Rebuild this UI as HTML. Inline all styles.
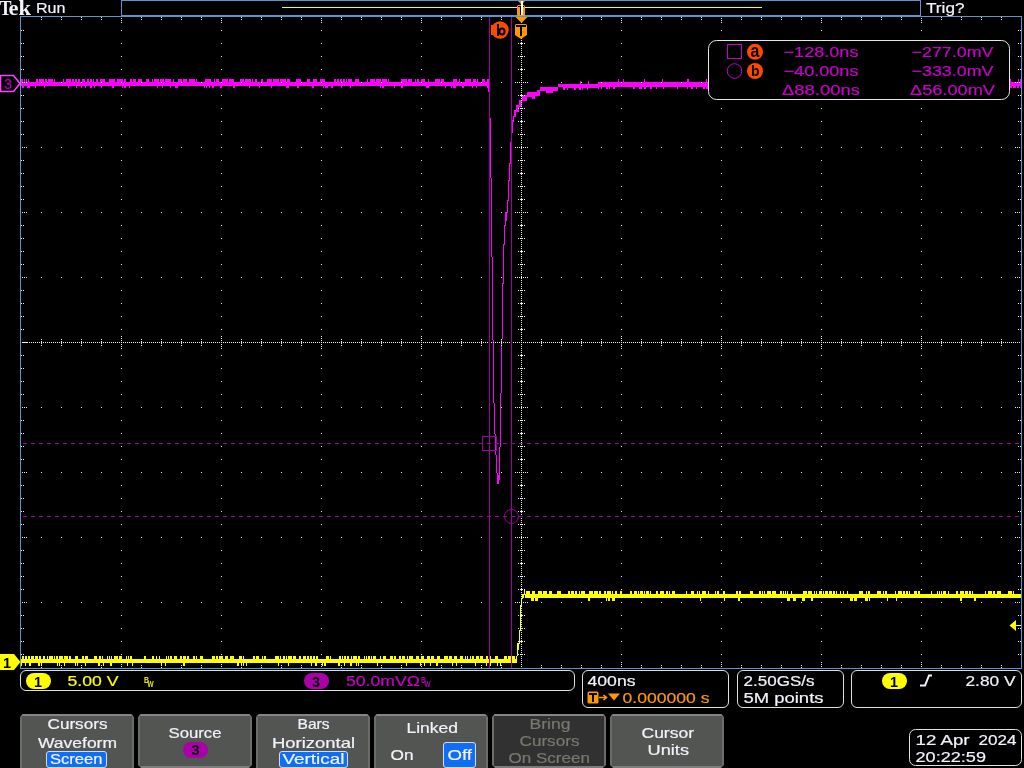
<!DOCTYPE html>
<html><head><meta charset="utf-8"><style>
html,body{margin:0;padding:0;background:#000;width:1024px;height:768px;overflow:hidden}
svg{display:block;will-change:transform}
text{white-space:pre}
</style></head><body>
<svg width="1024" height="768" viewBox="0 0 1024 768">
<rect width="1024" height="768" fill="#000"/>
<g shape-rendering="crispEdges"><rect x="121" y="0" width="800" height="1" fill="#5896d2"/><rect x="121" y="0" width="1" height="16" fill="#5896d2"/><rect x="920" y="0" width="1" height="16" fill="#5896d2"/><rect x="121" y="15" width="800" height="1" fill="#5896d2"/><rect x="282" y="7" width="480" height="1" fill="#ffff00"/><rect x="20" y="16" width="1002" height="1" fill="#5896d2"/><rect x="20" y="668" width="1002" height="1" fill="#5896d2"/><rect x="20" y="16" width="1" height="653" fill="#5896d2"/><rect x="1021" y="16" width="1" height="653" fill="#5896d2"/></g><g fill="#ff00ff" shape-rendering="crispEdges"><rect x="21" y="79" width="1" height="7"/><rect x="22" y="79" width="1" height="9"/><rect x="23" y="82" width="1" height="6"/><rect x="24" y="79" width="1" height="7"/><rect x="25" y="82" width="1" height="4"/><rect x="26" y="79" width="1" height="7"/><rect x="27" y="82" width="1" height="6"/><rect x="28" y="79" width="1" height="9"/><rect x="29" y="82" width="1" height="6"/><rect x="30" y="82" width="1" height="4"/><rect x="31" y="82" width="1" height="4"/><rect x="32" y="82" width="1" height="4"/><rect x="33" y="82" width="1" height="4"/><rect x="34" y="82" width="1" height="4"/><rect x="35" y="82" width="1" height="6"/><rect x="36" y="79" width="1" height="7"/><rect x="37" y="79" width="1" height="7"/><rect x="38" y="82" width="1" height="4"/><rect x="39" y="79" width="1" height="7"/><rect x="40" y="79" width="1" height="7"/><rect x="41" y="79" width="1" height="7"/><rect x="42" y="79" width="1" height="7"/><rect x="43" y="79" width="1" height="7"/><rect x="44" y="82" width="1" height="6"/><rect x="45" y="79" width="1" height="7"/><rect x="46" y="79" width="1" height="7"/><rect x="47" y="82" width="1" height="4"/><rect x="48" y="79" width="1" height="7"/><rect x="49" y="79" width="1" height="7"/><rect x="50" y="79" width="1" height="7"/><rect x="51" y="79" width="1" height="7"/><rect x="52" y="79" width="1" height="7"/><rect x="53" y="82" width="1" height="4"/><rect x="54" y="79" width="1" height="7"/><rect x="55" y="82" width="1" height="4"/><rect x="56" y="82" width="1" height="4"/><rect x="57" y="82" width="1" height="4"/><rect x="58" y="82" width="1" height="4"/><rect x="59" y="82" width="1" height="4"/><rect x="60" y="82" width="1" height="4"/><rect x="61" y="82" width="1" height="4"/><rect x="62" y="82" width="1" height="4"/><rect x="63" y="79" width="1" height="7"/><rect x="64" y="82" width="1" height="4"/><rect x="65" y="82" width="1" height="4"/><rect x="66" y="79" width="1" height="7"/><rect x="67" y="79" width="1" height="7"/><rect x="68" y="79" width="1" height="9"/><rect x="69" y="79" width="1" height="7"/><rect x="70" y="79" width="1" height="7"/><rect x="71" y="82" width="1" height="4"/><rect x="72" y="79" width="1" height="7"/><rect x="73" y="79" width="1" height="7"/><rect x="74" y="82" width="1" height="4"/><rect x="75" y="79" width="1" height="7"/><rect x="76" y="79" width="1" height="9"/><rect x="77" y="82" width="1" height="4"/><rect x="78" y="79" width="1" height="7"/><rect x="79" y="79" width="1" height="7"/><rect x="80" y="82" width="1" height="4"/><rect x="81" y="82" width="1" height="6"/><rect x="82" y="79" width="1" height="7"/><rect x="83" y="79" width="1" height="7"/><rect x="84" y="79" width="1" height="7"/><rect x="85" y="82" width="1" height="6"/><rect x="86" y="82" width="1" height="4"/><rect x="87" y="79" width="1" height="7"/><rect x="88" y="79" width="1" height="7"/><rect x="89" y="82" width="1" height="4"/><rect x="90" y="79" width="1" height="9"/><rect x="91" y="79" width="1" height="9"/><rect x="92" y="82" width="1" height="4"/><rect x="93" y="79" width="1" height="7"/><rect x="94" y="82" width="1" height="6"/><rect x="95" y="82" width="1" height="4"/><rect x="96" y="79" width="1" height="7"/><rect x="97" y="79" width="1" height="7"/><rect x="98" y="82" width="1" height="4"/><rect x="99" y="82" width="1" height="4"/><rect x="100" y="79" width="1" height="7"/><rect x="101" y="79" width="1" height="9"/><rect x="102" y="79" width="1" height="7"/><rect x="103" y="79" width="1" height="7"/><rect x="104" y="79" width="1" height="7"/><rect x="105" y="82" width="1" height="4"/><rect x="106" y="82" width="1" height="4"/><rect x="107" y="82" width="1" height="4"/><rect x="108" y="82" width="1" height="4"/><rect x="109" y="79" width="1" height="7"/><rect x="110" y="79" width="1" height="7"/><rect x="111" y="79" width="1" height="7"/><rect x="112" y="79" width="1" height="9"/><rect x="113" y="79" width="1" height="9"/><rect x="114" y="79" width="1" height="7"/><rect x="115" y="82" width="1" height="4"/><rect x="116" y="82" width="1" height="4"/><rect x="117" y="79" width="1" height="7"/><rect x="118" y="79" width="1" height="7"/><rect x="119" y="79" width="1" height="7"/><rect x="120" y="79" width="1" height="7"/><rect x="121" y="79" width="1" height="7"/><rect x="122" y="79" width="1" height="9"/><rect x="123" y="82" width="1" height="4"/><rect x="124" y="79" width="1" height="9"/><rect x="125" y="79" width="1" height="9"/><rect x="126" y="82" width="1" height="4"/><rect x="127" y="82" width="1" height="4"/><rect x="128" y="82" width="1" height="4"/><rect x="129" y="82" width="1" height="6"/><rect x="130" y="79" width="1" height="7"/><rect x="131" y="79" width="1" height="7"/><rect x="132" y="82" width="1" height="4"/><rect x="133" y="79" width="1" height="7"/><rect x="134" y="79" width="1" height="7"/><rect x="135" y="79" width="1" height="7"/><rect x="136" y="82" width="1" height="4"/><rect x="137" y="82" width="1" height="4"/><rect x="138" y="79" width="1" height="7"/><rect x="139" y="79" width="1" height="7"/><rect x="140" y="79" width="1" height="7"/><rect x="141" y="79" width="1" height="7"/><rect x="142" y="82" width="1" height="4"/><rect x="143" y="82" width="1" height="4"/><rect x="144" y="82" width="1" height="4"/><rect x="145" y="82" width="1" height="4"/><rect x="146" y="79" width="1" height="7"/><rect x="147" y="79" width="1" height="7"/><rect x="148" y="79" width="1" height="7"/><rect x="149" y="82" width="1" height="4"/><rect x="150" y="82" width="1" height="4"/><rect x="151" y="82" width="1" height="4"/><rect x="152" y="79" width="1" height="7"/><rect x="153" y="82" width="1" height="4"/><rect x="154" y="79" width="1" height="7"/><rect x="155" y="79" width="1" height="7"/><rect x="156" y="79" width="1" height="7"/><rect x="157" y="79" width="1" height="9"/><rect x="158" y="79" width="1" height="7"/><rect x="159" y="82" width="1" height="4"/><rect x="160" y="79" width="1" height="7"/><rect x="161" y="79" width="1" height="7"/><rect x="162" y="79" width="1" height="9"/><rect x="163" y="79" width="1" height="7"/><rect x="164" y="82" width="1" height="4"/><rect x="165" y="79" width="1" height="7"/><rect x="166" y="79" width="1" height="7"/><rect x="167" y="79" width="1" height="7"/><rect x="168" y="79" width="1" height="7"/><rect x="169" y="79" width="1" height="7"/><rect x="170" y="79" width="1" height="9"/><rect x="171" y="82" width="1" height="4"/><rect x="172" y="82" width="1" height="4"/><rect x="173" y="79" width="1" height="7"/><rect x="174" y="82" width="1" height="4"/><rect x="175" y="82" width="1" height="6"/><rect x="176" y="82" width="1" height="6"/><rect x="177" y="82" width="1" height="6"/><rect x="178" y="79" width="1" height="7"/><rect x="179" y="79" width="1" height="7"/><rect x="180" y="79" width="1" height="7"/><rect x="181" y="79" width="1" height="7"/><rect x="182" y="82" width="1" height="4"/><rect x="183" y="79" width="1" height="7"/><rect x="184" y="79" width="1" height="7"/><rect x="185" y="79" width="1" height="7"/><rect x="186" y="79" width="1" height="7"/><rect x="187" y="82" width="1" height="4"/><rect x="188" y="82" width="1" height="4"/><rect x="189" y="79" width="1" height="7"/><rect x="190" y="79" width="1" height="7"/><rect x="191" y="79" width="1" height="7"/><rect x="192" y="79" width="1" height="7"/><rect x="193" y="79" width="1" height="7"/><rect x="194" y="79" width="1" height="7"/><rect x="195" y="82" width="1" height="4"/><rect x="196" y="79" width="1" height="7"/><rect x="197" y="82" width="1" height="4"/><rect x="198" y="82" width="1" height="4"/><rect x="199" y="82" width="1" height="4"/><rect x="200" y="82" width="1" height="4"/><rect x="201" y="82" width="1" height="4"/><rect x="202" y="82" width="1" height="4"/><rect x="203" y="82" width="1" height="4"/><rect x="204" y="82" width="1" height="6"/><rect x="205" y="79" width="1" height="7"/><rect x="206" y="79" width="1" height="9"/><rect x="207" y="79" width="1" height="7"/><rect x="208" y="79" width="1" height="7"/><rect x="209" y="79" width="1" height="9"/><rect x="210" y="79" width="1" height="7"/><rect x="211" y="82" width="1" height="4"/><rect x="212" y="82" width="1" height="6"/><rect x="213" y="82" width="1" height="6"/><rect x="214" y="79" width="1" height="7"/><rect x="215" y="82" width="1" height="4"/><rect x="216" y="79" width="1" height="7"/><rect x="217" y="79" width="1" height="7"/><rect x="218" y="79" width="1" height="7"/><rect x="219" y="82" width="1" height="4"/><rect x="220" y="82" width="1" height="6"/><rect x="221" y="82" width="1" height="6"/><rect x="222" y="79" width="1" height="7"/><rect x="223" y="79" width="1" height="7"/><rect x="224" y="79" width="1" height="7"/><rect x="225" y="79" width="1" height="7"/><rect x="226" y="79" width="1" height="7"/><rect x="227" y="79" width="1" height="7"/><rect x="228" y="82" width="1" height="4"/><rect x="229" y="79" width="1" height="7"/><rect x="230" y="79" width="1" height="7"/><rect x="231" y="79" width="1" height="7"/><rect x="232" y="79" width="1" height="7"/><rect x="233" y="79" width="1" height="9"/><rect x="234" y="82" width="1" height="6"/><rect x="235" y="82" width="1" height="4"/><rect x="236" y="82" width="1" height="4"/><rect x="237" y="82" width="1" height="4"/><rect x="238" y="82" width="1" height="4"/><rect x="239" y="82" width="1" height="4"/><rect x="240" y="79" width="1" height="7"/><rect x="241" y="79" width="1" height="7"/><rect x="242" y="79" width="1" height="7"/><rect x="243" y="79" width="1" height="7"/><rect x="244" y="82" width="1" height="4"/><rect x="245" y="79" width="1" height="7"/><rect x="246" y="79" width="1" height="7"/><rect x="247" y="79" width="1" height="7"/><rect x="248" y="79" width="1" height="7"/><rect x="249" y="79" width="1" height="9"/><rect x="250" y="79" width="1" height="7"/><rect x="251" y="82" width="1" height="4"/><rect x="252" y="79" width="1" height="7"/><rect x="253" y="82" width="1" height="4"/><rect x="254" y="82" width="1" height="4"/><rect x="255" y="79" width="1" height="7"/><rect x="256" y="79" width="1" height="7"/><rect x="257" y="82" width="1" height="4"/><rect x="258" y="82" width="1" height="4"/><rect x="259" y="82" width="1" height="6"/><rect x="260" y="82" width="1" height="4"/><rect x="261" y="79" width="1" height="7"/><rect x="262" y="79" width="1" height="7"/><rect x="263" y="82" width="1" height="4"/><rect x="264" y="82" width="1" height="4"/><rect x="265" y="82" width="1" height="4"/><rect x="266" y="82" width="1" height="4"/><rect x="267" y="79" width="1" height="7"/><rect x="268" y="79" width="1" height="7"/><rect x="269" y="79" width="1" height="7"/><rect x="270" y="79" width="1" height="7"/><rect x="271" y="79" width="1" height="9"/><rect x="272" y="82" width="1" height="4"/><rect x="273" y="79" width="1" height="7"/><rect x="274" y="79" width="1" height="7"/><rect x="275" y="79" width="1" height="7"/><rect x="276" y="79" width="1" height="7"/><rect x="277" y="79" width="1" height="7"/><rect x="278" y="79" width="1" height="7"/><rect x="279" y="82" width="1" height="4"/><rect x="280" y="79" width="1" height="7"/><rect x="281" y="79" width="1" height="7"/><rect x="282" y="79" width="1" height="7"/><rect x="283" y="79" width="1" height="7"/><rect x="284" y="79" width="1" height="7"/><rect x="285" y="79" width="1" height="7"/><rect x="286" y="82" width="1" height="6"/><rect x="287" y="79" width="1" height="9"/><rect x="288" y="79" width="1" height="9"/><rect x="289" y="79" width="1" height="7"/><rect x="290" y="82" width="1" height="4"/><rect x="291" y="82" width="1" height="4"/><rect x="292" y="82" width="1" height="4"/><rect x="293" y="82" width="1" height="4"/><rect x="294" y="82" width="1" height="4"/><rect x="295" y="82" width="1" height="4"/><rect x="296" y="79" width="1" height="7"/><rect x="297" y="79" width="1" height="9"/><rect x="298" y="79" width="1" height="9"/><rect x="299" y="79" width="1" height="7"/><rect x="300" y="79" width="1" height="7"/><rect x="301" y="82" width="1" height="4"/><rect x="302" y="82" width="1" height="4"/><rect x="303" y="82" width="1" height="4"/><rect x="304" y="82" width="1" height="4"/><rect x="305" y="82" width="1" height="4"/><rect x="306" y="82" width="1" height="4"/><rect x="307" y="79" width="1" height="7"/><rect x="308" y="79" width="1" height="7"/><rect x="309" y="79" width="1" height="7"/><rect x="310" y="82" width="1" height="4"/><rect x="311" y="82" width="1" height="4"/><rect x="312" y="82" width="1" height="6"/><rect x="313" y="79" width="1" height="9"/><rect x="314" y="79" width="1" height="7"/><rect x="315" y="79" width="1" height="7"/><rect x="316" y="79" width="1" height="7"/><rect x="317" y="82" width="1" height="4"/><rect x="318" y="82" width="1" height="4"/><rect x="319" y="82" width="1" height="4"/><rect x="320" y="79" width="1" height="7"/><rect x="321" y="79" width="1" height="7"/><rect x="322" y="79" width="1" height="7"/><rect x="323" y="79" width="1" height="9"/><rect x="324" y="79" width="1" height="7"/><rect x="325" y="82" width="1" height="6"/><rect x="326" y="82" width="1" height="6"/><rect x="327" y="82" width="1" height="6"/><rect x="328" y="82" width="1" height="4"/><rect x="329" y="82" width="1" height="4"/><rect x="330" y="82" width="1" height="4"/><rect x="331" y="82" width="1" height="6"/><rect x="332" y="82" width="1" height="6"/><rect x="333" y="82" width="1" height="4"/><rect x="334" y="79" width="1" height="7"/><rect x="335" y="79" width="1" height="7"/><rect x="336" y="82" width="1" height="4"/><rect x="337" y="79" width="1" height="7"/><rect x="338" y="79" width="1" height="7"/><rect x="339" y="82" width="1" height="4"/><rect x="340" y="79" width="1" height="7"/><rect x="341" y="79" width="1" height="9"/><rect x="342" y="82" width="1" height="4"/><rect x="343" y="79" width="1" height="7"/><rect x="344" y="79" width="1" height="7"/><rect x="345" y="82" width="1" height="4"/><rect x="346" y="79" width="1" height="7"/><rect x="347" y="82" width="1" height="4"/><rect x="348" y="79" width="1" height="7"/><rect x="349" y="79" width="1" height="7"/><rect x="350" y="79" width="1" height="9"/><rect x="351" y="79" width="1" height="7"/><rect x="352" y="82" width="1" height="4"/><rect x="353" y="82" width="1" height="4"/><rect x="354" y="82" width="1" height="4"/><rect x="355" y="79" width="1" height="7"/><rect x="356" y="79" width="1" height="7"/><rect x="357" y="79" width="1" height="7"/><rect x="358" y="79" width="1" height="7"/><rect x="359" y="82" width="1" height="4"/><rect x="360" y="82" width="1" height="4"/><rect x="361" y="82" width="1" height="4"/><rect x="362" y="82" width="1" height="4"/><rect x="363" y="82" width="1" height="4"/><rect x="364" y="82" width="1" height="4"/><rect x="365" y="82" width="1" height="4"/><rect x="366" y="82" width="1" height="4"/><rect x="367" y="79" width="1" height="7"/><rect x="368" y="82" width="1" height="4"/><rect x="369" y="82" width="1" height="4"/><rect x="370" y="79" width="1" height="7"/><rect x="371" y="79" width="1" height="7"/><rect x="372" y="79" width="1" height="7"/><rect x="373" y="79" width="1" height="7"/><rect x="374" y="79" width="1" height="7"/><rect x="375" y="82" width="1" height="4"/><rect x="376" y="79" width="1" height="7"/><rect x="377" y="79" width="1" height="7"/><rect x="378" y="79" width="1" height="7"/><rect x="379" y="79" width="1" height="7"/><rect x="380" y="79" width="1" height="9"/><rect x="381" y="82" width="1" height="4"/><rect x="382" y="79" width="1" height="9"/><rect x="383" y="79" width="1" height="9"/><rect x="384" y="79" width="1" height="7"/><rect x="385" y="79" width="1" height="7"/><rect x="386" y="79" width="1" height="7"/><rect x="387" y="82" width="1" height="4"/><rect x="388" y="79" width="1" height="7"/><rect x="389" y="82" width="1" height="4"/><rect x="390" y="82" width="1" height="4"/><rect x="391" y="82" width="1" height="4"/><rect x="392" y="82" width="1" height="4"/><rect x="393" y="82" width="1" height="4"/><rect x="394" y="82" width="1" height="6"/><rect x="395" y="82" width="1" height="4"/><rect x="396" y="82" width="1" height="4"/><rect x="397" y="82" width="1" height="4"/><rect x="398" y="82" width="1" height="4"/><rect x="399" y="82" width="1" height="4"/><rect x="400" y="82" width="1" height="4"/><rect x="401" y="79" width="1" height="9"/><rect x="402" y="79" width="1" height="9"/><rect x="403" y="79" width="1" height="7"/><rect x="404" y="79" width="1" height="7"/><rect x="405" y="79" width="1" height="7"/><rect x="406" y="79" width="1" height="7"/><rect x="407" y="82" width="1" height="4"/><rect x="408" y="79" width="1" height="7"/><rect x="409" y="79" width="1" height="7"/><rect x="410" y="79" width="1" height="7"/><rect x="411" y="79" width="1" height="7"/><rect x="412" y="82" width="1" height="4"/><rect x="413" y="82" width="1" height="4"/><rect x="414" y="82" width="1" height="4"/><rect x="415" y="79" width="1" height="7"/><rect x="416" y="82" width="1" height="4"/><rect x="417" y="79" width="1" height="7"/><rect x="418" y="79" width="1" height="7"/><rect x="419" y="82" width="1" height="4"/><rect x="420" y="82" width="1" height="4"/><rect x="421" y="79" width="1" height="7"/><rect x="422" y="79" width="1" height="7"/><rect x="423" y="79" width="1" height="7"/><rect x="424" y="79" width="1" height="7"/><rect x="425" y="82" width="1" height="4"/><rect x="426" y="82" width="1" height="6"/><rect x="427" y="82" width="1" height="6"/><rect x="428" y="79" width="1" height="9"/><rect x="429" y="82" width="1" height="4"/><rect x="430" y="82" width="1" height="4"/><rect x="431" y="82" width="1" height="4"/><rect x="432" y="82" width="1" height="4"/><rect x="433" y="82" width="1" height="4"/><rect x="434" y="82" width="1" height="4"/><rect x="435" y="79" width="1" height="7"/><rect x="436" y="79" width="1" height="7"/><rect x="437" y="79" width="1" height="7"/><rect x="438" y="79" width="1" height="7"/><rect x="439" y="79" width="1" height="7"/><rect x="440" y="82" width="1" height="4"/><rect x="441" y="79" width="1" height="7"/><rect x="442" y="79" width="1" height="7"/><rect x="443" y="79" width="1" height="7"/><rect x="444" y="82" width="1" height="4"/><rect x="445" y="82" width="1" height="6"/><rect x="446" y="82" width="1" height="4"/><rect x="447" y="82" width="1" height="4"/><rect x="448" y="82" width="1" height="4"/><rect x="449" y="82" width="1" height="4"/><rect x="450" y="82" width="1" height="4"/><rect x="451" y="82" width="1" height="6"/><rect x="452" y="82" width="1" height="4"/><rect x="453" y="79" width="1" height="9"/><rect x="454" y="79" width="1" height="9"/><rect x="455" y="79" width="1" height="9"/><rect x="456" y="79" width="1" height="7"/><rect x="457" y="82" width="1" height="4"/><rect x="458" y="82" width="1" height="4"/><rect x="459" y="79" width="1" height="7"/><rect x="460" y="82" width="1" height="4"/><rect x="461" y="82" width="1" height="4"/><rect x="462" y="82" width="1" height="6"/><rect x="463" y="82" width="1" height="6"/><rect x="464" y="82" width="1" height="4"/><rect x="465" y="79" width="1" height="7"/><rect x="466" y="79" width="1" height="7"/><rect x="467" y="79" width="1" height="7"/><rect x="468" y="79" width="1" height="7"/><rect x="469" y="79" width="1" height="7"/><rect x="470" y="79" width="1" height="7"/><rect x="471" y="82" width="1" height="4"/><rect x="472" y="82" width="1" height="6"/><rect x="473" y="79" width="1" height="7"/><rect x="474" y="79" width="1" height="7"/><rect x="475" y="79" width="1" height="7"/><rect x="476" y="82" width="1" height="6"/><rect x="477" y="79" width="1" height="7"/><rect x="478" y="82" width="1" height="4"/><rect x="479" y="82" width="1" height="4"/><rect x="480" y="82" width="1" height="4"/><rect x="481" y="82" width="1" height="4"/><rect x="482" y="79" width="1" height="7"/><rect x="483" y="79" width="1" height="7"/><rect x="484" y="79" width="1" height="7"/><rect x="485" y="82" width="1" height="4"/><rect x="486" y="82" width="1" height="4"/><rect x="487" y="79" width="1" height="9"/><rect x="488" y="79" width="1" height="7"/><rect x="488" y="82" width="1" height="10"/><rect x="489" y="82" width="1" height="36"/><rect x="490" y="118" width="1" height="60"/><rect x="491" y="178" width="1" height="79"/><rect x="492" y="257" width="1" height="83"/><rect x="493" y="340" width="1" height="63"/><rect x="494" y="403" width="1" height="31"/><rect x="495" y="434" width="1" height="21"/><rect x="496" y="455" width="1" height="18"/><rect x="497" y="473" width="1" height="11"/><rect x="498" y="475" width="1" height="9"/><rect x="499" y="447" width="1" height="33"/><rect x="500" y="393" width="1" height="54"/><rect x="501" y="340" width="1" height="53"/><rect x="502" y="283" width="1" height="56"/><rect x="503" y="244" width="1" height="40"/><rect x="504" y="225" width="1" height="20"/><rect x="505" y="212" width="1" height="14"/><rect x="506" y="212" width="1" height="9"/><rect x="507" y="200" width="1" height="13"/><rect x="508" y="180" width="1" height="21"/><rect x="509" y="163" width="1" height="18"/><rect x="510" y="142" width="1" height="22"/><rect x="511" y="118" width="1" height="25"/><rect x="512" y="120" width="1" height="13"/><rect x="513" y="116" width="1" height="6"/><rect x="514" y="110" width="1" height="7"/><rect x="515" y="110" width="1" height="7"/><rect x="516" y="105" width="1" height="7"/><rect x="517" y="105" width="1" height="7"/><rect x="518" y="105" width="1" height="7"/><rect x="519" y="100" width="1" height="7"/><rect x="520" y="100" width="1" height="7"/><rect x="521" y="100" width="1" height="7"/><rect x="522" y="95" width="1" height="6"/><rect x="523" y="95" width="1" height="6"/><rect x="524" y="95" width="1" height="6"/><rect x="525" y="95" width="1" height="6"/><rect x="526" y="95" width="1" height="6"/><rect x="527" y="92" width="1" height="5"/><rect x="528" y="92" width="1" height="5"/><rect x="529" y="92" width="1" height="5"/><rect x="530" y="92" width="1" height="5"/><rect x="531" y="92" width="1" height="5"/><rect x="532" y="92" width="1" height="7"/><rect x="533" y="92" width="1" height="7"/><rect x="534" y="92" width="1" height="7"/><rect x="535" y="92" width="1" height="4"/><rect x="536" y="92" width="1" height="4"/><rect x="537" y="90" width="1" height="6"/><rect x="538" y="90" width="1" height="6"/><rect x="539" y="90" width="1" height="6"/><rect x="540" y="87" width="1" height="4"/><rect x="541" y="87" width="1" height="4"/><rect x="542" y="87" width="1" height="4"/><rect x="543" y="87" width="1" height="4"/><rect x="544" y="87" width="1" height="4"/><rect x="545" y="87" width="1" height="4"/><rect x="546" y="87" width="1" height="6"/><rect x="547" y="87" width="1" height="6"/><rect x="548" y="87" width="1" height="6"/><rect x="549" y="87" width="1" height="6"/><rect x="550" y="87" width="1" height="6"/><rect x="551" y="87" width="1" height="6"/><rect x="552" y="87" width="1" height="6"/><rect x="553" y="87" width="1" height="4"/><rect x="554" y="87" width="1" height="4"/><rect x="555" y="87" width="1" height="4"/><rect x="556" y="87" width="1" height="4"/><rect x="557" y="87" width="1" height="4"/><rect x="558" y="84" width="1" height="3"/><rect x="559" y="84" width="1" height="3"/><rect x="560" y="84" width="1" height="3"/><rect x="561" y="84" width="1" height="3"/><rect x="562" y="84" width="1" height="3"/><rect x="563" y="84" width="1" height="6"/><rect x="564" y="84" width="1" height="6"/><rect x="565" y="84" width="1" height="4"/><rect x="566" y="84" width="1" height="4"/><rect x="567" y="84" width="1" height="6"/><rect x="568" y="84" width="1" height="4"/><rect x="569" y="84" width="1" height="4"/><rect x="570" y="84" width="1" height="4"/><rect x="571" y="84" width="1" height="4"/><rect x="572" y="84" width="1" height="4"/><rect x="573" y="84" width="1" height="4"/><rect x="574" y="84" width="1" height="6"/><rect x="575" y="84" width="1" height="6"/><rect x="576" y="84" width="1" height="4"/><rect x="577" y="84" width="1" height="4"/><rect x="578" y="84" width="1" height="4"/><rect x="579" y="84" width="1" height="6"/><rect x="580" y="81" width="1" height="9"/><rect x="581" y="84" width="1" height="4"/><rect x="582" y="84" width="1" height="6"/><rect x="583" y="84" width="1" height="4"/><rect x="584" y="84" width="1" height="4"/><rect x="585" y="84" width="1" height="4"/><rect x="586" y="84" width="1" height="4"/><rect x="587" y="84" width="1" height="6"/><rect x="588" y="81" width="1" height="7"/><rect x="589" y="84" width="1" height="4"/><rect x="590" y="84" width="1" height="4"/><rect x="591" y="84" width="1" height="4"/><rect x="592" y="84" width="1" height="4"/><rect x="593" y="84" width="1" height="4"/><rect x="594" y="84" width="1" height="4"/><rect x="595" y="84" width="1" height="4"/><rect x="596" y="84" width="1" height="4"/><rect x="597" y="84" width="1" height="4"/><rect x="598" y="82" width="1" height="7"/><rect x="599" y="82" width="1" height="5"/><rect x="600" y="82" width="1" height="5"/><rect x="601" y="82" width="1" height="7"/><rect x="602" y="82" width="1" height="5"/><rect x="603" y="82" width="1" height="5"/><rect x="604" y="82" width="1" height="5"/><rect x="605" y="82" width="1" height="5"/><rect x="606" y="82" width="1" height="7"/><rect x="607" y="82" width="1" height="7"/><rect x="608" y="82" width="1" height="5"/><rect x="609" y="82" width="1" height="7"/><rect x="610" y="82" width="1" height="5"/><rect x="611" y="82" width="1" height="5"/><rect x="612" y="82" width="1" height="5"/><rect x="613" y="82" width="1" height="7"/><rect x="614" y="82" width="1" height="7"/><rect x="615" y="82" width="1" height="5"/><rect x="616" y="82" width="1" height="5"/><rect x="617" y="82" width="1" height="5"/><rect x="618" y="79" width="1" height="8"/><rect x="619" y="82" width="1" height="5"/><rect x="620" y="82" width="1" height="5"/><rect x="621" y="82" width="1" height="5"/><rect x="622" y="82" width="1" height="5"/><rect x="623" y="79" width="1" height="8"/><rect x="624" y="82" width="1" height="5"/><rect x="625" y="82" width="1" height="5"/><rect x="626" y="82" width="1" height="5"/><rect x="627" y="82" width="1" height="5"/><rect x="628" y="82" width="1" height="5"/><rect x="629" y="82" width="1" height="5"/><rect x="630" y="82" width="1" height="5"/><rect x="631" y="82" width="1" height="5"/><rect x="632" y="82" width="1" height="5"/><rect x="633" y="82" width="1" height="7"/><rect x="634" y="82" width="1" height="7"/><rect x="635" y="82" width="1" height="5"/><rect x="636" y="82" width="1" height="5"/><rect x="637" y="82" width="1" height="5"/><rect x="638" y="82" width="1" height="5"/><rect x="639" y="82" width="1" height="7"/><rect x="640" y="82" width="1" height="7"/><rect x="641" y="82" width="1" height="7"/><rect x="642" y="82" width="1" height="5"/><rect x="643" y="82" width="1" height="5"/><rect x="644" y="79" width="1" height="10"/><rect x="645" y="82" width="1" height="7"/><rect x="646" y="82" width="1" height="5"/><rect x="647" y="82" width="1" height="5"/><rect x="648" y="82" width="1" height="5"/><rect x="649" y="82" width="1" height="5"/><rect x="650" y="82" width="1" height="7"/><rect x="651" y="82" width="1" height="7"/><rect x="652" y="82" width="1" height="5"/><rect x="653" y="82" width="1" height="5"/><rect x="654" y="82" width="1" height="5"/><rect x="655" y="82" width="1" height="5"/><rect x="656" y="82" width="1" height="7"/><rect x="657" y="82" width="1" height="5"/><rect x="658" y="82" width="1" height="5"/><rect x="659" y="82" width="1" height="5"/><rect x="660" y="82" width="1" height="5"/><rect x="661" y="82" width="1" height="5"/><rect x="662" y="79" width="1" height="8"/><rect x="663" y="82" width="1" height="7"/><rect x="664" y="82" width="1" height="5"/><rect x="665" y="82" width="1" height="5"/><rect x="666" y="82" width="1" height="5"/><rect x="667" y="82" width="1" height="5"/><rect x="668" y="82" width="1" height="5"/><rect x="669" y="82" width="1" height="5"/><rect x="670" y="82" width="1" height="5"/><rect x="671" y="82" width="1" height="5"/><rect x="672" y="82" width="1" height="5"/><rect x="673" y="82" width="1" height="5"/><rect x="674" y="82" width="1" height="5"/><rect x="675" y="82" width="1" height="5"/><rect x="676" y="82" width="1" height="5"/><rect x="677" y="82" width="1" height="7"/><rect x="678" y="82" width="1" height="5"/><rect x="679" y="82" width="1" height="5"/><rect x="680" y="82" width="1" height="5"/><rect x="681" y="82" width="1" height="5"/><rect x="682" y="82" width="1" height="5"/><rect x="683" y="82" width="1" height="5"/><rect x="684" y="82" width="1" height="5"/><rect x="685" y="82" width="1" height="5"/><rect x="686" y="82" width="1" height="5"/><rect x="687" y="79" width="1" height="10"/><rect x="688" y="79" width="1" height="8"/><rect x="689" y="82" width="1" height="5"/><rect x="690" y="82" width="1" height="5"/><rect x="691" y="82" width="1" height="7"/><rect x="692" y="82" width="1" height="7"/><rect x="693" y="82" width="1" height="5"/><rect x="694" y="82" width="1" height="5"/><rect x="695" y="82" width="1" height="5"/><rect x="696" y="82" width="1" height="7"/><rect x="697" y="82" width="1" height="5"/><rect x="698" y="82" width="1" height="5"/><rect x="699" y="82" width="1" height="5"/><rect x="700" y="82" width="1" height="5"/><rect x="701" y="82" width="1" height="5"/><rect x="702" y="82" width="1" height="5"/><rect x="703" y="82" width="1" height="7"/><rect x="704" y="82" width="1" height="7"/><rect x="705" y="82" width="1" height="5"/><rect x="706" y="79" width="1" height="10"/><rect x="707" y="82" width="1" height="7"/><rect x="1009" y="82" width="1" height="4"/><rect x="1010" y="79" width="1" height="9"/><rect x="1011" y="82" width="1" height="6"/><rect x="1012" y="82" width="1" height="4"/><rect x="1013" y="82" width="1" height="6"/><rect x="1014" y="82" width="1" height="6"/><rect x="1015" y="82" width="1" height="6"/><rect x="1016" y="82" width="1" height="4"/><rect x="1017" y="82" width="1" height="6"/><rect x="1018" y="79" width="1" height="9"/><rect x="1019" y="82" width="1" height="4"/><rect x="1020" y="79" width="1" height="9"/></g><g fill="#ffff00" shape-rendering="crispEdges"><rect x="21" y="659" width="1" height="7"/><rect x="22" y="656" width="1" height="7"/><rect x="23" y="656" width="1" height="7"/><rect x="24" y="659" width="1" height="4"/><rect x="25" y="656" width="1" height="10"/><rect x="26" y="656" width="1" height="7"/><rect x="27" y="659" width="1" height="4"/><rect x="28" y="656" width="1" height="7"/><rect x="29" y="656" width="1" height="10"/><rect x="30" y="659" width="1" height="7"/><rect x="31" y="656" width="1" height="7"/><rect x="32" y="656" width="1" height="7"/><rect x="33" y="656" width="1" height="7"/><rect x="34" y="659" width="1" height="4"/><rect x="35" y="656" width="1" height="7"/><rect x="36" y="656" width="1" height="7"/><rect x="37" y="656" width="1" height="7"/><rect x="38" y="659" width="1" height="7"/><rect x="39" y="656" width="1" height="10"/><rect x="40" y="656" width="1" height="7"/><rect x="41" y="659" width="1" height="7"/><rect x="42" y="659" width="1" height="4"/><rect x="43" y="656" width="1" height="7"/><rect x="44" y="656" width="1" height="7"/><rect x="45" y="659" width="1" height="4"/><rect x="46" y="659" width="1" height="4"/><rect x="47" y="656" width="1" height="7"/><rect x="48" y="659" width="1" height="4"/><rect x="49" y="656" width="1" height="7"/><rect x="50" y="656" width="1" height="7"/><rect x="51" y="656" width="1" height="7"/><rect x="52" y="656" width="1" height="7"/><rect x="53" y="659" width="1" height="4"/><rect x="54" y="656" width="1" height="7"/><rect x="55" y="659" width="1" height="4"/><rect x="56" y="656" width="1" height="7"/><rect x="57" y="656" width="1" height="10"/><rect x="58" y="659" width="1" height="4"/><rect x="59" y="656" width="1" height="10"/><rect x="60" y="656" width="1" height="7"/><rect x="61" y="656" width="1" height="7"/><rect x="62" y="656" width="1" height="7"/><rect x="63" y="659" width="1" height="4"/><rect x="64" y="656" width="1" height="10"/><rect x="65" y="656" width="1" height="7"/><rect x="66" y="656" width="1" height="7"/><rect x="67" y="656" width="1" height="7"/><rect x="68" y="659" width="1" height="4"/><rect x="69" y="656" width="1" height="7"/><rect x="70" y="656" width="1" height="7"/><rect x="71" y="659" width="1" height="4"/><rect x="72" y="659" width="1" height="4"/><rect x="73" y="659" width="1" height="4"/><rect x="74" y="659" width="1" height="4"/><rect x="75" y="656" width="1" height="10"/><rect x="76" y="656" width="1" height="7"/><rect x="77" y="656" width="1" height="10"/><rect x="78" y="659" width="1" height="4"/><rect x="79" y="659" width="1" height="4"/><rect x="80" y="659" width="1" height="4"/><rect x="81" y="659" width="1" height="4"/><rect x="82" y="656" width="1" height="7"/><rect x="83" y="656" width="1" height="7"/><rect x="84" y="659" width="1" height="4"/><rect x="85" y="656" width="1" height="10"/><rect x="86" y="656" width="1" height="7"/><rect x="87" y="656" width="1" height="7"/><rect x="88" y="659" width="1" height="4"/><rect x="89" y="659" width="1" height="4"/><rect x="90" y="659" width="1" height="4"/><rect x="91" y="659" width="1" height="4"/><rect x="92" y="659" width="1" height="4"/><rect x="93" y="659" width="1" height="4"/><rect x="94" y="656" width="1" height="7"/><rect x="95" y="656" width="1" height="7"/><rect x="96" y="656" width="1" height="7"/><rect x="97" y="659" width="1" height="4"/><rect x="98" y="659" width="1" height="7"/><rect x="99" y="656" width="1" height="10"/><rect x="100" y="656" width="1" height="7"/><rect x="101" y="659" width="1" height="4"/><rect x="102" y="656" width="1" height="7"/><rect x="103" y="659" width="1" height="7"/><rect x="104" y="659" width="1" height="4"/><rect x="105" y="659" width="1" height="4"/><rect x="106" y="659" width="1" height="4"/><rect x="107" y="656" width="1" height="7"/><rect x="108" y="659" width="1" height="4"/><rect x="109" y="656" width="1" height="7"/><rect x="110" y="659" width="1" height="7"/><rect x="111" y="656" width="1" height="10"/><rect x="112" y="659" width="1" height="4"/><rect x="113" y="659" width="1" height="4"/><rect x="114" y="656" width="1" height="7"/><rect x="115" y="656" width="1" height="7"/><rect x="116" y="656" width="1" height="7"/><rect x="117" y="656" width="1" height="7"/><rect x="118" y="659" width="1" height="4"/><rect x="119" y="656" width="1" height="7"/><rect x="120" y="656" width="1" height="7"/><rect x="121" y="656" width="1" height="7"/><rect x="122" y="659" width="1" height="4"/><rect x="123" y="659" width="1" height="4"/><rect x="124" y="659" width="1" height="4"/><rect x="125" y="659" width="1" height="4"/><rect x="126" y="656" width="1" height="7"/><rect x="127" y="659" width="1" height="7"/><rect x="128" y="656" width="1" height="7"/><rect x="129" y="659" width="1" height="4"/><rect x="130" y="656" width="1" height="7"/><rect x="131" y="656" width="1" height="7"/><rect x="132" y="659" width="1" height="7"/><rect x="133" y="659" width="1" height="4"/><rect x="134" y="659" width="1" height="4"/><rect x="135" y="659" width="1" height="4"/><rect x="136" y="659" width="1" height="4"/><rect x="137" y="659" width="1" height="4"/><rect x="138" y="659" width="1" height="4"/><rect x="139" y="659" width="1" height="4"/><rect x="140" y="659" width="1" height="4"/><rect x="141" y="659" width="1" height="4"/><rect x="142" y="659" width="1" height="4"/><rect x="143" y="659" width="1" height="4"/><rect x="144" y="656" width="1" height="7"/><rect x="145" y="656" width="1" height="7"/><rect x="146" y="659" width="1" height="4"/><rect x="147" y="659" width="1" height="4"/><rect x="148" y="659" width="1" height="4"/><rect x="149" y="659" width="1" height="4"/><rect x="150" y="659" width="1" height="4"/><rect x="151" y="659" width="1" height="4"/><rect x="152" y="656" width="1" height="7"/><rect x="153" y="656" width="1" height="7"/><rect x="154" y="659" width="1" height="4"/><rect x="155" y="659" width="1" height="4"/><rect x="156" y="656" width="1" height="7"/><rect x="157" y="659" width="1" height="4"/><rect x="158" y="659" width="1" height="4"/><rect x="159" y="656" width="1" height="7"/><rect x="160" y="659" width="1" height="4"/><rect x="161" y="659" width="1" height="7"/><rect x="162" y="659" width="1" height="4"/><rect x="163" y="659" width="1" height="4"/><rect x="164" y="659" width="1" height="4"/><rect x="165" y="659" width="1" height="7"/><rect x="166" y="656" width="1" height="7"/><rect x="167" y="659" width="1" height="4"/><rect x="168" y="656" width="1" height="7"/><rect x="169" y="659" width="1" height="4"/><rect x="170" y="656" width="1" height="7"/><rect x="171" y="656" width="1" height="7"/><rect x="172" y="659" width="1" height="4"/><rect x="173" y="659" width="1" height="4"/><rect x="174" y="656" width="1" height="7"/><rect x="175" y="656" width="1" height="7"/><rect x="176" y="656" width="1" height="7"/><rect x="177" y="659" width="1" height="4"/><rect x="178" y="659" width="1" height="4"/><rect x="179" y="659" width="1" height="4"/><rect x="180" y="656" width="1" height="7"/><rect x="181" y="656" width="1" height="7"/><rect x="182" y="659" width="1" height="4"/><rect x="183" y="656" width="1" height="10"/><rect x="184" y="656" width="1" height="10"/><rect x="185" y="656" width="1" height="7"/><rect x="186" y="659" width="1" height="4"/><rect x="187" y="656" width="1" height="7"/><rect x="188" y="656" width="1" height="7"/><rect x="189" y="659" width="1" height="4"/><rect x="190" y="659" width="1" height="4"/><rect x="191" y="659" width="1" height="4"/><rect x="192" y="659" width="1" height="4"/><rect x="193" y="656" width="1" height="7"/><rect x="194" y="656" width="1" height="7"/><rect x="195" y="659" width="1" height="4"/><rect x="196" y="656" width="1" height="7"/><rect x="197" y="659" width="1" height="4"/><rect x="198" y="659" width="1" height="4"/><rect x="199" y="659" width="1" height="4"/><rect x="200" y="656" width="1" height="7"/><rect x="201" y="656" width="1" height="7"/><rect x="202" y="656" width="1" height="7"/><rect x="203" y="659" width="1" height="4"/><rect x="204" y="659" width="1" height="4"/><rect x="205" y="659" width="1" height="4"/><rect x="206" y="659" width="1" height="4"/><rect x="207" y="659" width="1" height="4"/><rect x="208" y="659" width="1" height="4"/><rect x="209" y="659" width="1" height="4"/><rect x="210" y="659" width="1" height="4"/><rect x="211" y="659" width="1" height="4"/><rect x="212" y="656" width="1" height="7"/><rect x="213" y="656" width="1" height="7"/><rect x="214" y="656" width="1" height="7"/><rect x="215" y="659" width="1" height="4"/><rect x="216" y="656" width="1" height="7"/><rect x="217" y="656" width="1" height="7"/><rect x="218" y="659" width="1" height="4"/><rect x="219" y="656" width="1" height="7"/><rect x="220" y="656" width="1" height="7"/><rect x="221" y="656" width="1" height="7"/><rect x="222" y="656" width="1" height="7"/><rect x="223" y="659" width="1" height="4"/><rect x="224" y="659" width="1" height="4"/><rect x="225" y="656" width="1" height="7"/><rect x="226" y="656" width="1" height="7"/><rect x="227" y="656" width="1" height="7"/><rect x="228" y="659" width="1" height="4"/><rect x="229" y="659" width="1" height="4"/><rect x="230" y="656" width="1" height="7"/><rect x="231" y="656" width="1" height="7"/><rect x="232" y="656" width="1" height="7"/><rect x="233" y="656" width="1" height="7"/><rect x="234" y="659" width="1" height="4"/><rect x="235" y="659" width="1" height="4"/><rect x="236" y="659" width="1" height="4"/><rect x="237" y="659" width="1" height="7"/><rect x="238" y="659" width="1" height="7"/><rect x="239" y="656" width="1" height="7"/><rect x="240" y="656" width="1" height="7"/><rect x="241" y="656" width="1" height="10"/><rect x="242" y="659" width="1" height="4"/><rect x="243" y="656" width="1" height="10"/><rect x="244" y="659" width="1" height="4"/><rect x="245" y="659" width="1" height="4"/><rect x="246" y="659" width="1" height="7"/><rect x="247" y="659" width="1" height="4"/><rect x="248" y="659" width="1" height="4"/><rect x="249" y="659" width="1" height="4"/><rect x="250" y="659" width="1" height="4"/><rect x="251" y="659" width="1" height="4"/><rect x="252" y="659" width="1" height="4"/><rect x="253" y="656" width="1" height="7"/><rect x="254" y="656" width="1" height="7"/><rect x="255" y="659" width="1" height="4"/><rect x="256" y="656" width="1" height="7"/><rect x="257" y="656" width="1" height="7"/><rect x="258" y="656" width="1" height="7"/><rect x="259" y="659" width="1" height="4"/><rect x="260" y="659" width="1" height="4"/><rect x="261" y="659" width="1" height="4"/><rect x="262" y="656" width="1" height="7"/><rect x="263" y="659" width="1" height="4"/><rect x="264" y="656" width="1" height="7"/><rect x="265" y="656" width="1" height="7"/><rect x="266" y="659" width="1" height="4"/><rect x="267" y="659" width="1" height="4"/><rect x="268" y="659" width="1" height="4"/><rect x="269" y="659" width="1" height="4"/><rect x="270" y="659" width="1" height="4"/><rect x="271" y="659" width="1" height="4"/><rect x="272" y="659" width="1" height="4"/><rect x="273" y="659" width="1" height="4"/><rect x="274" y="659" width="1" height="4"/><rect x="275" y="656" width="1" height="7"/><rect x="276" y="656" width="1" height="7"/><rect x="277" y="656" width="1" height="7"/><rect x="278" y="656" width="1" height="10"/><rect x="279" y="659" width="1" height="4"/><rect x="280" y="656" width="1" height="7"/><rect x="281" y="659" width="1" height="4"/><rect x="282" y="659" width="1" height="4"/><rect x="283" y="656" width="1" height="7"/><rect x="284" y="656" width="1" height="7"/><rect x="285" y="659" width="1" height="4"/><rect x="286" y="656" width="1" height="7"/><rect x="287" y="659" width="1" height="4"/><rect x="288" y="656" width="1" height="10"/><rect x="289" y="656" width="1" height="7"/><rect x="290" y="656" width="1" height="7"/><rect x="291" y="656" width="1" height="7"/><rect x="292" y="659" width="1" height="4"/><rect x="293" y="656" width="1" height="7"/><rect x="294" y="656" width="1" height="7"/><rect x="295" y="656" width="1" height="7"/><rect x="296" y="659" width="1" height="4"/><rect x="297" y="659" width="1" height="4"/><rect x="298" y="659" width="1" height="4"/><rect x="299" y="656" width="1" height="7"/><rect x="300" y="656" width="1" height="7"/><rect x="301" y="659" width="1" height="4"/><rect x="302" y="659" width="1" height="4"/><rect x="303" y="656" width="1" height="7"/><rect x="304" y="656" width="1" height="7"/><rect x="305" y="656" width="1" height="7"/><rect x="306" y="659" width="1" height="4"/><rect x="307" y="656" width="1" height="7"/><rect x="308" y="656" width="1" height="7"/><rect x="309" y="659" width="1" height="4"/><rect x="310" y="656" width="1" height="7"/><rect x="311" y="656" width="1" height="10"/><rect x="312" y="659" width="1" height="4"/><rect x="313" y="656" width="1" height="7"/><rect x="314" y="656" width="1" height="7"/><rect x="315" y="659" width="1" height="7"/><rect x="316" y="656" width="1" height="10"/><rect x="317" y="656" width="1" height="7"/><rect x="318" y="659" width="1" height="4"/><rect x="319" y="659" width="1" height="4"/><rect x="320" y="659" width="1" height="4"/><rect x="321" y="659" width="1" height="4"/><rect x="322" y="659" width="1" height="7"/><rect x="323" y="659" width="1" height="4"/><rect x="324" y="659" width="1" height="7"/><rect x="325" y="659" width="1" height="7"/><rect x="326" y="656" width="1" height="7"/><rect x="327" y="656" width="1" height="7"/><rect x="328" y="656" width="1" height="7"/><rect x="329" y="659" width="1" height="4"/><rect x="330" y="656" width="1" height="7"/><rect x="331" y="659" width="1" height="4"/><rect x="332" y="659" width="1" height="4"/><rect x="333" y="659" width="1" height="4"/><rect x="334" y="659" width="1" height="4"/><rect x="335" y="659" width="1" height="4"/><rect x="336" y="659" width="1" height="4"/><rect x="337" y="659" width="1" height="4"/><rect x="338" y="659" width="1" height="7"/><rect x="339" y="656" width="1" height="10"/><rect x="340" y="656" width="1" height="7"/><rect x="341" y="659" width="1" height="4"/><rect x="342" y="656" width="1" height="7"/><rect x="343" y="659" width="1" height="4"/><rect x="344" y="656" width="1" height="10"/><rect x="345" y="656" width="1" height="7"/><rect x="346" y="659" width="1" height="4"/><rect x="347" y="656" width="1" height="7"/><rect x="348" y="656" width="1" height="7"/><rect x="349" y="659" width="1" height="4"/><rect x="350" y="659" width="1" height="7"/><rect x="351" y="656" width="1" height="10"/><rect x="352" y="659" width="1" height="4"/><rect x="353" y="656" width="1" height="7"/><rect x="354" y="656" width="1" height="7"/><rect x="355" y="656" width="1" height="7"/><rect x="356" y="656" width="1" height="10"/><rect x="357" y="659" width="1" height="4"/><rect x="358" y="656" width="1" height="10"/><rect x="359" y="656" width="1" height="7"/><rect x="360" y="659" width="1" height="4"/><rect x="361" y="659" width="1" height="4"/><rect x="362" y="659" width="1" height="4"/><rect x="363" y="659" width="1" height="4"/><rect x="364" y="656" width="1" height="7"/><rect x="365" y="659" width="1" height="4"/><rect x="366" y="656" width="1" height="7"/><rect x="367" y="659" width="1" height="4"/><rect x="368" y="656" width="1" height="7"/><rect x="369" y="656" width="1" height="7"/><rect x="370" y="659" width="1" height="4"/><rect x="371" y="656" width="1" height="7"/><rect x="372" y="659" width="1" height="4"/><rect x="373" y="656" width="1" height="7"/><rect x="374" y="656" width="1" height="7"/><rect x="375" y="656" width="1" height="7"/><rect x="376" y="659" width="1" height="4"/><rect x="377" y="659" width="1" height="7"/><rect x="378" y="659" width="1" height="4"/><rect x="379" y="659" width="1" height="4"/><rect x="380" y="656" width="1" height="7"/><rect x="381" y="659" width="1" height="4"/><rect x="382" y="659" width="1" height="4"/><rect x="383" y="656" width="1" height="7"/><rect x="384" y="656" width="1" height="7"/><rect x="385" y="656" width="1" height="7"/><rect x="386" y="659" width="1" height="4"/><rect x="387" y="659" width="1" height="4"/><rect x="388" y="659" width="1" height="4"/><rect x="389" y="659" width="1" height="4"/><rect x="390" y="656" width="1" height="7"/><rect x="391" y="656" width="1" height="7"/><rect x="392" y="656" width="1" height="7"/><rect x="393" y="659" width="1" height="4"/><rect x="394" y="656" width="1" height="7"/><rect x="395" y="656" width="1" height="7"/><rect x="396" y="659" width="1" height="4"/><rect x="397" y="659" width="1" height="4"/><rect x="398" y="659" width="1" height="4"/><rect x="399" y="656" width="1" height="7"/><rect x="400" y="656" width="1" height="7"/><rect x="401" y="659" width="1" height="4"/><rect x="402" y="656" width="1" height="7"/><rect x="403" y="656" width="1" height="7"/><rect x="404" y="656" width="1" height="7"/><rect x="405" y="659" width="1" height="4"/><rect x="406" y="659" width="1" height="7"/><rect x="407" y="656" width="1" height="7"/><rect x="408" y="659" width="1" height="4"/><rect x="409" y="656" width="1" height="7"/><rect x="410" y="656" width="1" height="7"/><rect x="411" y="656" width="1" height="7"/><rect x="412" y="656" width="1" height="7"/><rect x="413" y="659" width="1" height="4"/><rect x="414" y="659" width="1" height="4"/><rect x="415" y="659" width="1" height="4"/><rect x="416" y="656" width="1" height="7"/><rect x="417" y="656" width="1" height="7"/><rect x="418" y="656" width="1" height="7"/><rect x="419" y="659" width="1" height="4"/><rect x="420" y="659" width="1" height="7"/><rect x="421" y="656" width="1" height="7"/><rect x="422" y="656" width="1" height="7"/><rect x="423" y="656" width="1" height="7"/><rect x="424" y="659" width="1" height="7"/><rect x="425" y="659" width="1" height="4"/><rect x="426" y="659" width="1" height="4"/><rect x="427" y="656" width="1" height="7"/><rect x="428" y="656" width="1" height="7"/><rect x="429" y="656" width="1" height="7"/><rect x="430" y="659" width="1" height="7"/><rect x="431" y="656" width="1" height="7"/><rect x="432" y="656" width="1" height="7"/><rect x="433" y="656" width="1" height="7"/><rect x="434" y="659" width="1" height="4"/><rect x="435" y="659" width="1" height="4"/><rect x="436" y="659" width="1" height="7"/><rect x="437" y="656" width="1" height="10"/><rect x="438" y="656" width="1" height="7"/><rect x="439" y="656" width="1" height="7"/><rect x="440" y="659" width="1" height="4"/><rect x="441" y="659" width="1" height="4"/><rect x="442" y="659" width="1" height="4"/><rect x="443" y="659" width="1" height="4"/><rect x="444" y="656" width="1" height="7"/><rect x="445" y="656" width="1" height="7"/><rect x="446" y="656" width="1" height="7"/><rect x="447" y="656" width="1" height="7"/><rect x="448" y="659" width="1" height="4"/><rect x="449" y="656" width="1" height="7"/><rect x="450" y="656" width="1" height="7"/><rect x="451" y="656" width="1" height="7"/><rect x="452" y="659" width="1" height="7"/><rect x="453" y="659" width="1" height="4"/><rect x="454" y="656" width="1" height="7"/><rect x="455" y="656" width="1" height="7"/><rect x="456" y="656" width="1" height="10"/><rect x="457" y="659" width="1" height="4"/><rect x="458" y="659" width="1" height="4"/><rect x="459" y="659" width="1" height="4"/><rect x="460" y="656" width="1" height="7"/><rect x="461" y="656" width="1" height="7"/><rect x="462" y="656" width="1" height="7"/><rect x="463" y="659" width="1" height="4"/><rect x="464" y="659" width="1" height="4"/><rect x="465" y="656" width="1" height="7"/><rect x="466" y="659" width="1" height="4"/><rect x="467" y="656" width="1" height="7"/><rect x="468" y="659" width="1" height="4"/><rect x="469" y="659" width="1" height="4"/><rect x="470" y="656" width="1" height="7"/><rect x="471" y="659" width="1" height="4"/><rect x="472" y="656" width="1" height="7"/><rect x="473" y="656" width="1" height="7"/><rect x="474" y="659" width="1" height="4"/><rect x="475" y="659" width="1" height="7"/><rect x="476" y="656" width="1" height="7"/><rect x="477" y="656" width="1" height="7"/><rect x="478" y="656" width="1" height="7"/><rect x="479" y="659" width="1" height="4"/><rect x="480" y="656" width="1" height="7"/><rect x="481" y="656" width="1" height="7"/><rect x="482" y="656" width="1" height="7"/><rect x="483" y="659" width="1" height="4"/><rect x="484" y="659" width="1" height="4"/><rect x="485" y="659" width="1" height="4"/><rect x="486" y="656" width="1" height="10"/><rect x="487" y="656" width="1" height="7"/><rect x="488" y="659" width="1" height="4"/><rect x="489" y="656" width="1" height="7"/><rect x="490" y="656" width="1" height="10"/><rect x="491" y="659" width="1" height="4"/><rect x="492" y="659" width="1" height="4"/><rect x="493" y="659" width="1" height="4"/><rect x="494" y="659" width="1" height="4"/><rect x="495" y="656" width="1" height="7"/><rect x="496" y="656" width="1" height="7"/><rect x="497" y="656" width="1" height="10"/><rect x="498" y="659" width="1" height="4"/><rect x="499" y="659" width="1" height="4"/><rect x="500" y="659" width="1" height="7"/><rect x="501" y="659" width="1" height="4"/><rect x="502" y="659" width="1" height="4"/><rect x="503" y="659" width="1" height="4"/><rect x="504" y="656" width="1" height="7"/><rect x="505" y="656" width="1" height="7"/><rect x="506" y="656" width="1" height="7"/><rect x="507" y="659" width="1" height="4"/><rect x="508" y="656" width="1" height="7"/><rect x="509" y="656" width="1" height="7"/><rect x="510" y="656" width="1" height="7"/><rect x="511" y="659" width="1" height="4"/><rect x="512" y="656" width="1" height="7"/><rect x="513" y="656" width="1" height="7"/><rect x="514" y="656" width="1" height="7"/><rect x="515" y="659" width="1" height="4"/><rect x="516" y="656" width="1" height="7"/><rect x="517" y="643" width="1" height="13"/><rect x="518" y="643" width="1" height="7"/><rect x="519" y="630" width="1" height="14"/><rect x="520" y="605" width="1" height="26"/><rect x="521" y="598" width="1" height="8"/><rect x="522" y="594" width="1" height="5"/><rect x="523" y="594" width="1" height="4"/><rect x="524" y="590" width="1" height="5"/><rect x="525" y="594" width="1" height="4"/><rect x="526" y="591" width="1" height="7"/><rect x="527" y="591" width="1" height="7"/><rect x="528" y="591" width="1" height="7"/><rect x="529" y="591" width="1" height="7"/><rect x="530" y="594" width="1" height="4"/><rect x="531" y="594" width="1" height="7"/><rect x="532" y="591" width="1" height="10"/><rect x="533" y="591" width="1" height="10"/><rect x="534" y="591" width="1" height="7"/><rect x="535" y="594" width="1" height="7"/><rect x="536" y="594" width="1" height="7"/><rect x="537" y="594" width="1" height="7"/><rect x="538" y="591" width="1" height="7"/><rect x="539" y="591" width="1" height="7"/><rect x="540" y="591" width="1" height="7"/><rect x="541" y="591" width="1" height="7"/><rect x="542" y="594" width="1" height="4"/><rect x="543" y="591" width="1" height="7"/><rect x="544" y="591" width="1" height="7"/><rect x="545" y="591" width="1" height="7"/><rect x="546" y="591" width="1" height="7"/><rect x="547" y="594" width="1" height="4"/><rect x="548" y="594" width="1" height="4"/><rect x="549" y="591" width="1" height="7"/><rect x="550" y="591" width="1" height="7"/><rect x="551" y="591" width="1" height="7"/><rect x="552" y="594" width="1" height="4"/><rect x="553" y="594" width="1" height="4"/><rect x="554" y="594" width="1" height="4"/><rect x="555" y="594" width="1" height="4"/><rect x="556" y="594" width="1" height="4"/><rect x="557" y="591" width="1" height="7"/><rect x="558" y="591" width="1" height="7"/><rect x="559" y="591" width="1" height="7"/><rect x="560" y="591" width="1" height="7"/><rect x="561" y="594" width="1" height="4"/><rect x="562" y="594" width="1" height="4"/><rect x="563" y="594" width="1" height="4"/><rect x="564" y="594" width="1" height="4"/><rect x="565" y="594" width="1" height="4"/><rect x="566" y="594" width="1" height="4"/><rect x="567" y="594" width="1" height="4"/><rect x="568" y="591" width="1" height="7"/><rect x="569" y="591" width="1" height="7"/><rect x="570" y="594" width="1" height="4"/><rect x="571" y="591" width="1" height="7"/><rect x="572" y="591" width="1" height="7"/><rect x="573" y="591" width="1" height="7"/><rect x="574" y="594" width="1" height="4"/><rect x="575" y="591" width="1" height="7"/><rect x="576" y="591" width="1" height="7"/><rect x="577" y="594" width="1" height="4"/><rect x="578" y="594" width="1" height="4"/><rect x="579" y="591" width="1" height="7"/><rect x="580" y="594" width="1" height="4"/><rect x="581" y="591" width="1" height="7"/><rect x="582" y="591" width="1" height="7"/><rect x="583" y="591" width="1" height="7"/><rect x="584" y="591" width="1" height="7"/><rect x="585" y="594" width="1" height="4"/><rect x="586" y="594" width="1" height="4"/><rect x="587" y="594" width="1" height="4"/><rect x="588" y="594" width="1" height="7"/><rect x="589" y="591" width="1" height="10"/><rect x="590" y="591" width="1" height="7"/><rect x="591" y="591" width="1" height="7"/><rect x="592" y="591" width="1" height="7"/><rect x="593" y="594" width="1" height="4"/><rect x="594" y="591" width="1" height="7"/><rect x="595" y="591" width="1" height="7"/><rect x="596" y="591" width="1" height="7"/><rect x="597" y="591" width="1" height="7"/><rect x="598" y="594" width="1" height="4"/><rect x="599" y="591" width="1" height="7"/><rect x="600" y="591" width="1" height="7"/><rect x="601" y="594" width="1" height="4"/><rect x="602" y="594" width="1" height="4"/><rect x="603" y="594" width="1" height="4"/><rect x="604" y="591" width="1" height="7"/><rect x="605" y="591" width="1" height="7"/><rect x="606" y="594" width="1" height="7"/><rect x="607" y="591" width="1" height="7"/><rect x="608" y="591" width="1" height="10"/><rect x="609" y="591" width="1" height="10"/><rect x="610" y="591" width="1" height="7"/><rect x="611" y="594" width="1" height="4"/><rect x="612" y="591" width="1" height="10"/><rect x="613" y="594" width="1" height="7"/><rect x="614" y="594" width="1" height="7"/><rect x="615" y="591" width="1" height="7"/><rect x="616" y="591" width="1" height="7"/><rect x="617" y="594" width="1" height="4"/><rect x="618" y="594" width="1" height="4"/><rect x="619" y="594" width="1" height="4"/><rect x="620" y="591" width="1" height="7"/><rect x="621" y="591" width="1" height="7"/><rect x="622" y="594" width="1" height="4"/><rect x="623" y="594" width="1" height="4"/><rect x="624" y="594" width="1" height="4"/><rect x="625" y="594" width="1" height="4"/><rect x="626" y="594" width="1" height="4"/><rect x="627" y="594" width="1" height="4"/><rect x="628" y="594" width="1" height="4"/><rect x="629" y="594" width="1" height="4"/><rect x="630" y="591" width="1" height="7"/><rect x="631" y="591" width="1" height="7"/><rect x="632" y="594" width="1" height="4"/><rect x="633" y="594" width="1" height="4"/><rect x="634" y="591" width="1" height="7"/><rect x="635" y="591" width="1" height="7"/><rect x="636" y="591" width="1" height="7"/><rect x="637" y="594" width="1" height="4"/><rect x="638" y="591" width="1" height="7"/><rect x="639" y="594" width="1" height="4"/><rect x="640" y="591" width="1" height="7"/><rect x="641" y="591" width="1" height="7"/><rect x="642" y="591" width="1" height="7"/><rect x="643" y="594" width="1" height="4"/><rect x="644" y="591" width="1" height="7"/><rect x="645" y="594" width="1" height="4"/><rect x="646" y="591" width="1" height="7"/><rect x="647" y="591" width="1" height="7"/><rect x="648" y="591" width="1" height="7"/><rect x="649" y="594" width="1" height="4"/><rect x="650" y="591" width="1" height="7"/><rect x="651" y="594" width="1" height="4"/><rect x="652" y="594" width="1" height="4"/><rect x="653" y="594" width="1" height="4"/><rect x="654" y="594" width="1" height="4"/><rect x="655" y="594" width="1" height="4"/><rect x="656" y="591" width="1" height="7"/><rect x="657" y="591" width="1" height="7"/><rect x="658" y="594" width="1" height="4"/><rect x="659" y="594" width="1" height="4"/><rect x="660" y="591" width="1" height="7"/><rect x="661" y="591" width="1" height="7"/><rect x="662" y="591" width="1" height="7"/><rect x="663" y="591" width="1" height="7"/><rect x="664" y="594" width="1" height="4"/><rect x="665" y="594" width="1" height="4"/><rect x="666" y="591" width="1" height="7"/><rect x="667" y="591" width="1" height="7"/><rect x="668" y="594" width="1" height="4"/><rect x="669" y="591" width="1" height="7"/><rect x="670" y="594" width="1" height="4"/><rect x="671" y="594" width="1" height="4"/><rect x="672" y="591" width="1" height="7"/><rect x="673" y="591" width="1" height="7"/><rect x="674" y="591" width="1" height="7"/><rect x="675" y="594" width="1" height="4"/><rect x="676" y="594" width="1" height="4"/><rect x="677" y="594" width="1" height="4"/><rect x="678" y="594" width="1" height="4"/><rect x="679" y="594" width="1" height="4"/><rect x="680" y="594" width="1" height="4"/><rect x="681" y="594" width="1" height="4"/><rect x="682" y="594" width="1" height="4"/><rect x="683" y="594" width="1" height="4"/><rect x="684" y="594" width="1" height="4"/><rect x="685" y="594" width="1" height="4"/><rect x="686" y="591" width="1" height="7"/><rect x="687" y="594" width="1" height="4"/><rect x="688" y="594" width="1" height="4"/><rect x="689" y="594" width="1" height="4"/><rect x="690" y="594" width="1" height="4"/><rect x="691" y="591" width="1" height="7"/><rect x="692" y="591" width="1" height="7"/><rect x="693" y="591" width="1" height="7"/><rect x="694" y="594" width="1" height="4"/><rect x="695" y="594" width="1" height="4"/><rect x="696" y="594" width="1" height="4"/><rect x="697" y="591" width="1" height="7"/><rect x="698" y="594" width="1" height="4"/><rect x="699" y="591" width="1" height="7"/><rect x="700" y="594" width="1" height="7"/><rect x="701" y="594" width="1" height="4"/><rect x="702" y="591" width="1" height="7"/><rect x="703" y="591" width="1" height="7"/><rect x="704" y="591" width="1" height="7"/><rect x="705" y="591" width="1" height="7"/><rect x="706" y="594" width="1" height="4"/><rect x="707" y="594" width="1" height="4"/><rect x="708" y="591" width="1" height="7"/><rect x="709" y="594" width="1" height="4"/><rect x="710" y="594" width="1" height="4"/><rect x="711" y="594" width="1" height="4"/><rect x="712" y="594" width="1" height="4"/><rect x="713" y="594" width="1" height="4"/><rect x="714" y="594" width="1" height="4"/><rect x="715" y="591" width="1" height="7"/><rect x="716" y="594" width="1" height="4"/><rect x="717" y="591" width="1" height="7"/><rect x="718" y="591" width="1" height="7"/><rect x="719" y="594" width="1" height="4"/><rect x="720" y="594" width="1" height="4"/><rect x="721" y="594" width="1" height="4"/><rect x="722" y="594" width="1" height="4"/><rect x="723" y="591" width="1" height="7"/><rect x="724" y="591" width="1" height="10"/><rect x="725" y="594" width="1" height="4"/><rect x="726" y="594" width="1" height="4"/><rect x="727" y="594" width="1" height="4"/><rect x="728" y="594" width="1" height="4"/><rect x="729" y="594" width="1" height="4"/><rect x="730" y="594" width="1" height="4"/><rect x="731" y="594" width="1" height="4"/><rect x="732" y="594" width="1" height="4"/><rect x="733" y="594" width="1" height="4"/><rect x="734" y="594" width="1" height="4"/><rect x="735" y="594" width="1" height="4"/><rect x="736" y="591" width="1" height="7"/><rect x="737" y="591" width="1" height="7"/><rect x="738" y="594" width="1" height="7"/><rect x="739" y="591" width="1" height="10"/><rect x="740" y="591" width="1" height="7"/><rect x="741" y="594" width="1" height="4"/><rect x="742" y="594" width="1" height="4"/><rect x="743" y="594" width="1" height="4"/><rect x="744" y="594" width="1" height="4"/><rect x="745" y="594" width="1" height="4"/><rect x="746" y="594" width="1" height="4"/><rect x="747" y="594" width="1" height="4"/><rect x="748" y="594" width="1" height="4"/><rect x="749" y="594" width="1" height="4"/><rect x="750" y="591" width="1" height="7"/><rect x="751" y="591" width="1" height="7"/><rect x="752" y="591" width="1" height="7"/><rect x="753" y="594" width="1" height="4"/><rect x="754" y="594" width="1" height="4"/><rect x="755" y="594" width="1" height="4"/><rect x="756" y="594" width="1" height="4"/><rect x="757" y="594" width="1" height="4"/><rect x="758" y="594" width="1" height="4"/><rect x="759" y="591" width="1" height="7"/><rect x="760" y="591" width="1" height="7"/><rect x="761" y="594" width="1" height="4"/><rect x="762" y="591" width="1" height="7"/><rect x="763" y="594" width="1" height="4"/><rect x="764" y="591" width="1" height="7"/><rect x="765" y="594" width="1" height="4"/><rect x="766" y="594" width="1" height="4"/><rect x="767" y="591" width="1" height="7"/><rect x="768" y="591" width="1" height="7"/><rect x="769" y="591" width="1" height="7"/><rect x="770" y="591" width="1" height="7"/><rect x="771" y="594" width="1" height="4"/><rect x="772" y="591" width="1" height="7"/><rect x="773" y="591" width="1" height="7"/><rect x="774" y="591" width="1" height="7"/><rect x="775" y="591" width="1" height="7"/><rect x="776" y="594" width="1" height="4"/><rect x="777" y="594" width="1" height="4"/><rect x="778" y="594" width="1" height="4"/><rect x="779" y="594" width="1" height="4"/><rect x="780" y="591" width="1" height="7"/><rect x="781" y="591" width="1" height="7"/><rect x="782" y="594" width="1" height="4"/><rect x="783" y="591" width="1" height="7"/><rect x="784" y="594" width="1" height="4"/><rect x="785" y="591" width="1" height="7"/><rect x="786" y="594" width="1" height="4"/><rect x="787" y="591" width="1" height="10"/><rect x="788" y="594" width="1" height="7"/><rect x="789" y="594" width="1" height="7"/><rect x="790" y="594" width="1" height="4"/><rect x="791" y="591" width="1" height="7"/><rect x="792" y="594" width="1" height="4"/><rect x="793" y="594" width="1" height="7"/><rect x="794" y="594" width="1" height="7"/><rect x="795" y="594" width="1" height="7"/><rect x="796" y="594" width="1" height="4"/><rect x="797" y="594" width="1" height="4"/><rect x="798" y="594" width="1" height="4"/><rect x="799" y="594" width="1" height="4"/><rect x="800" y="594" width="1" height="4"/><rect x="801" y="594" width="1" height="4"/><rect x="802" y="594" width="1" height="7"/><rect x="803" y="591" width="1" height="10"/><rect x="804" y="591" width="1" height="10"/><rect x="805" y="591" width="1" height="7"/><rect x="806" y="591" width="1" height="7"/><rect x="807" y="594" width="1" height="4"/><rect x="808" y="591" width="1" height="7"/><rect x="809" y="591" width="1" height="7"/><rect x="810" y="591" width="1" height="7"/><rect x="811" y="591" width="1" height="10"/><rect x="812" y="594" width="1" height="7"/><rect x="813" y="594" width="1" height="4"/><rect x="814" y="591" width="1" height="7"/><rect x="815" y="594" width="1" height="4"/><rect x="816" y="591" width="1" height="7"/><rect x="817" y="594" width="1" height="4"/><rect x="818" y="594" width="1" height="4"/><rect x="819" y="591" width="1" height="7"/><rect x="820" y="591" width="1" height="7"/><rect x="821" y="591" width="1" height="7"/><rect x="822" y="594" width="1" height="4"/><rect x="823" y="591" width="1" height="7"/><rect x="824" y="594" width="1" height="4"/><rect x="825" y="591" width="1" height="7"/><rect x="826" y="591" width="1" height="7"/><rect x="827" y="591" width="1" height="7"/><rect x="828" y="594" width="1" height="4"/><rect x="829" y="591" width="1" height="7"/><rect x="830" y="591" width="1" height="7"/><rect x="831" y="591" width="1" height="7"/><rect x="832" y="594" width="1" height="4"/><rect x="833" y="591" width="1" height="7"/><rect x="834" y="591" width="1" height="7"/><rect x="835" y="594" width="1" height="4"/><rect x="836" y="591" width="1" height="7"/><rect x="837" y="594" width="1" height="4"/><rect x="838" y="594" width="1" height="4"/><rect x="839" y="594" width="1" height="4"/><rect x="840" y="591" width="1" height="7"/><rect x="841" y="594" width="1" height="4"/><rect x="842" y="594" width="1" height="4"/><rect x="843" y="591" width="1" height="7"/><rect x="844" y="594" width="1" height="4"/><rect x="845" y="594" width="1" height="4"/><rect x="846" y="594" width="1" height="4"/><rect x="847" y="591" width="1" height="7"/><rect x="848" y="594" width="1" height="4"/><rect x="849" y="594" width="1" height="4"/><rect x="850" y="594" width="1" height="7"/><rect x="851" y="594" width="1" height="7"/><rect x="852" y="594" width="1" height="7"/><rect x="853" y="594" width="1" height="4"/><rect x="854" y="594" width="1" height="7"/><rect x="855" y="594" width="1" height="7"/><rect x="856" y="594" width="1" height="7"/><rect x="857" y="594" width="1" height="4"/><rect x="858" y="594" width="1" height="4"/><rect x="859" y="591" width="1" height="7"/><rect x="860" y="591" width="1" height="7"/><rect x="861" y="591" width="1" height="7"/><rect x="862" y="591" width="1" height="7"/><rect x="863" y="594" width="1" height="4"/><rect x="864" y="594" width="1" height="4"/><rect x="865" y="594" width="1" height="7"/><rect x="866" y="591" width="1" height="10"/><rect x="867" y="594" width="1" height="7"/><rect x="868" y="591" width="1" height="7"/><rect x="869" y="591" width="1" height="10"/><rect x="870" y="594" width="1" height="4"/><rect x="871" y="594" width="1" height="4"/><rect x="872" y="594" width="1" height="4"/><rect x="873" y="594" width="1" height="4"/><rect x="874" y="594" width="1" height="4"/><rect x="875" y="594" width="1" height="4"/><rect x="876" y="594" width="1" height="4"/><rect x="877" y="591" width="1" height="7"/><rect x="878" y="591" width="1" height="7"/><rect x="879" y="591" width="1" height="7"/><rect x="880" y="591" width="1" height="7"/><rect x="881" y="594" width="1" height="4"/><rect x="882" y="594" width="1" height="4"/><rect x="883" y="591" width="1" height="7"/><rect x="884" y="594" width="1" height="4"/><rect x="885" y="591" width="1" height="7"/><rect x="886" y="591" width="1" height="7"/><rect x="887" y="594" width="1" height="7"/><rect x="888" y="594" width="1" height="4"/><rect x="889" y="594" width="1" height="4"/><rect x="890" y="594" width="1" height="4"/><rect x="891" y="594" width="1" height="4"/><rect x="892" y="594" width="1" height="4"/><rect x="893" y="594" width="1" height="4"/><rect x="894" y="594" width="1" height="4"/><rect x="895" y="591" width="1" height="7"/><rect x="896" y="594" width="1" height="7"/><rect x="897" y="594" width="1" height="4"/><rect x="898" y="591" width="1" height="7"/><rect x="899" y="591" width="1" height="7"/><rect x="900" y="591" width="1" height="7"/><rect x="901" y="591" width="1" height="7"/><rect x="902" y="594" width="1" height="4"/><rect x="903" y="591" width="1" height="7"/><rect x="904" y="591" width="1" height="7"/><rect x="905" y="594" width="1" height="4"/><rect x="906" y="591" width="1" height="7"/><rect x="907" y="591" width="1" height="7"/><rect x="908" y="594" width="1" height="4"/><rect x="909" y="591" width="1" height="7"/><rect x="910" y="594" width="1" height="4"/><rect x="911" y="594" width="1" height="4"/><rect x="912" y="594" width="1" height="4"/><rect x="913" y="594" width="1" height="4"/><rect x="914" y="591" width="1" height="7"/><rect x="915" y="591" width="1" height="7"/><rect x="916" y="591" width="1" height="7"/><rect x="917" y="594" width="1" height="4"/><rect x="918" y="591" width="1" height="7"/><rect x="919" y="591" width="1" height="7"/><rect x="920" y="594" width="1" height="4"/><rect x="921" y="594" width="1" height="4"/><rect x="922" y="594" width="1" height="4"/><rect x="923" y="594" width="1" height="4"/><rect x="924" y="594" width="1" height="4"/><rect x="925" y="594" width="1" height="4"/><rect x="926" y="594" width="1" height="4"/><rect x="927" y="594" width="1" height="4"/><rect x="928" y="594" width="1" height="4"/><rect x="929" y="594" width="1" height="4"/><rect x="930" y="594" width="1" height="4"/><rect x="931" y="591" width="1" height="7"/><rect x="932" y="594" width="1" height="4"/><rect x="933" y="594" width="1" height="4"/><rect x="934" y="594" width="1" height="4"/><rect x="935" y="594" width="1" height="4"/><rect x="936" y="594" width="1" height="4"/><rect x="937" y="591" width="1" height="7"/><rect x="938" y="594" width="1" height="4"/><rect x="939" y="591" width="1" height="7"/><rect x="940" y="594" width="1" height="4"/><rect x="941" y="591" width="1" height="7"/><rect x="942" y="594" width="1" height="4"/><rect x="943" y="591" width="1" height="7"/><rect x="944" y="591" width="1" height="7"/><rect x="945" y="591" width="1" height="7"/><rect x="946" y="594" width="1" height="4"/><rect x="947" y="594" width="1" height="4"/><rect x="948" y="591" width="1" height="7"/><rect x="949" y="594" width="1" height="4"/><rect x="950" y="594" width="1" height="4"/><rect x="951" y="594" width="1" height="4"/><rect x="952" y="594" width="1" height="4"/><rect x="953" y="594" width="1" height="4"/><rect x="954" y="594" width="1" height="4"/><rect x="955" y="594" width="1" height="4"/><rect x="956" y="591" width="1" height="7"/><rect x="957" y="591" width="1" height="7"/><rect x="958" y="594" width="1" height="4"/><rect x="959" y="594" width="1" height="4"/><rect x="960" y="591" width="1" height="10"/><rect x="961" y="591" width="1" height="10"/><rect x="962" y="591" width="1" height="7"/><rect x="963" y="591" width="1" height="7"/><rect x="964" y="594" width="1" height="4"/><rect x="965" y="591" width="1" height="7"/><rect x="966" y="591" width="1" height="7"/><rect x="967" y="591" width="1" height="7"/><rect x="968" y="594" width="1" height="4"/><rect x="969" y="591" width="1" height="7"/><rect x="970" y="591" width="1" height="7"/><rect x="971" y="594" width="1" height="4"/><rect x="972" y="591" width="1" height="7"/><rect x="973" y="594" width="1" height="4"/><rect x="974" y="594" width="1" height="7"/><rect x="975" y="594" width="1" height="7"/><rect x="976" y="594" width="1" height="4"/><rect x="977" y="594" width="1" height="4"/><rect x="978" y="594" width="1" height="4"/><rect x="979" y="594" width="1" height="4"/><rect x="980" y="594" width="1" height="4"/><rect x="981" y="594" width="1" height="4"/><rect x="982" y="594" width="1" height="4"/><rect x="983" y="594" width="1" height="4"/><rect x="984" y="594" width="1" height="4"/><rect x="985" y="591" width="1" height="7"/><rect x="986" y="594" width="1" height="4"/><rect x="987" y="594" width="1" height="4"/><rect x="988" y="591" width="1" height="7"/><rect x="989" y="591" width="1" height="7"/><rect x="990" y="591" width="1" height="7"/><rect x="991" y="591" width="1" height="7"/><rect x="992" y="594" width="1" height="4"/><rect x="993" y="591" width="1" height="7"/><rect x="994" y="591" width="1" height="7"/><rect x="995" y="594" width="1" height="4"/><rect x="996" y="594" width="1" height="4"/><rect x="997" y="591" width="1" height="7"/><rect x="998" y="591" width="1" height="7"/><rect x="999" y="591" width="1" height="7"/><rect x="1000" y="591" width="1" height="7"/><rect x="1001" y="594" width="1" height="4"/><rect x="1002" y="594" width="1" height="4"/><rect x="1003" y="594" width="1" height="4"/><rect x="1004" y="594" width="1" height="4"/><rect x="1005" y="594" width="1" height="4"/><rect x="1006" y="594" width="1" height="4"/><rect x="1007" y="594" width="1" height="4"/><rect x="1008" y="591" width="1" height="7"/><rect x="1009" y="591" width="1" height="7"/><rect x="1010" y="591" width="1" height="7"/><rect x="1011" y="591" width="1" height="7"/><rect x="1012" y="594" width="1" height="4"/><rect x="1013" y="591" width="1" height="7"/><rect x="1014" y="594" width="1" height="4"/><rect x="1015" y="594" width="1" height="4"/><rect x="1016" y="594" width="1" height="4"/><rect x="1017" y="594" width="1" height="4"/><rect x="1018" y="594" width="1" height="4"/><rect x="1019" y="594" width="1" height="4"/><rect x="1020" y="594" width="1" height="4"/></g><g fill="#f0f0f0" shape-rendering="crispEdges"><rect x="520" y="264" width="1" height="1"/><rect x="524" y="563" width="1" height="1"/><rect x="921" y="199" width="1" height="1"/><rect x="121" y="524" width="1" height="1"/><rect x="421" y="407" width="1" height="1"/><rect x="521" y="494" width="1" height="1"/><rect x="501" y="665" width="1" height="1"/><rect x="541" y="472" width="1" height="1"/><rect x="301" y="82" width="1" height="1"/><rect x="961" y="537" width="1" height="1"/><rect x="89" y="342" width="1" height="1"/><rect x="721" y="30" width="1" height="1"/><rect x="881" y="19" width="1" height="1"/><rect x="221" y="238" width="1" height="1"/><rect x="521" y="350" width="1" height="1"/><rect x="521" y="121" width="1" height="1"/><rect x="639" y="342" width="1" height="1"/><rect x="21" y="329" width="1" height="1"/><rect x="773" y="342" width="1" height="1"/><rect x="81" y="343" width="1" height="1"/><rect x="26" y="407" width="1" height="1"/><rect x="521" y="615" width="1" height="1"/><rect x="293" y="342" width="1" height="1"/><rect x="521" y="386" width="1" height="1"/><rect x="821" y="498" width="1" height="1"/><rect x="31" y="342" width="1" height="1"/><rect x="427" y="342" width="1" height="1"/><rect x="1020" y="69" width="1" height="1"/><rect x="321" y="446" width="1" height="1"/><rect x="381" y="82" width="1" height="1"/><rect x="521" y="242" width="1" height="1"/><rect x="621" y="329" width="1" height="1"/><rect x="1020" y="563" width="1" height="1"/><rect x="921" y="212" width="1" height="1"/><rect x="121" y="537" width="1" height="1"/><rect x="525" y="212" width="1" height="1"/><rect x="421" y="420" width="1" height="1"/><rect x="41" y="19" width="1" height="1"/><rect x="521" y="98" width="1" height="1"/><rect x="719" y="342" width="1" height="1"/><rect x="457" y="342" width="1" height="1"/><rect x="721" y="43" width="1" height="1"/><rect x="61" y="342" width="1" height="1"/><rect x="591" y="342" width="1" height="1"/><rect x="195" y="342" width="1" height="1"/><rect x="221" y="251" width="1" height="1"/><rect x="601" y="472" width="1" height="1"/><rect x="321" y="338" width="1" height="1"/><rect x="541" y="341" width="1" height="1"/><rect x="721" y="537" width="1" height="1"/><rect x="521" y="628" width="1" height="1"/><rect x="524" y="108" width="1" height="1"/><rect x="121" y="20" width="1" height="1"/><rect x="81" y="212" width="1" height="1"/><rect x="321" y="459" width="1" height="1"/><rect x="521" y="484" width="1" height="1"/><rect x="487" y="342" width="1" height="1"/><rect x="225" y="342" width="1" height="1"/><rect x="841" y="345" width="1" height="1"/><rect x="1020" y="576" width="1" height="1"/><rect x="501" y="17" width="1" height="1"/><rect x="421" y="662" width="1" height="1"/><rect x="518" y="186" width="1" height="1"/><rect x="721" y="20" width="1" height="1"/><rect x="641" y="665" width="1" height="1"/><rect x="521" y="340" width="1" height="1"/><rect x="561" y="147" width="1" height="1"/><rect x="741" y="343" width="1" height="1"/><rect x="301" y="602" width="1" height="1"/><rect x="825" y="342" width="1" height="1"/><rect x="721" y="550" width="1" height="1"/><rect x="521" y="196" width="1" height="1"/><rect x="255" y="342" width="1" height="1"/><rect x="241" y="407" width="1" height="1"/><rect x="389" y="342" width="1" height="1"/><rect x="524" y="121" width="1" height="1"/><rect x="517" y="82" width="1" height="1"/><rect x="601" y="341" width="1" height="1"/><rect x="781" y="537" width="1" height="1"/><rect x="521" y="232" width="1" height="1"/><rect x="43" y="342" width="1" height="1"/><rect x="821" y="344" width="1" height="1"/><rect x="901" y="602" width="1" height="1"/><rect x="524" y="615" width="1" height="1"/><rect x="701" y="19" width="1" height="1"/><rect x="921" y="22" width="1" height="1"/><rect x="521" y="88" width="1" height="1"/><rect x="855" y="342" width="1" height="1"/><rect x="593" y="342" width="1" height="1"/><rect x="518" y="199" width="1" height="1"/><rect x="523" y="277" width="1" height="1"/><rect x="1018" y="485" width="1" height="1"/><rect x="261" y="277" width="1" height="1"/><rect x="521" y="582" width="1" height="1"/><rect x="23" y="485" width="1" height="1"/><rect x="801" y="407" width="1" height="1"/><rect x="821" y="56" width="1" height="1"/><rect x="681" y="82" width="1" height="1"/><rect x="73" y="342" width="1" height="1"/><rect x="521" y="618" width="1" height="1"/><rect x="741" y="212" width="1" height="1"/><rect x="861" y="277" width="1" height="1"/><rect x="885" y="342" width="1" height="1"/><rect x="1019" y="342" width="1" height="1"/><rect x="521" y="474" width="1" height="1"/><rect x="121" y="95" width="1" height="1"/><rect x="673" y="342" width="1" height="1"/><rect x="277" y="342" width="1" height="1"/><rect x="522" y="30" width="1" height="1"/><rect x="524" y="628" width="1" height="1"/><rect x="411" y="342" width="1" height="1"/><rect x="361" y="341" width="1" height="1"/><rect x="521" y="330" width="1" height="1"/><rect x="961" y="602" width="1" height="1"/><rect x="61" y="345" width="1" height="1"/><rect x="1018" y="498" width="1" height="1"/><rect x="521" y="186" width="1" height="1"/><rect x="821" y="69" width="1" height="1"/><rect x="21" y="394" width="1" height="1"/><rect x="561" y="667" width="1" height="1"/><rect x="26" y="472" width="1" height="1"/><rect x="703" y="342" width="1" height="1"/><rect x="307" y="342" width="1" height="1"/><rect x="441" y="342" width="1" height="1"/><rect x="45" y="342" width="1" height="1"/><rect x="821" y="563" width="1" height="1"/><rect x="661" y="345" width="1" height="1"/><rect x="981" y="472" width="1" height="1"/><rect x="521" y="42" width="1" height="1"/><rect x="461" y="665" width="1" height="1"/><rect x="1020" y="134" width="1" height="1"/><rect x="121" y="108" width="1" height="1"/><rect x="381" y="147" width="1" height="1"/><rect x="621" y="394" width="1" height="1"/><rect x="521" y="78" width="1" height="1"/><rect x="522" y="43" width="1" height="1"/><rect x="515" y="147" width="1" height="1"/><rect x="921" y="277" width="1" height="1"/><rect x="121" y="602" width="1" height="1"/><rect x="517" y="602" width="1" height="1"/><rect x="421" y="485" width="1" height="1"/><rect x="521" y="572" width="1" height="1"/><rect x="471" y="342" width="1" height="1"/><rect x="75" y="342" width="1" height="1"/><rect x="721" y="108" width="1" height="1"/><rect x="209" y="342" width="1" height="1"/><rect x="221" y="316" width="1" height="1"/><rect x="521" y="428" width="1" height="1"/><rect x="521" y="199" width="1" height="1"/><rect x="141" y="472" width="1" height="1"/><rect x="121" y="30" width="1" height="1"/><rect x="521" y="464" width="1" height="1"/><rect x="821" y="576" width="1" height="1"/><rect x="321" y="30" width="1" height="1"/><rect x="81" y="277" width="1" height="1"/><rect x="321" y="524" width="1" height="1"/><rect x="520" y="355" width="1" height="1"/><rect x="521" y="320" width="1" height="1"/><rect x="621" y="407" width="1" height="1"/><rect x="1020" y="641" width="1" height="1"/><rect x="921" y="290" width="1" height="1"/><rect x="121" y="615" width="1" height="1"/><rect x="501" y="82" width="1" height="1"/><rect x="23" y="43" width="1" height="1"/><rect x="421" y="498" width="1" height="1"/><rect x="27" y="342" width="1" height="1"/><rect x="522" y="550" width="1" height="1"/><rect x="561" y="212" width="1" height="1"/><rect x="521" y="176" width="1" height="1"/><rect x="881" y="339" width="1" height="1"/><rect x="721" y="121" width="1" height="1"/><rect x="301" y="667" width="1" height="1"/><rect x="839" y="342" width="1" height="1"/><rect x="221" y="329" width="1" height="1"/><rect x="981" y="17" width="1" height="1"/><rect x="721" y="615" width="1" height="1"/><rect x="521" y="32" width="1" height="1"/><rect x="231" y="342" width="1" height="1"/><rect x="524" y="186" width="1" height="1"/><rect x="461" y="17" width="1" height="1"/><rect x="201" y="472" width="1" height="1"/><rect x="321" y="537" width="1" height="1"/><rect x="521" y="562" width="1" height="1"/><rect x="869" y="342" width="1" height="1"/><rect x="1018" y="56" width="1" height="1"/><rect x="1020" y="654" width="1" height="1"/><rect x="23" y="56" width="1" height="1"/><rect x="518" y="264" width="1" height="1"/><rect x="381" y="667" width="1" height="1"/><rect x="523" y="342" width="1" height="1"/><rect x="41" y="339" width="1" height="1"/><rect x="657" y="342" width="1" height="1"/><rect x="261" y="342" width="1" height="1"/><rect x="521" y="418" width="1" height="1"/><rect x="481" y="345" width="1" height="1"/><rect x="23" y="550" width="1" height="1"/><rect x="801" y="472" width="1" height="1"/><rect x="681" y="147" width="1" height="1"/><rect x="721" y="628" width="1" height="1"/><rect x="521" y="274" width="1" height="1"/><rect x="321" y="20" width="1" height="1"/><rect x="741" y="277" width="1" height="1"/><rect x="121" y="340" width="1" height="1"/><rect x="524" y="199" width="1" height="1"/><rect x="161" y="147" width="1" height="1"/><rect x="341" y="343" width="1" height="1"/><rect x="1019" y="407" width="1" height="1"/><rect x="521" y="310" width="1" height="1"/><rect x="24" y="407" width="1" height="1"/><rect x="949" y="342" width="1" height="1"/><rect x="221" y="18" width="1" height="1"/><rect x="421" y="43" width="1" height="1"/><rect x="687" y="342" width="1" height="1"/><rect x="291" y="342" width="1" height="1"/><rect x="425" y="342" width="1" height="1"/><rect x="29" y="342" width="1" height="1"/><rect x="621" y="662" width="1" height="1"/><rect x="841" y="665" width="1" height="1"/><rect x="1018" y="69" width="1" height="1"/><rect x="521" y="166" width="1" height="1"/><rect x="641" y="82" width="1" height="1"/><rect x="721" y="340" width="1" height="1"/><rect x="761" y="147" width="1" height="1"/><rect x="941" y="343" width="1" height="1"/><rect x="1018" y="563" width="1" height="1"/><rect x="521" y="660" width="1" height="1"/><rect x="421" y="344" width="1" height="1"/><rect x="501" y="602" width="1" height="1"/><rect x="23" y="563" width="1" height="1"/><rect x="1020" y="56" width="1" height="1"/><rect x="301" y="19" width="1" height="1"/><rect x="521" y="22" width="1" height="1"/><rect x="821" y="134" width="1" height="1"/><rect x="717" y="342" width="1" height="1"/><rect x="455" y="342" width="1" height="1"/><rect x="59" y="342" width="1" height="1"/><rect x="441" y="407" width="1" height="1"/><rect x="801" y="341" width="1" height="1"/><rect x="981" y="537" width="1" height="1"/><rect x="1020" y="199" width="1" height="1"/><rect x="521" y="552" width="1" height="1"/><rect x="901" y="19" width="1" height="1"/><rect x="121" y="173" width="1" height="1"/><rect x="821" y="664" width="1" height="1"/><rect x="421" y="56" width="1" height="1"/><rect x="515" y="212" width="1" height="1"/><rect x="701" y="339" width="1" height="1"/><rect x="522" y="108" width="1" height="1"/><rect x="421" y="550" width="1" height="1"/><rect x="341" y="212" width="1" height="1"/><rect x="521" y="408" width="1" height="1"/><rect x="485" y="342" width="1" height="1"/><rect x="1018" y="576" width="1" height="1"/><rect x="139" y="342" width="1" height="1"/><rect x="281" y="17" width="1" height="1"/><rect x="521" y="264" width="1" height="1"/><rect x="821" y="147" width="1" height="1"/><rect x="1001" y="343" width="1" height="1"/><rect x="941" y="212" width="1" height="1"/><rect x="141" y="537" width="1" height="1"/><rect x="821" y="641" width="1" height="1"/><rect x="681" y="667" width="1" height="1"/><rect x="823" y="342" width="1" height="1"/><rect x="321" y="95" width="1" height="1"/><rect x="521" y="120" width="1" height="1"/><rect x="477" y="342" width="1" height="1"/><rect x="121" y="186" width="1" height="1"/><rect x="520" y="420" width="1" height="1"/><rect x="1017" y="472" width="1" height="1"/><rect x="621" y="472" width="1" height="1"/><rect x="521" y="156" width="1" height="1"/><rect x="522" y="121" width="1" height="1"/><rect x="921" y="355" width="1" height="1"/><rect x="421" y="563" width="1" height="1"/><rect x="261" y="345" width="1" height="1"/><rect x="521" y="650" width="1" height="1"/><rect x="522" y="615" width="1" height="1"/><rect x="961" y="19" width="1" height="1"/><rect x="61" y="665" width="1" height="1"/><rect x="101" y="472" width="1" height="1"/><rect x="721" y="186" width="1" height="1"/><rect x="161" y="343" width="1" height="1"/><rect x="221" y="394" width="1" height="1"/><rect x="521" y="506" width="1" height="1"/><rect x="521" y="277" width="1" height="1"/><rect x="903" y="342" width="1" height="1"/><rect x="507" y="342" width="1" height="1"/><rect x="245" y="342" width="1" height="1"/><rect x="21" y="485" width="1" height="1"/><rect x="861" y="345" width="1" height="1"/><rect x="521" y="542" width="1" height="1"/><rect x="661" y="665" width="1" height="1"/><rect x="821" y="654" width="1" height="1"/><rect x="461" y="82" width="1" height="1"/><rect x="321" y="108" width="1" height="1"/><rect x="1001" y="212" width="1" height="1"/><rect x="201" y="537" width="1" height="1"/><rect x="321" y="602" width="1" height="1"/><rect x="521" y="398" width="1" height="1"/><rect x="621" y="485" width="1" height="1"/><rect x="1018" y="121" width="1" height="1"/><rect x="23" y="121" width="1" height="1"/><rect x="518" y="329" width="1" height="1"/><rect x="933" y="342" width="1" height="1"/><rect x="537" y="342" width="1" height="1"/><rect x="671" y="342" width="1" height="1"/><rect x="275" y="342" width="1" height="1"/><rect x="522" y="628" width="1" height="1"/><rect x="521" y="254" width="1" height="1"/><rect x="801" y="537" width="1" height="1"/><rect x="721" y="199" width="1" height="1"/><rect x="221" y="407" width="1" height="1"/><rect x="521" y="110" width="1" height="1"/><rect x="281" y="537" width="1" height="1"/><rect x="875" y="342" width="1" height="1"/><rect x="524" y="264" width="1" height="1"/><rect x="161" y="212" width="1" height="1"/><rect x="963" y="342" width="1" height="1"/><rect x="24" y="472" width="1" height="1"/><rect x="701" y="342" width="1" height="1"/><rect x="305" y="342" width="1" height="1"/><rect x="439" y="342" width="1" height="1"/><rect x="581" y="17" width="1" height="1"/><rect x="321" y="615" width="1" height="1"/><rect x="521" y="640" width="1" height="1"/><rect x="93" y="342" width="1" height="1"/><rect x="101" y="17" width="1" height="1"/><rect x="1018" y="134" width="1" height="1"/><rect x="641" y="147" width="1" height="1"/><rect x="23" y="134" width="1" height="1"/><rect x="761" y="212" width="1" height="1"/><rect x="905" y="342" width="1" height="1"/><rect x="521" y="496" width="1" height="1"/><rect x="501" y="667" width="1" height="1"/><rect x="23" y="628" width="1" height="1"/><rect x="731" y="342" width="1" height="1"/><rect x="521" y="352" width="1" height="1"/><rect x="385" y="342" width="1" height="1"/><rect x="123" y="342" width="1" height="1"/><rect x="981" y="602" width="1" height="1"/><rect x="81" y="345" width="1" height="1"/><rect x="781" y="19" width="1" height="1"/><rect x="401" y="472" width="1" height="1"/><rect x="421" y="121" width="1" height="1"/><rect x="521" y="208" width="1" height="1"/><rect x="935" y="342" width="1" height="1"/><rect x="461" y="602" width="1" height="1"/><rect x="341" y="277" width="1" height="1"/><rect x="521" y="244" width="1" height="1"/><rect x="881" y="407" width="1" height="1"/><rect x="1018" y="641" width="1" height="1"/><rect x="153" y="342" width="1" height="1"/><rect x="481" y="665" width="1" height="1"/><rect x="21" y="43" width="1" height="1"/><rect x="23" y="641" width="1" height="1"/><rect x="281" y="82" width="1" height="1"/><rect x="521" y="100" width="1" height="1"/><rect x="821" y="212" width="1" height="1"/><rect x="941" y="277" width="1" height="1"/><rect x="521" y="594" width="1" height="1"/><rect x="321" y="340" width="1" height="1"/><rect x="541" y="343" width="1" height="1"/><rect x="753" y="342" width="1" height="1"/><rect x="621" y="43" width="1" height="1"/><rect x="887" y="342" width="1" height="1"/><rect x="491" y="342" width="1" height="1"/><rect x="521" y="630" width="1" height="1"/><rect x="121" y="251" width="1" height="1"/><rect x="221" y="338" width="1" height="1"/><rect x="121" y="22" width="1" height="1"/><rect x="520" y="485" width="1" height="1"/><rect x="421" y="134" width="1" height="1"/><rect x="441" y="341" width="1" height="1"/><rect x="1017" y="537" width="1" height="1"/><rect x="522" y="186" width="1" height="1"/><rect x="22" y="537" width="1" height="1"/><rect x="921" y="420" width="1" height="1"/><rect x="841" y="82" width="1" height="1"/><rect x="41" y="407" width="1" height="1"/><rect x="421" y="628" width="1" height="1"/><rect x="521" y="486" width="1" height="1"/><rect x="581" y="537" width="1" height="1"/><rect x="101" y="537" width="1" height="1"/><rect x="501" y="19" width="1" height="1"/><rect x="721" y="251" width="1" height="1"/><rect x="421" y="664" width="1" height="1"/><rect x="1018" y="654" width="1" height="1"/><rect x="721" y="22" width="1" height="1"/><rect x="641" y="667" width="1" height="1"/><rect x="221" y="459" width="1" height="1"/><rect x="783" y="342" width="1" height="1"/><rect x="301" y="339" width="1" height="1"/><rect x="917" y="342" width="1" height="1"/><rect x="521" y="342" width="1" height="1"/><rect x="655" y="342" width="1" height="1"/><rect x="259" y="342" width="1" height="1"/><rect x="741" y="345" width="1" height="1"/><rect x="821" y="225" width="1" height="1"/><rect x="21" y="550" width="1" height="1"/><rect x="401" y="17" width="1" height="1"/><rect x="321" y="173" width="1" height="1"/><rect x="521" y="198" width="1" height="1"/><rect x="621" y="56" width="1" height="1"/><rect x="1001" y="277" width="1" height="1"/><rect x="901" y="339" width="1" height="1"/><rect x="1020" y="290" width="1" height="1"/><rect x="121" y="264" width="1" height="1"/><rect x="520" y="498" width="1" height="1"/><rect x="621" y="550" width="1" height="1"/><rect x="601" y="343" width="1" height="1"/><rect x="522" y="199" width="1" height="1"/><rect x="821" y="346" width="1" height="1"/><rect x="921" y="433" width="1" height="1"/><rect x="527" y="277" width="1" height="1"/><rect x="521" y="54" width="1" height="1"/><rect x="23" y="186" width="1" height="1"/><rect x="947" y="342" width="1" height="1"/><rect x="551" y="342" width="1" height="1"/><rect x="421" y="641" width="1" height="1"/><rect x="685" y="342" width="1" height="1"/><rect x="339" y="342" width="1" height="1"/><rect x="521" y="90" width="1" height="1"/><rect x="77" y="342" width="1" height="1"/><rect x="481" y="17" width="1" height="1"/><rect x="721" y="264" width="1" height="1"/><rect x="221" y="472" width="1" height="1"/><rect x="521" y="584" width="1" height="1"/><rect x="521" y="355" width="1" height="1"/><rect x="21" y="563" width="1" height="1"/><rect x="889" y="342" width="1" height="1"/><rect x="281" y="602" width="1" height="1"/><rect x="161" y="277" width="1" height="1"/><rect x="521" y="440" width="1" height="1"/><rect x="321" y="186" width="1" height="1"/><rect x="701" y="407" width="1" height="1"/><rect x="581" y="82" width="1" height="1"/><rect x="369" y="342" width="1" height="1"/><rect x="107" y="342" width="1" height="1"/><rect x="521" y="476" width="1" height="1"/><rect x="621" y="563" width="1" height="1"/><rect x="1018" y="199" width="1" height="1"/><rect x="23" y="199" width="1" height="1"/><rect x="961" y="339" width="1" height="1"/><rect x="261" y="665" width="1" height="1"/><rect x="61" y="82" width="1" height="1"/><rect x="919" y="342" width="1" height="1"/><rect x="181" y="147" width="1" height="1"/><rect x="361" y="343" width="1" height="1"/><rect x="521" y="332" width="1" height="1"/><rect x="573" y="342" width="1" height="1"/><rect x="707" y="342" width="1" height="1"/><rect x="311" y="342" width="1" height="1"/><rect x="861" y="665" width="1" height="1"/><rect x="137" y="342" width="1" height="1"/><rect x="521" y="188" width="1" height="1"/><rect x="519" y="407" width="1" height="1"/><rect x="661" y="82" width="1" height="1"/><rect x="401" y="537" width="1" height="1"/><rect x="821" y="336" width="1" height="1"/><rect x="521" y="44" width="1" height="1"/><rect x="461" y="667" width="1" height="1"/><rect x="999" y="342" width="1" height="1"/><rect x="603" y="342" width="1" height="1"/><rect x="737" y="342" width="1" height="1"/><rect x="341" y="342" width="1" height="1"/><rect x="881" y="472" width="1" height="1"/><rect x="518" y="420" width="1" height="1"/><rect x="1015" y="472" width="1" height="1"/><rect x="521" y="574" width="1" height="1"/><rect x="21" y="108" width="1" height="1"/><rect x="241" y="147" width="1" height="1"/><rect x="521" y="430" width="1" height="1"/><rect x="361" y="212" width="1" height="1"/><rect x="767" y="342" width="1" height="1"/><rect x="371" y="342" width="1" height="1"/><rect x="520" y="56" width="1" height="1"/><rect x="901" y="342" width="1" height="1"/><rect x="505" y="342" width="1" height="1"/><rect x="524" y="355" width="1" height="1"/><rect x="421" y="199" width="1" height="1"/><rect x="521" y="286" width="1" height="1"/><rect x="22" y="602" width="1" height="1"/><rect x="841" y="147" width="1" height="1"/><rect x="41" y="472" width="1" height="1"/><rect x="581" y="602" width="1" height="1"/><rect x="521" y="322" width="1" height="1"/><rect x="221" y="30" width="1" height="1"/><rect x="101" y="602" width="1" height="1"/><rect x="21" y="121" width="1" height="1"/><rect x="535" y="342" width="1" height="1"/><rect x="521" y="178" width="1" height="1"/><rect x="821" y="290" width="1" height="1"/><rect x="21" y="615" width="1" height="1"/><rect x="881" y="341" width="1" height="1"/><rect x="189" y="342" width="1" height="1"/><rect x="323" y="342" width="1" height="1"/><rect x="981" y="19" width="1" height="1"/><rect x="520" y="69" width="1" height="1"/><rect x="521" y="34" width="1" height="1"/><rect x="81" y="665" width="1" height="1"/><rect x="621" y="121" width="1" height="1"/><rect x="1020" y="355" width="1" height="1"/><rect x="121" y="329" width="1" height="1"/><rect x="520" y="563" width="1" height="1"/><rect x="421" y="212" width="1" height="1"/><rect x="522" y="264" width="1" height="1"/><rect x="461" y="19" width="1" height="1"/><rect x="541" y="277" width="1" height="1"/><rect x="921" y="498" width="1" height="1"/><rect x="527" y="342" width="1" height="1"/><rect x="521" y="564" width="1" height="1"/><rect x="353" y="342" width="1" height="1"/><rect x="221" y="43" width="1" height="1"/><rect x="91" y="342" width="1" height="1"/><rect x="481" y="82" width="1" height="1"/><rect x="721" y="329" width="1" height="1"/><rect x="41" y="341" width="1" height="1"/><rect x="221" y="537" width="1" height="1"/><rect x="26" y="212" width="1" height="1"/><rect x="521" y="420" width="1" height="1"/><rect x="821" y="303" width="1" height="1"/><rect x="21" y="628" width="1" height="1"/><rect x="281" y="667" width="1" height="1"/><rect x="953" y="342" width="1" height="1"/><rect x="557" y="342" width="1" height="1"/><rect x="321" y="251" width="1" height="1"/><rect x="521" y="276" width="1" height="1"/><rect x="621" y="134" width="1" height="1"/><rect x="383" y="342" width="1" height="1"/><rect x="1020" y="368" width="1" height="1"/><rect x="121" y="342" width="1" height="1"/><rect x="341" y="345" width="1" height="1"/><rect x="520" y="576" width="1" height="1"/><rect x="621" y="628" width="1" height="1"/><rect x="221" y="20" width="1" height="1"/><rect x="921" y="511" width="1" height="1"/><rect x="521" y="132" width="1" height="1"/><rect x="23" y="264" width="1" height="1"/><rect x="61" y="147" width="1" height="1"/><rect x="241" y="343" width="1" height="1"/><rect x="181" y="212" width="1" height="1"/><rect x="841" y="667" width="1" height="1"/><rect x="601" y="277" width="1" height="1"/><rect x="983" y="342" width="1" height="1"/><rect x="587" y="342" width="1" height="1"/><rect x="501" y="339" width="1" height="1"/><rect x="521" y="168" width="1" height="1"/><rect x="721" y="342" width="1" height="1"/><rect x="325" y="342" width="1" height="1"/><rect x="941" y="345" width="1" height="1"/><rect x="221" y="550" width="1" height="1"/><rect x="521" y="662" width="1" height="1"/><rect x="741" y="665" width="1" height="1"/><rect x="519" y="472" width="1" height="1"/><rect x="521" y="24" width="1" height="1"/><rect x="661" y="147" width="1" height="1"/><rect x="401" y="602" width="1" height="1"/><rect x="521" y="518" width="1" height="1"/><rect x="321" y="264" width="1" height="1"/><rect x="201" y="19" width="1" height="1"/><rect x="801" y="343" width="1" height="1"/><rect x="1013" y="342" width="1" height="1"/><rect x="751" y="342" width="1" height="1"/><rect x="355" y="342" width="1" height="1"/><rect x="621" y="641" width="1" height="1"/><rect x="521" y="554" width="1" height="1"/><rect x="489" y="342" width="1" height="1"/><rect x="821" y="666" width="1" height="1"/><rect x="701" y="341" width="1" height="1"/><rect x="518" y="485" width="1" height="1"/><rect x="143" y="342" width="1" height="1"/><rect x="921" y="344" width="1" height="1"/><rect x="1015" y="537" width="1" height="1"/><rect x="301" y="407" width="1" height="1"/><rect x="521" y="410" width="1" height="1"/><rect x="481" y="602" width="1" height="1"/><rect x="241" y="212" width="1" height="1"/><rect x="281" y="19" width="1" height="1"/><rect x="361" y="277" width="1" height="1"/><rect x="521" y="266" width="1" height="1"/><rect x="781" y="342" width="1" height="1"/><rect x="1001" y="345" width="1" height="1"/><rect x="901" y="407" width="1" height="1"/><rect x="524" y="420" width="1" height="1"/><rect x="435" y="342" width="1" height="1"/><rect x="173" y="342" width="1" height="1"/><rect x="521" y="122" width="1" height="1"/><rect x="841" y="212" width="1" height="1"/><rect x="581" y="667" width="1" height="1"/><rect x="261" y="82" width="1" height="1"/><rect x="1018" y="290" width="1" height="1"/><rect x="518" y="498" width="1" height="1"/><rect x="521" y="652" width="1" height="1"/><rect x="21" y="186" width="1" height="1"/><rect x="61" y="667" width="1" height="1"/><rect x="203" y="342" width="1" height="1"/><rect x="337" y="342" width="1" height="1"/><rect x="741" y="17" width="1" height="1"/><rect x="861" y="82" width="1" height="1"/><rect x="161" y="345" width="1" height="1"/><rect x="521" y="508" width="1" height="1"/><rect x="520" y="134" width="1" height="1"/><rect x="524" y="433" width="1" height="1"/><rect x="921" y="69" width="1" height="1"/><rect x="661" y="667" width="1" height="1"/><rect x="421" y="277" width="1" height="1"/><rect x="803" y="342" width="1" height="1"/><rect x="521" y="364" width="1" height="1"/><rect x="541" y="342" width="1" height="1"/><rect x="961" y="407" width="1" height="1"/><rect x="761" y="345" width="1" height="1"/><rect x="521" y="400" width="1" height="1"/><rect x="105" y="342" width="1" height="1"/><rect x="221" y="108" width="1" height="1"/><rect x="21" y="199" width="1" height="1"/><rect x="26" y="277" width="1" height="1"/><rect x="521" y="485" width="1" height="1"/><rect x="521" y="256" width="1" height="1"/><rect x="441" y="147" width="1" height="1"/><rect x="821" y="368" width="1" height="1"/><rect x="833" y="342" width="1" height="1"/><rect x="967" y="342" width="1" height="1"/><rect x="571" y="342" width="1" height="1"/><rect x="309" y="342" width="1" height="1"/><rect x="521" y="112" width="1" height="1"/><rect x="621" y="199" width="1" height="1"/><rect x="1020" y="433" width="1" height="1"/><rect x="921" y="82" width="1" height="1"/><rect x="121" y="407" width="1" height="1"/><rect x="525" y="82" width="1" height="1"/><rect x="517" y="407" width="1" height="1"/><rect x="520" y="641" width="1" height="1"/><rect x="421" y="290" width="1" height="1"/><rect x="921" y="576" width="1" height="1"/><rect x="581" y="19" width="1" height="1"/><rect x="521" y="642" width="1" height="1"/><rect x="101" y="19" width="1" height="1"/><rect x="221" y="121" width="1" height="1"/><rect x="997" y="342" width="1" height="1"/><rect x="601" y="342" width="1" height="1"/><rect x="735" y="342" width="1" height="1"/><rect x="721" y="407" width="1" height="1"/><rect x="221" y="615" width="1" height="1"/><rect x="521" y="498" width="1" height="1"/><rect x="821" y="381" width="1" height="1"/><rect x="981" y="339" width="1" height="1"/><rect x="81" y="82" width="1" height="1"/><rect x="321" y="329" width="1" height="1"/><rect x="521" y="354" width="1" height="1"/><rect x="621" y="212" width="1" height="1"/><rect x="1020" y="446" width="1" height="1"/><rect x="121" y="420" width="1" height="1"/><rect x="518" y="56" width="1" height="1"/><rect x="520" y="654" width="1" height="1"/><rect x="461" y="339" width="1" height="1"/><rect x="522" y="355" width="1" height="1"/><rect x="921" y="589" width="1" height="1"/><rect x="419" y="342" width="1" height="1"/><rect x="23" y="342" width="1" height="1"/><rect x="521" y="210" width="1" height="1"/><rect x="157" y="342" width="1" height="1"/><rect x="561" y="17" width="1" height="1"/><rect x="301" y="472" width="1" height="1"/><rect x="521" y="246" width="1" height="1"/><rect x="721" y="420" width="1" height="1"/><rect x="221" y="628" width="1" height="1"/><rect x="481" y="667" width="1" height="1"/><rect x="781" y="407" width="1" height="1"/><rect x="521" y="102" width="1" height="1"/><rect x="901" y="472" width="1" height="1"/><rect x="449" y="342" width="1" height="1"/><rect x="187" y="342" width="1" height="1"/><rect x="521" y="596" width="1" height="1"/><rect x="541" y="345" width="1" height="1"/><rect x="121" y="662" width="1" height="1"/><rect x="341" y="665" width="1" height="1"/><rect x="381" y="472" width="1" height="1"/><rect x="521" y="632" width="1" height="1"/><rect x="518" y="69" width="1" height="1"/><rect x="523" y="147" width="1" height="1"/><rect x="221" y="340" width="1" height="1"/><rect x="1018" y="355" width="1" height="1"/><rect x="261" y="147" width="1" height="1"/><rect x="441" y="343" width="1" height="1"/><rect x="525" y="602" width="1" height="1"/><rect x="23" y="355" width="1" height="1"/><rect x="518" y="563" width="1" height="1"/><rect x="801" y="277" width="1" height="1"/><rect x="787" y="342" width="1" height="1"/><rect x="521" y="488" width="1" height="1"/><rect x="721" y="662" width="1" height="1"/><rect x="941" y="665" width="1" height="1"/><rect x="217" y="342" width="1" height="1"/><rect x="741" y="82" width="1" height="1"/><rect x="861" y="147" width="1" height="1"/><rect x="301" y="341" width="1" height="1"/><rect x="521" y="344" width="1" height="1"/><rect x="1019" y="212" width="1" height="1"/><rect x="401" y="19" width="1" height="1"/><rect x="524" y="498" width="1" height="1"/><rect x="621" y="22" width="1" height="1"/><rect x="817" y="342" width="1" height="1"/><rect x="951" y="342" width="1" height="1"/><rect x="555" y="342" width="1" height="1"/><rect x="521" y="200" width="1" height="1"/><rect x="961" y="472" width="1" height="1"/><rect x="901" y="341" width="1" height="1"/><rect x="1018" y="368" width="1" height="1"/><rect x="601" y="345" width="1" height="1"/><rect x="501" y="407" width="1" height="1"/><rect x="921" y="664" width="1" height="1"/><rect x="821" y="348" width="1" height="1"/><rect x="518" y="576" width="1" height="1"/><rect x="521" y="56" width="1" height="1"/><rect x="21" y="264" width="1" height="1"/><rect x="561" y="537" width="1" height="1"/><rect x="26" y="342" width="1" height="1"/><rect x="441" y="212" width="1" height="1"/><rect x="521" y="92" width="1" height="1"/><rect x="481" y="19" width="1" height="1"/><rect x="847" y="342" width="1" height="1"/><rect x="981" y="342" width="1" height="1"/><rect x="585" y="342" width="1" height="1"/><rect x="281" y="339" width="1" height="1"/><rect x="521" y="586" width="1" height="1"/><rect x="239" y="342" width="1" height="1"/><rect x="1001" y="665" width="1" height="1"/><rect x="373" y="342" width="1" height="1"/><rect x="381" y="17" width="1" height="1"/><rect x="524" y="511" width="1" height="1"/><rect x="921" y="147" width="1" height="1"/><rect x="517" y="472" width="1" height="1"/><rect x="421" y="355" width="1" height="1"/><rect x="521" y="442" width="1" height="1"/><rect x="1011" y="342" width="1" height="1"/><rect x="221" y="186" width="1" height="1"/><rect x="521" y="298" width="1" height="1"/><rect x="521" y="69" width="1" height="1"/><rect x="665" y="342" width="1" height="1"/><rect x="269" y="342" width="1" height="1"/><rect x="961" y="341" width="1" height="1"/><rect x="403" y="342" width="1" height="1"/><rect x="941" y="17" width="1" height="1"/><rect x="141" y="342" width="1" height="1"/><rect x="521" y="563" width="1" height="1"/><rect x="361" y="345" width="1" height="1"/><rect x="521" y="334" width="1" height="1"/><rect x="821" y="446" width="1" height="1"/><rect x="681" y="472" width="1" height="1"/><rect x="161" y="665" width="1" height="1"/><rect x="81" y="147" width="1" height="1"/><rect x="741" y="602" width="1" height="1"/><rect x="321" y="394" width="1" height="1"/><rect x="520" y="225" width="1" height="1"/><rect x="521" y="190" width="1" height="1"/><rect x="861" y="667" width="1" height="1"/><rect x="621" y="277" width="1" height="1"/><rect x="1003" y="342" width="1" height="1"/><rect x="1017" y="277" width="1" height="1"/><rect x="1020" y="511" width="1" height="1"/><rect x="921" y="160" width="1" height="1"/><rect x="121" y="485" width="1" height="1"/><rect x="421" y="368" width="1" height="1"/><rect x="522" y="420" width="1" height="1"/><rect x="433" y="342" width="1" height="1"/><rect x="921" y="654" width="1" height="1"/><rect x="37" y="342" width="1" height="1"/><rect x="761" y="665" width="1" height="1"/><rect x="171" y="342" width="1" height="1"/><rect x="521" y="46" width="1" height="1"/><rect x="221" y="199" width="1" height="1"/><rect x="721" y="485" width="1" height="1"/><rect x="899" y="342" width="1" height="1"/><rect x="521" y="576" width="1" height="1"/><rect x="771" y="342" width="1" height="1"/><rect x="524" y="56" width="1" height="1"/><rect x="201" y="342" width="1" height="1"/><rect x="321" y="407" width="1" height="1"/><rect x="521" y="432" width="1" height="1"/><rect x="621" y="290" width="1" height="1"/><rect x="1020" y="524" width="1" height="1"/><rect x="121" y="498" width="1" height="1"/><rect x="381" y="537" width="1" height="1"/><rect x="518" y="134" width="1" height="1"/><rect x="515" y="537" width="1" height="1"/><rect x="523" y="212" width="1" height="1"/><rect x="522" y="433" width="1" height="1"/><rect x="261" y="212" width="1" height="1"/><rect x="521" y="288" width="1" height="1"/><rect x="23" y="420" width="1" height="1"/><rect x="581" y="339" width="1" height="1"/><rect x="801" y="342" width="1" height="1"/><rect x="101" y="339" width="1" height="1"/><rect x="681" y="17" width="1" height="1"/><rect x="193" y="342" width="1" height="1"/><rect x="721" y="498" width="1" height="1"/><rect x="521" y="144" width="1" height="1"/><rect x="524" y="69" width="1" height="1"/><rect x="161" y="17" width="1" height="1"/><rect x="1019" y="277" width="1" height="1"/><rect x="521" y="180" width="1" height="1"/><rect x="24" y="277" width="1" height="1"/><rect x="881" y="343" width="1" height="1"/><rect x="831" y="342" width="1" height="1"/><rect x="965" y="342" width="1" height="1"/><rect x="781" y="341" width="1" height="1"/><rect x="521" y="36" width="1" height="1"/><rect x="81" y="667" width="1" height="1"/><rect x="619" y="342" width="1" height="1"/><rect x="223" y="342" width="1" height="1"/><rect x="761" y="17" width="1" height="1"/><rect x="181" y="345" width="1" height="1"/><rect x="1018" y="433" width="1" height="1"/><rect x="521" y="530" width="1" height="1"/><rect x="501" y="472" width="1" height="1"/><rect x="23" y="433" width="1" height="1"/><rect x="518" y="641" width="1" height="1"/><rect x="561" y="602" width="1" height="1"/><rect x="521" y="566" width="1" height="1"/><rect x="441" y="277" width="1" height="1"/><rect x="981" y="407" width="1" height="1"/><rect x="41" y="343" width="1" height="1"/><rect x="649" y="342" width="1" height="1"/><rect x="253" y="342" width="1" height="1"/><rect x="521" y="422" width="1" height="1"/><rect x="121" y="43" width="1" height="1"/><rect x="387" y="342" width="1" height="1"/><rect x="515" y="82" width="1" height="1"/><rect x="524" y="576" width="1" height="1"/><rect x="517" y="537" width="1" height="1"/><rect x="321" y="662" width="1" height="1"/><rect x="541" y="665" width="1" height="1"/><rect x="341" y="82" width="1" height="1"/><rect x="521" y="278" width="1" height="1"/><rect x="853" y="342" width="1" height="1"/><rect x="1018" y="446" width="1" height="1"/><rect x="518" y="654" width="1" height="1"/><rect x="221" y="22" width="1" height="1"/><rect x="521" y="134" width="1" height="1"/><rect x="679" y="342" width="1" height="1"/><rect x="417" y="342" width="1" height="1"/><rect x="155" y="342" width="1" height="1"/><rect x="941" y="82" width="1" height="1"/><rect x="141" y="407" width="1" height="1"/><rect x="241" y="345" width="1" height="1"/><rect x="821" y="511" width="1" height="1"/><rect x="681" y="537" width="1" height="1"/><rect x="501" y="341" width="1" height="1"/><rect x="721" y="344" width="1" height="1"/><rect x="521" y="664" width="1" height="1"/><rect x="741" y="667" width="1" height="1"/><rect x="121" y="56" width="1" height="1"/><rect x="883" y="342" width="1" height="1"/><rect x="401" y="339" width="1" height="1"/><rect x="520" y="290" width="1" height="1"/><rect x="1017" y="342" width="1" height="1"/><rect x="621" y="342" width="1" height="1"/><rect x="521" y="26" width="1" height="1"/><rect x="524" y="589" width="1" height="1"/><rect x="22" y="342" width="1" height="1"/><rect x="921" y="225" width="1" height="1"/><rect x="121" y="550" width="1" height="1"/><rect x="41" y="212" width="1" height="1"/><rect x="421" y="433" width="1" height="1"/><rect x="521" y="520" width="1" height="1"/><rect x="522" y="485" width="1" height="1"/><rect x="447" y="342" width="1" height="1"/><rect x="101" y="342" width="1" height="1"/><rect x="721" y="56" width="1" height="1"/><rect x="601" y="665" width="1" height="1"/><rect x="221" y="264" width="1" height="1"/><rect x="521" y="376" width="1" height="1"/><rect x="521" y="147" width="1" height="1"/><rect x="701" y="343" width="1" height="1"/><rect x="921" y="346" width="1" height="1"/><rect x="21" y="355" width="1" height="1"/><rect x="651" y="342" width="1" height="1"/><rect x="521" y="641" width="1" height="1"/><rect x="785" y="342" width="1" height="1"/><rect x="521" y="412" width="1" height="1"/><rect x="481" y="339" width="1" height="1"/><rect x="821" y="524" width="1" height="1"/><rect x="1001" y="82" width="1" height="1"/><rect x="201" y="407" width="1" height="1"/><rect x="1020" y="95" width="1" height="1"/><rect x="321" y="472" width="1" height="1"/><rect x="520" y="303" width="1" height="1"/><rect x="521" y="268" width="1" height="1"/><rect x="621" y="355" width="1" height="1"/><rect x="1020" y="589" width="1" height="1"/><rect x="921" y="238" width="1" height="1"/><rect x="121" y="563" width="1" height="1"/><rect x="527" y="82" width="1" height="1"/><rect x="381" y="602" width="1" height="1"/><rect x="421" y="446" width="1" height="1"/><rect x="515" y="602" width="1" height="1"/><rect x="522" y="498" width="1" height="1"/><rect x="521" y="124" width="1" height="1"/><rect x="721" y="69" width="1" height="1"/><rect x="469" y="342" width="1" height="1"/><rect x="221" y="277" width="1" height="1"/><rect x="207" y="342" width="1" height="1"/><rect x="721" y="563" width="1" height="1"/><rect x="281" y="407" width="1" height="1"/><rect x="361" y="665" width="1" height="1"/><rect x="521" y="654" width="1" height="1"/><rect x="524" y="134" width="1" height="1"/><rect x="161" y="82" width="1" height="1"/><rect x="941" y="602" width="1" height="1"/><rect x="24" y="342" width="1" height="1"/><rect x="701" y="212" width="1" height="1"/><rect x="741" y="19" width="1" height="1"/><rect x="321" y="485" width="1" height="1"/><rect x="521" y="510" width="1" height="1"/><rect x="499" y="342" width="1" height="1"/><rect x="633" y="342" width="1" height="1"/><rect x="237" y="342" width="1" height="1"/><rect x="641" y="17" width="1" height="1"/><rect x="761" y="82" width="1" height="1"/><rect x="501" y="537" width="1" height="1"/><rect x="521" y="366" width="1" height="1"/><rect x="23" y="498" width="1" height="1"/><rect x="921" y="336" width="1" height="1"/><rect x="721" y="576" width="1" height="1"/><rect x="837" y="342" width="1" height="1"/><rect x="521" y="222" width="1" height="1"/><rect x="663" y="342" width="1" height="1"/><rect x="267" y="342" width="1" height="1"/><rect x="401" y="342" width="1" height="1"/><rect x="521" y="258" width="1" height="1"/><rect x="524" y="641" width="1" height="1"/><rect x="55" y="342" width="1" height="1"/><rect x="461" y="472" width="1" height="1"/><rect x="341" y="147" width="1" height="1"/><rect x="521" y="114" width="1" height="1"/><rect x="881" y="277" width="1" height="1"/><rect x="518" y="225" width="1" height="1"/><rect x="867" y="342" width="1" height="1"/><rect x="605" y="342" width="1" height="1"/><rect x="1018" y="511" width="1" height="1"/><rect x="521" y="608" width="1" height="1"/><rect x="23" y="511" width="1" height="1"/><rect x="693" y="342" width="1" height="1"/><rect x="821" y="82" width="1" height="1"/><rect x="521" y="644" width="1" height="1"/><rect x="941" y="147" width="1" height="1"/><rect x="85" y="342" width="1" height="1"/><rect x="681" y="602" width="1" height="1"/><rect x="521" y="500" width="1" height="1"/><rect x="121" y="121" width="1" height="1"/><rect x="897" y="342" width="1" height="1"/><rect x="635" y="342" width="1" height="1"/><rect x="1017" y="407" width="1" height="1"/><rect x="522" y="56" width="1" height="1"/><rect x="161" y="602" width="1" height="1"/><rect x="524" y="654" width="1" height="1"/><rect x="22" y="407" width="1" height="1"/><rect x="981" y="341" width="1" height="1"/><rect x="289" y="342" width="1" height="1"/><rect x="41" y="277" width="1" height="1"/><rect x="521" y="356" width="1" height="1"/><rect x="581" y="407" width="1" height="1"/><rect x="115" y="342" width="1" height="1"/><rect x="101" y="407" width="1" height="1"/><rect x="181" y="665" width="1" height="1"/><rect x="1018" y="524" width="1" height="1"/><rect x="641" y="537" width="1" height="1"/><rect x="761" y="602" width="1" height="1"/><rect x="521" y="212" width="1" height="1"/><rect x="561" y="19" width="1" height="1"/><rect x="821" y="95" width="1" height="1"/><rect x="21" y="420" width="1" height="1"/><rect x="821" y="589" width="1" height="1"/><rect x="319" y="342" width="1" height="1"/><rect x="715" y="342" width="1" height="1"/><rect x="453" y="342" width="1" height="1"/><rect x="57" y="342" width="1" height="1"/><rect x="321" y="43" width="1" height="1"/><rect x="521" y="68" width="1" height="1"/><rect x="1001" y="147" width="1" height="1"/><rect x="1020" y="160" width="1" height="1"/><rect x="121" y="134" width="1" height="1"/><rect x="141" y="341" width="1" height="1"/><rect x="520" y="368" width="1" height="1"/><rect x="621" y="420" width="1" height="1"/><rect x="521" y="104" width="1" height="1"/><rect x="522" y="69" width="1" height="1"/><rect x="541" y="82" width="1" height="1"/><rect x="921" y="303" width="1" height="1"/><rect x="121" y="628" width="1" height="1"/><rect x="527" y="147" width="1" height="1"/><rect x="421" y="511" width="1" height="1"/><rect x="521" y="598" width="1" height="1"/><rect x="522" y="563" width="1" height="1"/><rect x="121" y="664" width="1" height="1"/><rect x="341" y="667" width="1" height="1"/><rect x="721" y="134" width="1" height="1"/><rect x="483" y="342" width="1" height="1"/><rect x="87" y="342" width="1" height="1"/><rect x="617" y="342" width="1" height="1"/><rect x="221" y="342" width="1" height="1"/><rect x="521" y="454" width="1" height="1"/><rect x="441" y="345" width="1" height="1"/><rect x="521" y="225" width="1" height="1"/><rect x="21" y="433" width="1" height="1"/><rect x="241" y="665" width="1" height="1"/><rect x="281" y="472" width="1" height="1"/><rect x="521" y="490" width="1" height="1"/><rect x="821" y="602" width="1" height="1"/><rect x="721" y="664" width="1" height="1"/><rect x="941" y="667" width="1" height="1"/><rect x="321" y="56" width="1" height="1"/><rect x="701" y="277" width="1" height="1"/><rect x="1020" y="173" width="1" height="1"/><rect x="321" y="550" width="1" height="1"/><rect x="301" y="343" width="1" height="1"/><rect x="521" y="346" width="1" height="1"/><rect x="621" y="433" width="1" height="1"/><rect x="513" y="342" width="1" height="1"/><rect x="647" y="342" width="1" height="1"/><rect x="251" y="342" width="1" height="1"/><rect x="921" y="316" width="1" height="1"/><rect x="121" y="641" width="1" height="1"/><rect x="23" y="69" width="1" height="1"/><rect x="201" y="341" width="1" height="1"/><rect x="522" y="576" width="1" height="1"/><rect x="39" y="342" width="1" height="1"/><rect x="181" y="17" width="1" height="1"/><rect x="521" y="202" width="1" height="1"/><rect x="721" y="147" width="1" height="1"/><rect x="901" y="343" width="1" height="1"/><rect x="221" y="355" width="1" height="1"/><rect x="851" y="342" width="1" height="1"/><rect x="721" y="641" width="1" height="1"/><rect x="921" y="666" width="1" height="1"/><rect x="521" y="58" width="1" height="1"/><rect x="519" y="277" width="1" height="1"/><rect x="401" y="407" width="1" height="1"/><rect x="69" y="342" width="1" height="1"/><rect x="281" y="341" width="1" height="1"/><rect x="461" y="537" width="1" height="1"/><rect x="321" y="563" width="1" height="1"/><rect x="521" y="588" width="1" height="1"/><rect x="1001" y="667" width="1" height="1"/><rect x="381" y="19" width="1" height="1"/><rect x="881" y="342" width="1" height="1"/><rect x="518" y="290" width="1" height="1"/><rect x="1015" y="342" width="1" height="1"/><rect x="521" y="444" width="1" height="1"/><rect x="23" y="576" width="1" height="1"/><rect x="669" y="342" width="1" height="1"/><rect x="273" y="342" width="1" height="1"/><rect x="99" y="342" width="1" height="1"/><rect x="481" y="407" width="1" height="1"/><rect x="721" y="654" width="1" height="1"/><rect x="241" y="17" width="1" height="1"/><rect x="521" y="300" width="1" height="1"/><rect x="361" y="82" width="1" height="1"/><rect x="781" y="147" width="1" height="1"/><rect x="961" y="343" width="1" height="1"/><rect x="901" y="212" width="1" height="1"/><rect x="524" y="225" width="1" height="1"/><rect x="911" y="342" width="1" height="1"/><rect x="521" y="336" width="1" height="1"/><rect x="741" y="339" width="1" height="1"/><rect x="421" y="69" width="1" height="1"/><rect x="565" y="342" width="1" height="1"/><rect x="161" y="667" width="1" height="1"/><rect x="22" y="472" width="1" height="1"/><rect x="699" y="342" width="1" height="1"/><rect x="303" y="342" width="1" height="1"/><rect x="437" y="342" width="1" height="1"/><rect x="41" y="342" width="1" height="1"/><rect x="841" y="17" width="1" height="1"/><rect x="581" y="472" width="1" height="1"/><rect x="521" y="192" width="1" height="1"/><rect x="1018" y="589" width="1" height="1"/><rect x="641" y="602" width="1" height="1"/><rect x="23" y="589" width="1" height="1"/><rect x="761" y="667" width="1" height="1"/><rect x="521" y="48" width="1" height="1"/><rect x="821" y="160" width="1" height="1"/><rect x="921" y="18" width="1" height="1"/><rect x="729" y="342" width="1" height="1"/><rect x="333" y="342" width="1" height="1"/><rect x="467" y="342" width="1" height="1"/><rect x="71" y="342" width="1" height="1"/><rect x="1020" y="225" width="1" height="1"/><rect x="521" y="578" width="1" height="1"/><rect x="121" y="199" width="1" height="1"/><rect x="661" y="472" width="1" height="1"/><rect x="520" y="433" width="1" height="1"/><rect x="421" y="82" width="1" height="1"/><rect x="522" y="134" width="1" height="1"/><rect x="541" y="147" width="1" height="1"/><rect x="921" y="368" width="1" height="1"/><rect x="527" y="212" width="1" height="1"/><rect x="961" y="212" width="1" height="1"/><rect x="421" y="576" width="1" height="1"/><rect x="521" y="434" width="1" height="1"/><rect x="497" y="342" width="1" height="1"/><rect x="26" y="82" width="1" height="1"/><rect x="151" y="342" width="1" height="1"/><rect x="521" y="290" width="1" height="1"/><rect x="581" y="341" width="1" height="1"/><rect x="821" y="173" width="1" height="1"/><rect x="21" y="498" width="1" height="1"/><rect x="101" y="341" width="1" height="1"/><rect x="681" y="19" width="1" height="1"/><rect x="321" y="121" width="1" height="1"/><rect x="521" y="146" width="1" height="1"/><rect x="835" y="342" width="1" height="1"/><rect x="1020" y="238" width="1" height="1"/><rect x="121" y="212" width="1" height="1"/><rect x="520" y="446" width="1" height="1"/><rect x="621" y="498" width="1" height="1"/><rect x="521" y="182" width="1" height="1"/><rect x="921" y="381" width="1" height="1"/><rect x="881" y="345" width="1" height="1"/><rect x="421" y="589" width="1" height="1"/><rect x="522" y="641" width="1" height="1"/><rect x="53" y="342" width="1" height="1"/><rect x="61" y="17" width="1" height="1"/><rect x="181" y="82" width="1" height="1"/><rect x="841" y="537" width="1" height="1"/><rect x="601" y="147" width="1" height="1"/><rect x="781" y="343" width="1" height="1"/><rect x="521" y="38" width="1" height="1"/><rect x="721" y="212" width="1" height="1"/><rect x="761" y="19" width="1" height="1"/><rect x="221" y="420" width="1" height="1"/><rect x="865" y="342" width="1" height="1"/><rect x="521" y="532" width="1" height="1"/><rect x="561" y="339" width="1" height="1"/><rect x="521" y="303" width="1" height="1"/><rect x="21" y="511" width="1" height="1"/><rect x="519" y="342" width="1" height="1"/><rect x="257" y="342" width="1" height="1"/><rect x="661" y="17" width="1" height="1"/><rect x="521" y="388" width="1" height="1"/><rect x="321" y="134" width="1" height="1"/><rect x="83" y="342" width="1" height="1"/><rect x="41" y="345" width="1" height="1"/><rect x="321" y="628" width="1" height="1"/><rect x="521" y="424" width="1" height="1"/><rect x="621" y="511" width="1" height="1"/><rect x="518" y="355" width="1" height="1"/><rect x="1015" y="407" width="1" height="1"/><rect x="522" y="654" width="1" height="1"/><rect x="945" y="342" width="1" height="1"/><rect x="549" y="342" width="1" height="1"/><rect x="541" y="667" width="1" height="1"/><rect x="301" y="277" width="1" height="1"/><rect x="683" y="342" width="1" height="1"/><rect x="287" y="342" width="1" height="1"/><rect x="521" y="280" width="1" height="1"/><rect x="721" y="225" width="1" height="1"/><rect x="221" y="662" width="1" height="1"/><rect x="113" y="342" width="1" height="1"/><rect x="441" y="665" width="1" height="1"/><rect x="481" y="472" width="1" height="1"/><rect x="241" y="82" width="1" height="1"/><rect x="361" y="147" width="1" height="1"/><rect x="521" y="136" width="1" height="1"/><rect x="781" y="212" width="1" height="1"/><rect x="901" y="277" width="1" height="1"/><rect x="524" y="290" width="1" height="1"/><rect x="501" y="343" width="1" height="1"/><rect x="975" y="342" width="1" height="1"/><rect x="721" y="346" width="1" height="1"/><rect x="713" y="342" width="1" height="1"/><rect x="317" y="342" width="1" height="1"/><rect x="451" y="342" width="1" height="1"/><rect x="321" y="641" width="1" height="1"/><rect x="521" y="666" width="1" height="1"/><rect x="401" y="341" width="1" height="1"/><rect x="1018" y="160" width="1" height="1"/><rect x="621" y="344" width="1" height="1"/><rect x="521" y="28" width="1" height="1"/><rect x="518" y="368" width="1" height="1"/><rect x="521" y="522" width="1" height="1"/><rect x="21" y="56" width="1" height="1"/><rect x="23" y="654" width="1" height="1"/><rect x="61" y="537" width="1" height="1"/><rect x="181" y="602" width="1" height="1"/><rect x="743" y="342" width="1" height="1"/><rect x="521" y="378" width="1" height="1"/><rect x="701" y="345" width="1" height="1"/><rect x="921" y="348" width="1" height="1"/><rect x="135" y="342" width="1" height="1"/><rect x="524" y="303" width="1" height="1"/><rect x="481" y="341" width="1" height="1"/><rect x="661" y="537" width="1" height="1"/><rect x="421" y="147" width="1" height="1"/><rect x="521" y="234" width="1" height="1"/><rect x="541" y="212" width="1" height="1"/><rect x="961" y="277" width="1" height="1"/><rect x="381" y="339" width="1" height="1"/><rect x="521" y="270" width="1" height="1"/><rect x="21" y="69" width="1" height="1"/><rect x="165" y="342" width="1" height="1"/><rect x="26" y="147" width="1" height="1"/><rect x="521" y="126" width="1" height="1"/><rect x="441" y="17" width="1" height="1"/><rect x="821" y="238" width="1" height="1"/><rect x="521" y="620" width="1" height="1"/><rect x="241" y="602" width="1" height="1"/><rect x="621" y="69" width="1" height="1"/><rect x="765" y="342" width="1" height="1"/><rect x="521" y="656" width="1" height="1"/><rect x="517" y="277" width="1" height="1"/><rect x="121" y="277" width="1" height="1"/><rect x="503" y="342" width="1" height="1"/><rect x="361" y="667" width="1" height="1"/><rect x="1020" y="303" width="1" height="1"/><rect x="520" y="511" width="1" height="1"/><rect x="421" y="160" width="1" height="1"/><rect x="921" y="446" width="1" height="1"/><rect x="421" y="654" width="1" height="1"/><rect x="521" y="512" width="1" height="1"/><rect x="841" y="602" width="1" height="1"/><rect x="601" y="212" width="1" height="1"/><rect x="641" y="19" width="1" height="1"/><rect x="721" y="277" width="1" height="1"/><rect x="221" y="485" width="1" height="1"/><rect x="141" y="147" width="1" height="1"/><rect x="521" y="368" width="1" height="1"/><rect x="795" y="342" width="1" height="1"/><rect x="929" y="342" width="1" height="1"/><rect x="821" y="251" width="1" height="1"/><rect x="533" y="342" width="1" height="1"/><rect x="921" y="338" width="1" height="1"/><rect x="21" y="576" width="1" height="1"/><rect x="271" y="342" width="1" height="1"/><rect x="321" y="199" width="1" height="1"/><rect x="521" y="224" width="1" height="1"/><rect x="621" y="82" width="1" height="1"/><rect x="1020" y="316" width="1" height="1"/><rect x="121" y="290" width="1" height="1"/><rect x="520" y="524" width="1" height="1"/><rect x="621" y="576" width="1" height="1"/><rect x="522" y="225" width="1" height="1"/><rect x="921" y="459" width="1" height="1"/><rect x="521" y="80" width="1" height="1"/><rect x="959" y="342" width="1" height="1"/><rect x="563" y="342" width="1" height="1"/><rect x="697" y="342" width="1" height="1"/><rect x="301" y="342" width="1" height="1"/><rect x="521" y="116" width="1" height="1"/><rect x="721" y="290" width="1" height="1"/><rect x="221" y="498" width="1" height="1"/><rect x="521" y="610" width="1" height="1"/><rect x="481" y="537" width="1" height="1"/><rect x="521" y="381" width="1" height="1"/><rect x="21" y="589" width="1" height="1"/><rect x="781" y="277" width="1" height="1"/><rect x="681" y="339" width="1" height="1"/><rect x="201" y="147" width="1" height="1"/><rect x="521" y="466" width="1" height="1"/><rect x="321" y="212" width="1" height="1"/><rect x="989" y="342" width="1" height="1"/><rect x="727" y="342" width="1" height="1"/><rect x="161" y="339" width="1" height="1"/><rect x="381" y="342" width="1" height="1"/><rect x="521" y="502" width="1" height="1"/><rect x="621" y="589" width="1" height="1"/><rect x="119" y="342" width="1" height="1"/><rect x="881" y="665" width="1" height="1"/><rect x="1018" y="225" width="1" height="1"/><rect x="261" y="17" width="1" height="1"/><rect x="525" y="472" width="1" height="1"/><rect x="23" y="225" width="1" height="1"/><rect x="518" y="433" width="1" height="1"/><rect x="801" y="147" width="1" height="1"/><rect x="981" y="343" width="1" height="1"/><rect x="521" y="358" width="1" height="1"/><rect x="931" y="342" width="1" height="1"/><rect x="61" y="602" width="1" height="1"/><rect x="761" y="339" width="1" height="1"/><rect x="181" y="667" width="1" height="1"/><rect x="861" y="17" width="1" height="1"/><rect x="521" y="214" width="1" height="1"/><rect x="1019" y="82" width="1" height="1"/><rect x="24" y="82" width="1" height="1"/><rect x="149" y="342" width="1" height="1"/><rect x="524" y="368" width="1" height="1"/><rect x="661" y="602" width="1" height="1"/><rect x="521" y="70" width="1" height="1"/><rect x="41" y="665" width="1" height="1"/><rect x="81" y="472" width="1" height="1"/><rect x="961" y="342" width="1" height="1"/><rect x="141" y="343" width="1" height="1"/><rect x="615" y="342" width="1" height="1"/><rect x="1018" y="238" width="1" height="1"/><rect x="749" y="342" width="1" height="1"/><rect x="501" y="277" width="1" height="1"/><rect x="518" y="446" width="1" height="1"/><rect x="521" y="600" width="1" height="1"/><rect x="21" y="134" width="1" height="1"/><rect x="179" y="342" width="1" height="1"/><rect x="561" y="407" width="1" height="1"/><rect x="441" y="82" width="1" height="1"/><rect x="981" y="212" width="1" height="1"/><rect x="221" y="344" width="1" height="1"/><rect x="521" y="456" width="1" height="1"/><rect x="321" y="22" width="1" height="1"/><rect x="241" y="667" width="1" height="1"/><rect x="779" y="342" width="1" height="1"/><rect x="524" y="381" width="1" height="1"/><rect x="913" y="342" width="1" height="1"/><rect x="517" y="342" width="1" height="1"/><rect x="721" y="666" width="1" height="1"/><rect x="421" y="225" width="1" height="1"/><rect x="521" y="312" width="1" height="1"/><rect x="301" y="345" width="1" height="1"/><rect x="621" y="664" width="1" height="1"/><rect x="521" y="348" width="1" height="1"/><rect x="221" y="56" width="1" height="1"/><rect x="523" y="537" width="1" height="1"/><rect x="261" y="537" width="1" height="1"/><rect x="201" y="343" width="1" height="1"/><rect x="141" y="212" width="1" height="1"/><rect x="421" y="346" width="1" height="1"/><rect x="809" y="342" width="1" height="1"/><rect x="521" y="433" width="1" height="1"/><rect x="181" y="19" width="1" height="1"/><rect x="943" y="342" width="1" height="1"/><rect x="547" y="342" width="1" height="1"/><rect x="521" y="204" width="1" height="1"/><rect x="821" y="316" width="1" height="1"/><rect x="681" y="342" width="1" height="1"/><rect x="21" y="641" width="1" height="1"/><rect x="901" y="345" width="1" height="1"/><rect x="335" y="342" width="1" height="1"/><rect x="701" y="665" width="1" height="1"/><rect x="81" y="17" width="1" height="1"/><rect x="741" y="472" width="1" height="1"/><rect x="861" y="537" width="1" height="1"/><rect x="521" y="60" width="1" height="1"/><rect x="520" y="95" width="1" height="1"/><rect x="621" y="147" width="1" height="1"/><rect x="1017" y="147" width="1" height="1"/><rect x="1020" y="381" width="1" height="1"/><rect x="1019" y="602" width="1" height="1"/><rect x="921" y="30" width="1" height="1"/><rect x="121" y="355" width="1" height="1"/><rect x="520" y="589" width="1" height="1"/><rect x="421" y="238" width="1" height="1"/><rect x="522" y="290" width="1" height="1"/><rect x="921" y="524" width="1" height="1"/><rect x="973" y="342" width="1" height="1"/><rect x="281" y="343" width="1" height="1"/><rect x="521" y="590" width="1" height="1"/><rect x="221" y="69" width="1" height="1"/><rect x="365" y="342" width="1" height="1"/><rect x="721" y="355" width="1" height="1"/><rect x="103" y="342" width="1" height="1"/><rect x="221" y="563" width="1" height="1"/><rect x="521" y="446" width="1" height="1"/><rect x="821" y="329" width="1" height="1"/><rect x="21" y="654" width="1" height="1"/><rect x="915" y="342" width="1" height="1"/><rect x="441" y="602" width="1" height="1"/><rect x="201" y="212" width="1" height="1"/><rect x="569" y="342" width="1" height="1"/><rect x="241" y="19" width="1" height="1"/><rect x="321" y="277" width="1" height="1"/><rect x="521" y="302" width="1" height="1"/><rect x="621" y="160" width="1" height="1"/><rect x="961" y="345" width="1" height="1"/><rect x="1020" y="394" width="1" height="1"/><rect x="121" y="368" width="1" height="1"/><rect x="395" y="342" width="1" height="1"/><rect x="381" y="407" width="1" height="1"/><rect x="133" y="342" width="1" height="1"/><rect x="621" y="654" width="1" height="1"/><rect x="523" y="82" width="1" height="1"/><rect x="522" y="303" width="1" height="1"/><rect x="515" y="407" width="1" height="1"/><rect x="921" y="537" width="1" height="1"/><rect x="525" y="537" width="1" height="1"/><rect x="521" y="158" width="1" height="1"/><rect x="23" y="290" width="1" height="1"/><rect x="801" y="212" width="1" height="1"/><rect x="841" y="19" width="1" height="1"/><rect x="421" y="336" width="1" height="1"/><rect x="641" y="339" width="1" height="1"/><rect x="521" y="194" width="1" height="1"/><rect x="721" y="368" width="1" height="1"/><rect x="995" y="342" width="1" height="1"/><rect x="599" y="342" width="1" height="1"/><rect x="733" y="342" width="1" height="1"/><rect x="221" y="576" width="1" height="1"/><rect x="1019" y="147" width="1" height="1"/><rect x="521" y="50" width="1" height="1"/><rect x="163" y="342" width="1" height="1"/><rect x="24" y="147" width="1" height="1"/><rect x="921" y="20" width="1" height="1"/><rect x="521" y="544" width="1" height="1"/><rect x="321" y="290" width="1" height="1"/><rect x="81" y="537" width="1" height="1"/><rect x="821" y="18" width="1" height="1"/><rect x="521" y="580" width="1" height="1"/><rect x="629" y="342" width="1" height="1"/><rect x="763" y="342" width="1" height="1"/><rect x="367" y="342" width="1" height="1"/><rect x="1018" y="303" width="1" height="1"/><rect x="501" y="342" width="1" height="1"/><rect x="23" y="303" width="1" height="1"/><rect x="518" y="511" width="1" height="1"/><rect x="561" y="472" width="1" height="1"/><rect x="521" y="436" width="1" height="1"/><rect x="981" y="277" width="1" height="1"/><rect x="521" y="292" width="1" height="1"/><rect x="581" y="343" width="1" height="1"/><rect x="793" y="342" width="1" height="1"/><rect x="397" y="342" width="1" height="1"/><rect x="101" y="343" width="1" height="1"/><rect x="927" y="342" width="1" height="1"/><rect x="531" y="342" width="1" height="1"/><rect x="524" y="446" width="1" height="1"/><rect x="185" y="342" width="1" height="1"/><rect x="521" y="148" width="1" height="1"/><rect x="881" y="82" width="1" height="1"/><rect x="1018" y="316" width="1" height="1"/><rect x="518" y="524" width="1" height="1"/><rect x="523" y="602" width="1" height="1"/><rect x="261" y="602" width="1" height="1"/><rect x="61" y="19" width="1" height="1"/><rect x="141" y="277" width="1" height="1"/><rect x="781" y="345" width="1" height="1"/><rect x="681" y="407" width="1" height="1"/><rect x="521" y="40" width="1" height="1"/><rect x="611" y="342" width="1" height="1"/><rect x="215" y="342" width="1" height="1"/><rect x="349" y="342" width="1" height="1"/><rect x="521" y="534" width="1" height="1"/><rect x="561" y="341" width="1" height="1"/><rect x="741" y="537" width="1" height="1"/><rect x="861" y="602" width="1" height="1"/><rect x="520" y="160" width="1" height="1"/><rect x="1017" y="212" width="1" height="1"/><rect x="524" y="459" width="1" height="1"/><rect x="661" y="19" width="1" height="1"/><rect x="22" y="212" width="1" height="1"/><rect x="921" y="95" width="1" height="1"/><rect x="41" y="82" width="1" height="1"/><rect x="421" y="303" width="1" height="1"/><rect x="521" y="390" width="1" height="1"/><rect x="815" y="342" width="1" height="1"/><rect x="553" y="342" width="1" height="1"/><rect x="101" y="212" width="1" height="1"/><rect x="521" y="426" width="1" height="1"/><rect x="221" y="134" width="1" height="1"/><rect x="379" y="342" width="1" height="1"/><rect x="761" y="407" width="1" height="1"/><rect x="117" y="342" width="1" height="1"/><rect x="21" y="225" width="1" height="1"/><rect x="521" y="511" width="1" height="1"/><rect x="521" y="282" width="1" height="1"/><rect x="821" y="394" width="1" height="1"/><rect x="221" y="664" width="1" height="1"/><rect x="845" y="342" width="1" height="1"/><rect x="441" y="667" width="1" height="1"/><rect x="201" y="277" width="1" height="1"/><rect x="583" y="342" width="1" height="1"/><rect x="979" y="342" width="1" height="1"/><rect x="321" y="342" width="1" height="1"/><rect x="520" y="173" width="1" height="1"/><rect x="521" y="138" width="1" height="1"/><rect x="621" y="225" width="1" height="1"/><rect x="1020" y="459" width="1" height="1"/><rect x="921" y="108" width="1" height="1"/><rect x="121" y="433" width="1" height="1"/><rect x="409" y="342" width="1" height="1"/><rect x="421" y="316" width="1" height="1"/><rect x="515" y="472" width="1" height="1"/><rect x="522" y="368" width="1" height="1"/><rect x="921" y="602" width="1" height="1"/><rect x="301" y="665" width="1" height="1"/><rect x="221" y="147" width="1" height="1"/><rect x="401" y="343" width="1" height="1"/><rect x="621" y="346" width="1" height="1"/><rect x="721" y="433" width="1" height="1"/><rect x="613" y="342" width="1" height="1"/><rect x="1009" y="342" width="1" height="1"/><rect x="747" y="342" width="1" height="1"/><rect x="351" y="342" width="1" height="1"/><rect x="221" y="641" width="1" height="1"/><rect x="421" y="666" width="1" height="1"/><rect x="281" y="277" width="1" height="1"/><rect x="181" y="339" width="1" height="1"/><rect x="521" y="524" width="1" height="1"/><rect x="821" y="407" width="1" height="1"/><rect x="901" y="665" width="1" height="1"/><rect x="941" y="472" width="1" height="1"/><rect x="24" y="212" width="1" height="1"/><rect x="701" y="82" width="1" height="1"/><rect x="321" y="355" width="1" height="1"/><rect x="521" y="380" width="1" height="1"/><rect x="621" y="238" width="1" height="1"/><rect x="81" y="602" width="1" height="1"/><rect x="121" y="446" width="1" height="1"/><rect x="777" y="342" width="1" height="1"/><rect x="481" y="343" width="1" height="1"/><rect x="522" y="381" width="1" height="1"/><rect x="921" y="615" width="1" height="1"/><rect x="521" y="236" width="1" height="1"/><rect x="23" y="368" width="1" height="1"/><rect x="431" y="342" width="1" height="1"/><rect x="35" y="342" width="1" height="1"/><rect x="169" y="342" width="1" height="1"/><rect x="381" y="341" width="1" height="1"/><rect x="521" y="272" width="1" height="1"/><rect x="721" y="446" width="1" height="1"/><rect x="221" y="654" width="1" height="1"/><rect x="401" y="212" width="1" height="1"/><rect x="521" y="128" width="1" height="1"/><rect x="441" y="19" width="1" height="1"/><rect x="241" y="339" width="1" height="1"/><rect x="521" y="622" width="1" height="1"/><rect x="461" y="342" width="1" height="1"/><rect x="199" y="342" width="1" height="1"/><rect x="961" y="665" width="1" height="1"/><rect x="341" y="17" width="1" height="1"/><rect x="1001" y="472" width="1" height="1"/><rect x="881" y="147" width="1" height="1"/><rect x="518" y="95" width="1" height="1"/><rect x="1015" y="147" width="1" height="1"/><rect x="1018" y="381" width="1" height="1"/><rect x="521" y="478" width="1" height="1"/><rect x="23" y="381" width="1" height="1"/><rect x="621" y="336" width="1" height="1"/><rect x="518" y="589" width="1" height="1"/><rect x="841" y="339" width="1" height="1"/><rect x="261" y="667" width="1" height="1"/><rect x="799" y="342" width="1" height="1"/><rect x="521" y="514" width="1" height="1"/><rect x="421" y="18" width="1" height="1"/><rect x="229" y="342" width="1" height="1"/><rect x="363" y="342" width="1" height="1"/><rect x="521" y="370" width="1" height="1"/><rect x="921" y="340" width="1" height="1"/><rect x="524" y="524" width="1" height="1"/><rect x="161" y="472" width="1" height="1"/><rect x="22" y="277" width="1" height="1"/><rect x="41" y="147" width="1" height="1"/><rect x="829" y="342" width="1" height="1"/><rect x="521" y="226" width="1" height="1"/><rect x="581" y="277" width="1" height="1"/><rect x="821" y="338" width="1" height="1"/><rect x="567" y="342" width="1" height="1"/><rect x="101" y="277" width="1" height="1"/><rect x="1018" y="394" width="1" height="1"/><rect x="641" y="407" width="1" height="1"/><rect x="393" y="342" width="1" height="1"/><rect x="761" y="472" width="1" height="1"/><rect x="521" y="82" width="1" height="1"/><rect x="47" y="342" width="1" height="1"/><rect x="21" y="290" width="1" height="1"/><rect x="821" y="459" width="1" height="1"/><rect x="859" y="342" width="1" height="1"/><rect x="993" y="342" width="1" height="1"/><rect x="597" y="342" width="1" height="1"/><rect x="521" y="612" width="1" height="1"/><rect x="1001" y="17" width="1" height="1"/><rect x="1020" y="30" width="1" height="1"/><rect x="520" y="238" width="1" height="1"/><rect x="681" y="341" width="1" height="1"/><rect x="921" y="173" width="1" height="1"/><rect x="421" y="381" width="1" height="1"/><rect x="521" y="468" width="1" height="1"/><rect x="341" y="537" width="1" height="1"/><rect x="221" y="212" width="1" height="1"/><rect x="521" y="324" width="1" height="1"/><rect x="261" y="19" width="1" height="1"/><rect x="627" y="342" width="1" height="1"/><rect x="521" y="95" width="1" height="1"/><rect x="61" y="339" width="1" height="1"/><rect x="981" y="345" width="1" height="1"/><rect x="21" y="303" width="1" height="1"/><rect x="281" y="342" width="1" height="1"/><rect x="415" y="342" width="1" height="1"/><rect x="521" y="589" width="1" height="1"/><rect x="521" y="360" width="1" height="1"/><rect x="781" y="665" width="1" height="1"/><rect x="821" y="472" width="1" height="1"/><rect x="761" y="341" width="1" height="1"/><rect x="941" y="537" width="1" height="1"/><rect x="701" y="147" width="1" height="1"/><rect x="861" y="19" width="1" height="1"/><rect x="1020" y="43" width="1" height="1"/><rect x="321" y="420" width="1" height="1"/><rect x="520" y="251" width="1" height="1"/><rect x="521" y="216" width="1" height="1"/><rect x="621" y="303" width="1" height="1"/><rect x="661" y="339" width="1" height="1"/><rect x="921" y="186" width="1" height="1"/><rect x="121" y="511" width="1" height="1"/><rect x="421" y="394" width="1" height="1"/><rect x="522" y="446" width="1" height="1"/><rect x="445" y="342" width="1" height="1"/><rect x="49" y="342" width="1" height="1"/><rect x="521" y="72" width="1" height="1"/><rect x="41" y="667" width="1" height="1"/><rect x="183" y="342" width="1" height="1"/><rect x="141" y="345" width="1" height="1"/><rect x="221" y="225" width="1" height="1"/><rect x="721" y="511" width="1" height="1"/><rect x="519" y="147" width="1" height="1"/><rect x="521" y="602" width="1" height="1"/><rect x="401" y="277" width="1" height="1"/><rect x="475" y="342" width="1" height="1"/><rect x="221" y="346" width="1" height="1"/><rect x="461" y="407" width="1" height="1"/><rect x="321" y="433" width="1" height="1"/><rect x="213" y="342" width="1" height="1"/><rect x="521" y="458" width="1" height="1"/><rect x="347" y="342" width="1" height="1"/><rect x="621" y="316" width="1" height="1"/><rect x="1001" y="537" width="1" height="1"/><rect x="1020" y="550" width="1" height="1"/><rect x="881" y="212" width="1" height="1"/><rect x="518" y="160" width="1" height="1"/><rect x="1015" y="212" width="1" height="1"/><rect x="121" y="344" width="1" height="1"/><rect x="522" y="459" width="1" height="1"/><rect x="527" y="537" width="1" height="1"/><rect x="521" y="314" width="1" height="1"/><rect x="23" y="446" width="1" height="1"/><rect x="813" y="342" width="1" height="1"/><rect x="621" y="666" width="1" height="1"/><rect x="481" y="277" width="1" height="1"/><rect x="721" y="524" width="1" height="1"/><rect x="521" y="170" width="1" height="1"/><rect x="781" y="17" width="1" height="1"/><rect x="901" y="82" width="1" height="1"/><rect x="201" y="345" width="1" height="1"/><rect x="524" y="95" width="1" height="1"/><rect x="421" y="348" width="1" height="1"/><rect x="521" y="206" width="1" height="1"/><rect x="161" y="537" width="1" height="1"/><rect x="701" y="667" width="1" height="1"/><rect x="81" y="19" width="1" height="1"/><rect x="843" y="342" width="1" height="1"/><rect x="977" y="342" width="1" height="1"/><rect x="581" y="342" width="1" height="1"/><rect x="521" y="62" width="1" height="1"/><rect x="801" y="345" width="1" height="1"/><rect x="518" y="173" width="1" height="1"/><rect x="235" y="342" width="1" height="1"/><rect x="1018" y="459" width="1" height="1"/><rect x="521" y="556" width="1" height="1"/><rect x="641" y="472" width="1" height="1"/><rect x="23" y="459" width="1" height="1"/><rect x="761" y="537" width="1" height="1"/><rect x="821" y="30" width="1" height="1"/><rect x="281" y="345" width="1" height="1"/><rect x="181" y="407" width="1" height="1"/><rect x="521" y="592" width="1" height="1"/><rect x="873" y="342" width="1" height="1"/><rect x="1007" y="342" width="1" height="1"/><rect x="221" y="336" width="1" height="1"/><rect x="521" y="448" width="1" height="1"/><rect x="441" y="339" width="1" height="1"/><rect x="121" y="69" width="1" height="1"/><rect x="661" y="342" width="1" height="1"/><rect x="265" y="342" width="1" height="1"/><rect x="399" y="342" width="1" height="1"/><rect x="541" y="17" width="1" height="1"/><rect x="961" y="82" width="1" height="1"/><rect x="521" y="304" width="1" height="1"/><rect x="341" y="602" width="1" height="1"/><rect x="521" y="160" width="1" height="1"/><rect x="621" y="18" width="1" height="1"/><rect x="821" y="43" width="1" height="1"/><rect x="21" y="368" width="1" height="1"/><rect x="691" y="342" width="1" height="1"/><rect x="295" y="342" width="1" height="1"/><rect x="429" y="342" width="1" height="1"/><rect x="33" y="342" width="1" height="1"/><rect x="421" y="338" width="1" height="1"/><rect x="167" y="342" width="1" height="1"/><rect x="641" y="341" width="1" height="1"/><rect x="821" y="537" width="1" height="1"/><rect x="361" y="472" width="1" height="1"/><rect x="1020" y="108" width="1" height="1"/><rect x="121" y="82" width="1" height="1"/><rect x="520" y="316" width="1" height="1"/><rect x="621" y="368" width="1" height="1"/><rect x="521" y="52" width="1" height="1"/><rect x="895" y="342" width="1" height="1"/><rect x="921" y="251" width="1" height="1"/><rect x="121" y="576" width="1" height="1"/><rect x="421" y="459" width="1" height="1"/><rect x="521" y="546" width="1" height="1"/><rect x="522" y="511" width="1" height="1"/><rect x="459" y="342" width="1" height="1"/><rect x="841" y="407" width="1" height="1"/><rect x="63" y="342" width="1" height="1"/><rect x="601" y="17" width="1" height="1"/><rect x="821" y="20" width="1" height="1"/><rect x="721" y="82" width="1" height="1"/><rect x="221" y="290" width="1" height="1"/><rect x="521" y="402" width="1" height="1"/><rect x="521" y="173" width="1" height="1"/><rect x="21" y="381" width="1" height="1"/><rect x="519" y="212" width="1" height="1"/><rect x="521" y="438" width="1" height="1"/><rect x="821" y="550" width="1" height="1"/><rect x="797" y="342" width="1" height="1"/><rect x="1020" y="121" width="1" height="1"/><rect x="321" y="498" width="1" height="1"/><rect x="520" y="329" width="1" height="1"/><rect x="521" y="294" width="1" height="1"/><rect x="621" y="381" width="1" height="1"/><rect x="581" y="345" width="1" height="1"/><rect x="1001" y="602" width="1" height="1"/><rect x="1020" y="615" width="1" height="1"/><rect x="921" y="264" width="1" height="1"/><rect x="121" y="589" width="1" height="1"/><rect x="101" y="345" width="1" height="1"/><rect x="421" y="472" width="1" height="1"/><rect x="1015" y="277" width="1" height="1"/><rect x="522" y="524" width="1" height="1"/><rect x="541" y="537" width="1" height="1"/><rect x="527" y="602" width="1" height="1"/><rect x="301" y="147" width="1" height="1"/><rect x="521" y="150" width="1" height="1"/><rect x="721" y="95" width="1" height="1"/><rect x="827" y="342" width="1" height="1"/><rect x="221" y="303" width="1" height="1"/><rect x="261" y="339" width="1" height="1"/><rect x="481" y="342" width="1" height="1"/><rect x="721" y="589" width="1" height="1"/><rect x="219" y="342" width="1" height="1"/><rect x="981" y="665" width="1" height="1"/><rect x="361" y="17" width="1" height="1"/><rect x="781" y="82" width="1" height="1"/><rect x="901" y="147" width="1" height="1"/><rect x="524" y="160" width="1" height="1"/><rect x="861" y="339" width="1" height="1"/><rect x="321" y="511" width="1" height="1"/><rect x="521" y="536" width="1" height="1"/><rect x="561" y="343" width="1" height="1"/><rect x="1018" y="30" width="1" height="1"/><rect x="1020" y="628" width="1" height="1"/><rect x="525" y="277" width="1" height="1"/><rect x="907" y="342" width="1" height="1"/><rect x="511" y="342" width="1" height="1"/><rect x="23" y="30" width="1" height="1"/><rect x="518" y="238" width="1" height="1"/><rect x="645" y="342" width="1" height="1"/><rect x="249" y="342" width="1" height="1"/><rect x="461" y="341" width="1" height="1"/><rect x="521" y="392" width="1" height="1"/><rect x="23" y="524" width="1" height="1"/><rect x="61" y="407" width="1" height="1"/><rect x="141" y="665" width="1" height="1"/><rect x="181" y="472" width="1" height="1"/><rect x="601" y="537" width="1" height="1"/><rect x="721" y="602" width="1" height="1"/><rect x="521" y="248" width="1" height="1"/><rect x="849" y="342" width="1" height="1"/><rect x="524" y="173" width="1" height="1"/><rect x="937" y="342" width="1" height="1"/><rect x="675" y="342" width="1" height="1"/><rect x="279" y="342" width="1" height="1"/><rect x="661" y="407" width="1" height="1"/><rect x="521" y="284" width="1" height="1"/><rect x="413" y="342" width="1" height="1"/><rect x="221" y="666" width="1" height="1"/><rect x="961" y="147" width="1" height="1"/><rect x="321" y="344" width="1" height="1"/><rect x="1018" y="43" width="1" height="1"/><rect x="521" y="140" width="1" height="1"/><rect x="518" y="251" width="1" height="1"/><rect x="879" y="342" width="1" height="1"/><rect x="521" y="634" width="1" height="1"/><rect x="821" y="108" width="1" height="1"/><rect x="705" y="342" width="1" height="1"/><rect x="443" y="342" width="1" height="1"/><rect x="401" y="345" width="1" height="1"/><rect x="97" y="342" width="1" height="1"/><rect x="621" y="348" width="1" height="1"/><rect x="201" y="665" width="1" height="1"/><rect x="241" y="472" width="1" height="1"/><rect x="181" y="341" width="1" height="1"/><rect x="361" y="537" width="1" height="1"/><rect x="521" y="526" width="1" height="1"/><rect x="517" y="147" width="1" height="1"/><rect x="121" y="147" width="1" height="1"/><rect x="781" y="602" width="1" height="1"/><rect x="520" y="381" width="1" height="1"/><rect x="421" y="30" width="1" height="1"/><rect x="909" y="342" width="1" height="1"/><rect x="901" y="667" width="1" height="1"/><rect x="81" y="339" width="1" height="1"/><rect x="421" y="524" width="1" height="1"/><rect x="521" y="382" width="1" height="1"/><rect x="801" y="665" width="1" height="1"/><rect x="841" y="472" width="1" height="1"/><rect x="601" y="82" width="1" height="1"/><rect x="127" y="342" width="1" height="1"/><rect x="1018" y="550" width="1" height="1"/><rect x="141" y="17" width="1" height="1"/><rect x="521" y="238" width="1" height="1"/><rect x="281" y="665" width="1" height="1"/><rect x="821" y="121" width="1" height="1"/><rect x="21" y="446" width="1" height="1"/><rect x="677" y="342" width="1" height="1"/><rect x="381" y="343" width="1" height="1"/><rect x="821" y="615" width="1" height="1"/><rect x="321" y="69" width="1" height="1"/><rect x="331" y="342" width="1" height="1"/><rect x="521" y="94" width="1" height="1"/><rect x="861" y="342" width="1" height="1"/><rect x="465" y="342" width="1" height="1"/><rect x="1020" y="186" width="1" height="1"/><rect x="121" y="160" width="1" height="1"/><rect x="520" y="394" width="1" height="1"/><rect x="621" y="446" width="1" height="1"/><rect x="521" y="130" width="1" height="1"/><rect x="522" y="95" width="1" height="1"/><rect x="921" y="329" width="1" height="1"/><rect x="121" y="654" width="1" height="1"/><rect x="241" y="341" width="1" height="1"/><rect x="421" y="537" width="1" height="1"/><rect x="521" y="624" width="1" height="1"/><rect x="522" y="589" width="1" height="1"/><rect x="541" y="602" width="1" height="1"/><rect x="301" y="212" width="1" height="1"/><rect x="961" y="667" width="1" height="1"/><rect x="341" y="19" width="1" height="1"/><rect x="721" y="160" width="1" height="1"/><rect x="757" y="342" width="1" height="1"/><rect x="221" y="368" width="1" height="1"/><rect x="891" y="342" width="1" height="1"/><rect x="495" y="342" width="1" height="1"/><rect x="521" y="480" width="1" height="1"/><rect x="233" y="342" width="1" height="1"/><rect x="521" y="251" width="1" height="1"/><rect x="621" y="338" width="1" height="1"/><rect x="841" y="341" width="1" height="1"/><rect x="21" y="459" width="1" height="1"/><rect x="26" y="537" width="1" height="1"/><rect x="521" y="516" width="1" height="1"/><rect x="941" y="19" width="1" height="1"/><rect x="821" y="628" width="1" height="1"/><rect x="201" y="17" width="1" height="1"/><rect x="421" y="20" width="1" height="1"/><rect x="321" y="82" width="1" height="1"/><rect x="321" y="576" width="1" height="1"/><rect x="381" y="212" width="1" height="1"/><rect x="521" y="372" width="1" height="1"/><rect x="621" y="459" width="1" height="1"/><rect x="1018" y="95" width="1" height="1"/><rect x="921" y="342" width="1" height="1"/><rect x="525" y="342" width="1" height="1"/><rect x="23" y="95" width="1" height="1"/><rect x="659" y="342" width="1" height="1"/><rect x="263" y="342" width="1" height="1"/><rect x="518" y="303" width="1" height="1"/><rect x="801" y="17" width="1" height="1"/><rect x="51" y="342" width="1" height="1"/><rect x="521" y="228" width="1" height="1"/><rect x="821" y="340" width="1" height="1"/><rect x="61" y="472" width="1" height="1"/><rect x="721" y="173" width="1" height="1"/><rect x="181" y="537" width="1" height="1"/><rect x="221" y="381" width="1" height="1"/><rect x="601" y="602" width="1" height="1"/><rect x="863" y="342" width="1" height="1"/><rect x="521" y="84" width="1" height="1"/><rect x="524" y="238" width="1" height="1"/><rect x="689" y="342" width="1" height="1"/><rect x="81" y="342" width="1" height="1"/><rect x="321" y="589" width="1" height="1"/><rect x="521" y="614" width="1" height="1"/><rect x="1001" y="19" width="1" height="1"/><rect x="581" y="665" width="1" height="1"/><rect x="1018" y="108" width="1" height="1"/><rect x="101" y="665" width="1" height="1"/><rect x="501" y="147" width="1" height="1"/><rect x="681" y="343" width="1" height="1"/><rect x="23" y="108" width="1" height="1"/><rect x="518" y="316" width="1" height="1"/><rect x="893" y="342" width="1" height="1"/><rect x="631" y="342" width="1" height="1"/><rect x="521" y="470" width="1" height="1"/><rect x="561" y="277" width="1" height="1"/><rect x="285" y="342" width="1" height="1"/><rect x="981" y="82" width="1" height="1"/><rect x="111" y="342" width="1" height="1"/><rect x="521" y="326" width="1" height="1"/><rect x="61" y="341" width="1" height="1"/><rect x="241" y="537" width="1" height="1"/><rect x="524" y="251" width="1" height="1"/><rect x="361" y="602" width="1" height="1"/><rect x="517" y="212" width="1" height="1"/><rect x="521" y="362" width="1" height="1"/><rect x="781" y="667" width="1" height="1"/><rect x="161" y="19" width="1" height="1"/><rect x="923" y="342" width="1" height="1"/><rect x="421" y="95" width="1" height="1"/><rect x="761" y="343" width="1" height="1"/><rect x="577" y="342" width="1" height="1"/><rect x="711" y="342" width="1" height="1"/><rect x="315" y="342" width="1" height="1"/><rect x="521" y="218" width="1" height="1"/><rect x="661" y="341" width="1" height="1"/><rect x="523" y="407" width="1" height="1"/><rect x="1018" y="615" width="1" height="1"/><rect x="261" y="407" width="1" height="1"/><rect x="23" y="615" width="1" height="1"/><rect x="141" y="82" width="1" height="1"/><rect x="521" y="74" width="1" height="1"/><rect x="821" y="186" width="1" height="1"/><rect x="681" y="212" width="1" height="1"/><rect x="521" y="568" width="1" height="1"/><rect x="741" y="342" width="1" height="1"/><rect x="345" y="342" width="1" height="1"/><rect x="479" y="342" width="1" height="1"/><rect x="861" y="407" width="1" height="1"/><rect x="1020" y="251" width="1" height="1"/><rect x="521" y="604" width="1" height="1"/><rect x="1019" y="472" width="1" height="1"/><rect x="121" y="225" width="1" height="1"/><rect x="520" y="459" width="1" height="1"/><rect x="421" y="108" width="1" height="1"/><rect x="522" y="160" width="1" height="1"/><rect x="921" y="394" width="1" height="1"/><rect x="421" y="602" width="1" height="1"/><rect x="321" y="664" width="1" height="1"/><rect x="221" y="348" width="1" height="1"/><rect x="521" y="460" width="1" height="1"/><rect x="1018" y="628" width="1" height="1"/><rect x="121" y="346" width="1" height="1"/><rect x="21" y="30" width="1" height="1"/><rect x="221" y="433" width="1" height="1"/><rect x="509" y="342" width="1" height="1"/><rect x="643" y="342" width="1" height="1"/><rect x="247" y="342" width="1" height="1"/><rect x="521" y="316" width="1" height="1"/><rect x="821" y="199" width="1" height="1"/><rect x="21" y="524" width="1" height="1"/><rect x="26" y="602" width="1" height="1"/><rect x="401" y="665" width="1" height="1"/><rect x="441" y="472" width="1" height="1"/><rect x="201" y="82" width="1" height="1"/><rect x="321" y="147" width="1" height="1"/><rect x="521" y="172" width="1" height="1"/><rect x="621" y="30" width="1" height="1"/><rect x="1020" y="264" width="1" height="1"/><rect x="121" y="238" width="1" height="1"/><rect x="381" y="277" width="1" height="1"/><rect x="621" y="524" width="1" height="1"/><rect x="515" y="277" width="1" height="1"/><rect x="522" y="173" width="1" height="1"/><rect x="539" y="342" width="1" height="1"/><rect x="921" y="407" width="1" height="1"/><rect x="525" y="407" width="1" height="1"/><rect x="23" y="160" width="1" height="1"/><rect x="421" y="615" width="1" height="1"/><rect x="801" y="82" width="1" height="1"/><rect x="327" y="342" width="1" height="1"/><rect x="65" y="342" width="1" height="1"/><rect x="521" y="64" width="1" height="1"/><rect x="721" y="238" width="1" height="1"/><rect x="221" y="446" width="1" height="1"/><rect x="601" y="667" width="1" height="1"/><rect x="521" y="558" width="1" height="1"/><rect x="521" y="329" width="1" height="1"/><rect x="877" y="342" width="1" height="1"/><rect x="141" y="602" width="1" height="1"/><rect x="521" y="414" width="1" height="1"/><rect x="321" y="160" width="1" height="1"/><rect x="357" y="342" width="1" height="1"/><rect x="95" y="342" width="1" height="1"/><rect x="81" y="407" width="1" height="1"/><rect x="321" y="654" width="1" height="1"/><rect x="521" y="450" width="1" height="1"/><rect x="621" y="537" width="1" height="1"/><rect x="1018" y="173" width="1" height="1"/><rect x="501" y="212" width="1" height="1"/><rect x="23" y="173" width="1" height="1"/><rect x="518" y="381" width="1" height="1"/><rect x="541" y="19" width="1" height="1"/><rect x="121" y="336" width="1" height="1"/><rect x="341" y="339" width="1" height="1"/><rect x="957" y="342" width="1" height="1"/><rect x="561" y="342" width="1" height="1"/><rect x="521" y="306" width="1" height="1"/><rect x="695" y="342" width="1" height="1"/><rect x="299" y="342" width="1" height="1"/><rect x="981" y="147" width="1" height="1"/><rect x="125" y="342" width="1" height="1"/><rect x="521" y="162" width="1" height="1"/><rect x="721" y="336" width="1" height="1"/><rect x="621" y="20" width="1" height="1"/><rect x="941" y="339" width="1" height="1"/><rect x="524" y="316" width="1" height="1"/><rect x="421" y="340" width="1" height="1"/><rect x="461" y="147" width="1" height="1"/><rect x="641" y="343" width="1" height="1"/><rect x="521" y="18" width="1" height="1"/><rect x="201" y="602" width="1" height="1"/><rect x="987" y="342" width="1" height="1"/><rect x="725" y="342" width="1" height="1"/><rect x="329" y="342" width="1" height="1"/><rect x="463" y="342" width="1" height="1"/><rect x="67" y="342" width="1" height="1"/><rect x="921" y="662" width="1" height="1"/><rect x="1018" y="186" width="1" height="1"/><rect x="518" y="394" width="1" height="1"/><rect x="523" y="472" width="1" height="1"/><rect x="261" y="472" width="1" height="1"/><rect x="521" y="548" width="1" height="1"/><rect x="801" y="602" width="1" height="1"/><rect x="601" y="19" width="1" height="1"/><rect x="681" y="277" width="1" height="1"/><rect x="821" y="22" width="1" height="1"/><rect x="521" y="404" width="1" height="1"/><rect x="755" y="342" width="1" height="1"/><rect x="359" y="342" width="1" height="1"/><rect x="741" y="407" width="1" height="1"/><rect x="493" y="342" width="1" height="1"/><rect x="861" y="472" width="1" height="1"/><rect x="520" y="30" width="1" height="1"/><rect x="1017" y="82" width="1" height="1"/><rect x="524" y="329" width="1" height="1"/><rect x="22" y="82" width="1" height="1"/><rect x="147" y="342" width="1" height="1"/><rect x="1019" y="537" width="1" height="1"/><rect x="24" y="537" width="1" height="1"/><rect x="421" y="173" width="1" height="1"/><rect x="521" y="260" width="1" height="1"/><rect x="1001" y="339" width="1" height="1"/><rect x="101" y="82" width="1" height="1"/><rect x="521" y="296" width="1" height="1"/><rect x="641" y="212" width="1" height="1"/><rect x="761" y="277" width="1" height="1"/><rect x="21" y="95" width="1" height="1"/><rect x="177" y="342" width="1" height="1"/><rect x="521" y="152" width="1" height="1"/><rect x="821" y="264" width="1" height="1"/><rect x="261" y="341" width="1" height="1"/><rect x="441" y="537" width="1" height="1"/><rect x="521" y="646" width="1" height="1"/><rect x="981" y="667" width="1" height="1"/><rect x="520" y="43" width="1" height="1"/><rect x="361" y="19" width="1" height="1"/><rect x="621" y="95" width="1" height="1"/><rect x="1020" y="329" width="1" height="1"/><rect x="121" y="303" width="1" height="1"/><rect x="421" y="186" width="1" height="1"/><rect x="515" y="342" width="1" height="1"/><rect x="522" y="238" width="1" height="1"/><rect x="921" y="472" width="1" height="1"/><rect x="861" y="341" width="1" height="1"/><rect x="521" y="538" width="1" height="1"/><rect x="79" y="342" width="1" height="1"/><rect x="561" y="345" width="1" height="1"/><rect x="721" y="303" width="1" height="1"/><rect x="221" y="511" width="1" height="1"/><rect x="281" y="147" width="1" height="1"/><rect x="461" y="343" width="1" height="1"/><rect x="521" y="394" width="1" height="1"/><rect x="821" y="277" width="1" height="1"/><rect x="807" y="342" width="1" height="1"/><rect x="941" y="342" width="1" height="1"/><rect x="545" y="342" width="1" height="1"/><rect x="141" y="667" width="1" height="1"/><rect x="283" y="342" width="1" height="1"/><rect x="321" y="225" width="1" height="1"/><rect x="521" y="250" width="1" height="1"/><rect x="621" y="108" width="1" height="1"/><rect x="109" y="342" width="1" height="1"/><rect x="121" y="316" width="1" height="1"/><rect x="520" y="550" width="1" height="1"/><rect x="1017" y="602" width="1" height="1"/><rect x="621" y="602" width="1" height="1"/><rect x="522" y="251" width="1" height="1"/><rect x="921" y="485" width="1" height="1"/><rect x="521" y="106" width="1" height="1"/><rect x="23" y="238" width="1" height="1"/><rect x="971" y="342" width="1" height="1"/><rect x="575" y="342" width="1" height="1"/><rect x="321" y="346" width="1" height="1"/><rect x="709" y="342" width="1" height="1"/><rect x="313" y="342" width="1" height="1"/><rect x="521" y="142" width="1" height="1"/><rect x="721" y="316" width="1" height="1"/><rect x="121" y="666" width="1" height="1"/><rect x="221" y="524" width="1" height="1"/><rect x="521" y="636" width="1" height="1"/><rect x="521" y="407" width="1" height="1"/><rect x="401" y="82" width="1" height="1"/><rect x="521" y="492" width="1" height="1"/><rect x="461" y="212" width="1" height="1"/><rect x="321" y="238" width="1" height="1"/><rect x="781" y="339" width="1" height="1"/><rect x="1001" y="342" width="1" height="1"/><rect x="201" y="667" width="1" height="1"/><rect x="739" y="342" width="1" height="1"/><rect x="343" y="342" width="1" height="1"/><rect x="181" y="343" width="1" height="1"/><rect x="881" y="17" width="1" height="1"/><rect x="521" y="528" width="1" height="1"/><rect x="621" y="615" width="1" height="1"/><rect x="1018" y="251" width="1" height="1"/><rect x="131" y="342" width="1" height="1"/><rect x="23" y="251" width="1" height="1"/><rect x="518" y="459" width="1" height="1"/><rect x="81" y="341" width="1" height="1"/><rect x="521" y="384" width="1" height="1"/><rect x="801" y="667" width="1" height="1"/><rect x="769" y="342" width="1" height="1"/><rect x="141" y="19" width="1" height="1"/><rect x="521" y="240" width="1" height="1"/><rect x="423" y="342" width="1" height="1"/><rect x="524" y="394" width="1" height="1"/><rect x="161" y="342" width="1" height="1"/><rect x="22" y="147" width="1" height="1"/><rect x="381" y="345" width="1" height="1"/><rect x="24" y="602" width="1" height="1"/><rect x="41" y="17" width="1" height="1"/><rect x="701" y="472" width="1" height="1"/><rect x="521" y="96" width="1" height="1"/><rect x="581" y="147" width="1" height="1"/><rect x="101" y="147" width="1" height="1"/><rect x="321" y="336" width="1" height="1"/><rect x="1018" y="264" width="1" height="1"/><rect x="641" y="277" width="1" height="1"/><rect x="541" y="339" width="1" height="1"/><rect x="761" y="342" width="1" height="1"/><rect x="521" y="626" width="1" height="1"/><rect x="21" y="160" width="1" height="1"/><rect x="121" y="18" width="1" height="1"/><rect x="191" y="342" width="1" height="1"/><rect x="521" y="482" width="1" height="1"/><rect x="621" y="340" width="1" height="1"/><rect x="841" y="343" width="1" height="1"/><rect x="520" y="108" width="1" height="1"/><rect x="721" y="18" width="1" height="1"/><rect x="921" y="43" width="1" height="1"/><rect x="791" y="342" width="1" height="1"/><rect x="925" y="342" width="1" height="1"/><rect x="529" y="342" width="1" height="1"/><rect x="421" y="251" width="1" height="1"/><rect x="521" y="338" width="1" height="1"/><rect x="421" y="22" width="1" height="1"/><rect x="741" y="341" width="1" height="1"/><rect x="341" y="407" width="1" height="1"/><rect x="521" y="374" width="1" height="1"/><rect x="221" y="82" width="1" height="1"/><rect x="881" y="537" width="1" height="1"/><rect x="801" y="19" width="1" height="1"/><rect x="21" y="173" width="1" height="1"/><rect x="281" y="212" width="1" height="1"/><rect x="521" y="459" width="1" height="1"/><rect x="601" y="339" width="1" height="1"/><rect x="521" y="230" width="1" height="1"/><rect x="821" y="342" width="1" height="1"/><rect x="955" y="342" width="1" height="1"/><rect x="559" y="342" width="1" height="1"/><rect x="941" y="407" width="1" height="1"/><rect x="297" y="342" width="1" height="1"/><rect x="701" y="17" width="1" height="1"/><rect x="520" y="121" width="1" height="1"/><rect x="521" y="86" width="1" height="1"/><rect x="621" y="173" width="1" height="1"/><rect x="921" y="56" width="1" height="1"/><rect x="121" y="381" width="1" height="1"/><rect x="520" y="615" width="1" height="1"/><rect x="421" y="264" width="1" height="1"/><rect x="522" y="316" width="1" height="1"/><rect x="921" y="550" width="1" height="1"/><rect x="41" y="537" width="1" height="1"/><rect x="521" y="616" width="1" height="1"/><rect x="985" y="342" width="1" height="1"/><rect x="589" y="342" width="1" height="1"/><rect x="723" y="342" width="1" height="1"/><rect x="221" y="95" width="1" height="1"/><rect x="101" y="667" width="1" height="1"/><rect x="721" y="381" width="1" height="1"/><rect x="243" y="342" width="1" height="1"/><rect x="681" y="345" width="1" height="1"/><rect x="377" y="342" width="1" height="1"/><rect x="221" y="589" width="1" height="1"/><rect x="521" y="472" width="1" height="1"/><rect x="821" y="355" width="1" height="1"/><rect x="401" y="147" width="1" height="1"/><rect x="461" y="277" width="1" height="1"/><rect x="321" y="303" width="1" height="1"/><rect x="361" y="339" width="1" height="1"/><rect x="521" y="328" width="1" height="1"/><rect x="621" y="186" width="1" height="1"/><rect x="1001" y="407" width="1" height="1"/><rect x="1020" y="420" width="1" height="1"/><rect x="61" y="343" width="1" height="1"/><rect x="121" y="394" width="1" height="1"/><rect x="518" y="30" width="1" height="1"/><rect x="520" y="628" width="1" height="1"/><rect x="1015" y="82" width="1" height="1"/><rect x="407" y="342" width="1" height="1"/><rect x="522" y="329" width="1" height="1"/><rect x="145" y="342" width="1" height="1"/><rect x="921" y="563" width="1" height="1"/><rect x="527" y="407" width="1" height="1"/><rect x="521" y="184" width="1" height="1"/><rect x="23" y="316" width="1" height="1"/><rect x="561" y="665" width="1" height="1"/><rect x="521" y="220" width="1" height="1"/><rect x="481" y="147" width="1" height="1"/><rect x="661" y="343" width="1" height="1"/><rect x="721" y="394" width="1" height="1"/><rect x="221" y="602" width="1" height="1"/><rect x="745" y="342" width="1" height="1"/><rect x="521" y="76" width="1" height="1"/><rect x="175" y="342" width="1" height="1"/><rect x="161" y="407" width="1" height="1"/><rect x="521" y="570" width="1" height="1"/><rect x="321" y="316" width="1" height="1"/><rect x="701" y="537" width="1" height="1"/><rect x="581" y="212" width="1" height="1"/><rect x="518" y="43" width="1" height="1"/><rect x="521" y="606" width="1" height="1"/><rect x="1018" y="329" width="1" height="1"/><rect x="641" y="342" width="1" height="1"/><rect x="23" y="329" width="1" height="1"/><rect x="775" y="342" width="1" height="1"/><rect x="61" y="212" width="1" height="1"/><rect x="321" y="666" width="1" height="1"/><rect x="181" y="277" width="1" height="1"/><rect x="521" y="462" width="1" height="1"/><rect x="205" y="342" width="1" height="1"/><rect x="121" y="348" width="1" height="1"/><rect x="521" y="318" width="1" height="1"/><rect x="519" y="537" width="1" height="1"/><rect x="661" y="212" width="1" height="1"/><rect x="805" y="342" width="1" height="1"/><rect x="401" y="667" width="1" height="1"/><rect x="939" y="342" width="1" height="1"/><rect x="543" y="342" width="1" height="1"/><rect x="501" y="345" width="1" height="1"/><rect x="521" y="174" width="1" height="1"/><rect x="197" y="342" width="1" height="1"/><rect x="721" y="348" width="1" height="1"/><rect x="341" y="472" width="1" height="1"/><rect x="881" y="602" width="1" height="1"/><rect x="518" y="550" width="1" height="1"/><rect x="1015" y="602" width="1" height="1"/><rect x="521" y="30" width="1" height="1"/><rect x="21" y="238" width="1" height="1"/><rect x="521" y="66" width="1" height="1"/><rect x="969" y="342" width="1" height="1"/><rect x="241" y="277" width="1" height="1"/><rect x="623" y="342" width="1" height="1"/><rect x="227" y="342" width="1" height="1"/><rect x="141" y="339" width="1" height="1"/><rect x="521" y="560" width="1" height="1"/><rect x="361" y="342" width="1" height="1"/><rect x="520" y="186" width="1" height="1"/><rect x="524" y="485" width="1" height="1"/><rect x="381" y="665" width="1" height="1"/><rect x="921" y="121" width="1" height="1"/><rect x="421" y="329" width="1" height="1"/><rect x="521" y="416" width="1" height="1"/><rect x="841" y="277" width="1" height="1"/><rect x="41" y="602" width="1" height="1"/><rect x="521" y="452" width="1" height="1"/><rect x="221" y="160" width="1" height="1"/><rect x="653" y="342" width="1" height="1"/><rect x="321" y="18" width="1" height="1"/><rect x="521" y="43" width="1" height="1"/><rect x="391" y="342" width="1" height="1"/><rect x="129" y="342" width="1" height="1"/><rect x="21" y="251" width="1" height="1"/><rect x="519" y="82" width="1" height="1"/><rect x="121" y="338" width="1" height="1"/><rect x="341" y="341" width="1" height="1"/><rect x="521" y="537" width="1" height="1"/><rect x="521" y="308" width="1" height="1"/><rect x="821" y="420" width="1" height="1"/><rect x="857" y="342" width="1" height="1"/><rect x="321" y="368" width="1" height="1"/><rect x="991" y="342" width="1" height="1"/><rect x="595" y="342" width="1" height="1"/><rect x="520" y="199" width="1" height="1"/><rect x="521" y="164" width="1" height="1"/><rect x="621" y="251" width="1" height="1"/><rect x="721" y="338" width="1" height="1"/><rect x="1020" y="485" width="1" height="1"/><rect x="921" y="134" width="1" height="1"/><rect x="121" y="459" width="1" height="1"/><rect x="941" y="341" width="1" height="1"/><rect x="201" y="339" width="1" height="1"/><rect x="521" y="658" width="1" height="1"/><rect x="421" y="342" width="1" height="1"/><rect x="25" y="342" width="1" height="1"/><rect x="522" y="394" width="1" height="1"/><rect x="159" y="342" width="1" height="1"/><rect x="541" y="407" width="1" height="1"/><rect x="641" y="345" width="1" height="1"/><rect x="921" y="628" width="1" height="1"/><rect x="527" y="472" width="1" height="1"/><rect x="301" y="17" width="1" height="1"/><rect x="521" y="20" width="1" height="1"/><rect x="221" y="173" width="1" height="1"/><rect x="481" y="212" width="1" height="1"/><rect x="721" y="459" width="1" height="1"/><rect x="801" y="339" width="1" height="1"/><rect x="625" y="342" width="1" height="1"/><rect x="759" y="342" width="1" height="1"/><rect x="521" y="550" width="1" height="1"/><rect x="901" y="17" width="1" height="1"/><rect x="821" y="662" width="1" height="1"/><rect x="524" y="30" width="1" height="1"/><rect x="821" y="433" width="1" height="1"/><rect x="321" y="381" width="1" height="1"/><rect x="521" y="406" width="1" height="1"/><rect x="701" y="602" width="1" height="1"/><rect x="621" y="264" width="1" height="1"/><rect x="1020" y="498" width="1" height="1"/><rect x="121" y="472" width="1" height="1"/><rect x="525" y="147" width="1" height="1"/><rect x="518" y="108" width="1" height="1"/><rect x="921" y="641" width="1" height="1"/><rect x="789" y="342" width="1" height="1"/><rect x="521" y="262" width="1" height="1"/><rect x="23" y="394" width="1" height="1"/><rect x="1001" y="341" width="1" height="1"/><rect x="61" y="277" width="1" height="1"/><rect x="181" y="342" width="1" height="1"/><rect x="601" y="407" width="1" height="1"/><rect x="681" y="665" width="1" height="1"/><rect x="721" y="472" width="1" height="1"/><rect x="521" y="118" width="1" height="1"/><rect x="524" y="43" width="1" height="1"/><rect x="519" y="602" width="1" height="1"/><rect x="521" y="154" width="1" height="1"/><rect x="661" y="277" width="1" height="1"/><rect x="819" y="342" width="1" height="1"/><rect x="261" y="343" width="1" height="1"/><rect x="521" y="648" width="1" height="1"/><rect x="961" y="17" width="1" height="1"/><rect x="473" y="342" width="1" height="1"/><rect x="607" y="342" width="1" height="1"/><rect x="211" y="342" width="1" height="1"/><rect x="518" y="121" width="1" height="1"/><rect x="161" y="341" width="1" height="1"/><rect x="521" y="504" width="1" height="1"/><rect x="881" y="667" width="1" height="1"/><rect x="561" y="82" width="1" height="1"/><rect x="518" y="615" width="1" height="1"/><rect x="861" y="343" width="1" height="1"/><rect x="301" y="537" width="1" height="1"/><rect x="521" y="540" width="1" height="1"/><rect x="811" y="342" width="1" height="1"/><rect x="637" y="342" width="1" height="1"/><rect x="241" y="342" width="1" height="1"/><rect x="375" y="342" width="1" height="1"/><rect x="461" y="345" width="1" height="1"/><rect x="361" y="407" width="1" height="1"/><rect x="521" y="396" width="1" height="1"/><rect x="781" y="472" width="1" height="1"/><rect x="901" y="537" width="1" height="1"/><rect x="524" y="550" width="1" height="1"/><rect x="521" y="252" width="1" height="1"/><rect x="841" y="342" width="1" height="1"/><rect x="579" y="342" width="1" height="1"/><rect x="1018" y="420" width="1" height="1"/><rect x="667" y="342" width="1" height="1"/><rect x="518" y="628" width="1" height="1"/><rect x="405" y="342" width="1" height="1"/><rect x="521" y="108" width="1" height="1"/><rect x="21" y="316" width="1" height="1"/><rect x="321" y="348" width="1" height="1"/><rect x="821" y="485" width="1" height="1"/><rect x="741" y="147" width="1" height="1"/><rect x="861" y="212" width="1" height="1"/><rect x="521" y="638" width="1" height="1"/><rect x="871" y="342" width="1" height="1"/><rect x="1005" y="342" width="1" height="1"/><rect x="609" y="342" width="1" height="1"/></g><g shape-rendering="crispEdges" fill="#a000a0"><rect x="489" y="17" width="1" height="651" fill="#a000a0"/><rect x="511" y="17" width="1" height="651" fill="#a000a0"/><rect x="23" y="443" width="4" height="1"/><rect x="31" y="443" width="4" height="1"/><rect x="39" y="443" width="4" height="1"/><rect x="47" y="443" width="4" height="1"/><rect x="55" y="443" width="4" height="1"/><rect x="63" y="443" width="4" height="1"/><rect x="71" y="443" width="4" height="1"/><rect x="79" y="443" width="4" height="1"/><rect x="87" y="443" width="4" height="1"/><rect x="95" y="443" width="4" height="1"/><rect x="103" y="443" width="4" height="1"/><rect x="111" y="443" width="4" height="1"/><rect x="119" y="443" width="4" height="1"/><rect x="127" y="443" width="4" height="1"/><rect x="135" y="443" width="4" height="1"/><rect x="143" y="443" width="4" height="1"/><rect x="151" y="443" width="4" height="1"/><rect x="159" y="443" width="4" height="1"/><rect x="167" y="443" width="4" height="1"/><rect x="175" y="443" width="4" height="1"/><rect x="183" y="443" width="4" height="1"/><rect x="191" y="443" width="4" height="1"/><rect x="199" y="443" width="4" height="1"/><rect x="207" y="443" width="4" height="1"/><rect x="215" y="443" width="4" height="1"/><rect x="223" y="443" width="4" height="1"/><rect x="231" y="443" width="4" height="1"/><rect x="239" y="443" width="4" height="1"/><rect x="247" y="443" width="4" height="1"/><rect x="255" y="443" width="4" height="1"/><rect x="263" y="443" width="4" height="1"/><rect x="271" y="443" width="4" height="1"/><rect x="279" y="443" width="4" height="1"/><rect x="287" y="443" width="4" height="1"/><rect x="295" y="443" width="4" height="1"/><rect x="303" y="443" width="4" height="1"/><rect x="311" y="443" width="4" height="1"/><rect x="319" y="443" width="4" height="1"/><rect x="327" y="443" width="4" height="1"/><rect x="335" y="443" width="4" height="1"/><rect x="343" y="443" width="4" height="1"/><rect x="351" y="443" width="4" height="1"/><rect x="359" y="443" width="4" height="1"/><rect x="367" y="443" width="4" height="1"/><rect x="375" y="443" width="4" height="1"/><rect x="383" y="443" width="4" height="1"/><rect x="391" y="443" width="4" height="1"/><rect x="399" y="443" width="4" height="1"/><rect x="407" y="443" width="4" height="1"/><rect x="415" y="443" width="4" height="1"/><rect x="423" y="443" width="4" height="1"/><rect x="431" y="443" width="4" height="1"/><rect x="439" y="443" width="4" height="1"/><rect x="447" y="443" width="4" height="1"/><rect x="455" y="443" width="4" height="1"/><rect x="463" y="443" width="4" height="1"/><rect x="471" y="443" width="4" height="1"/><rect x="479" y="443" width="4" height="1"/><rect x="487" y="443" width="4" height="1"/><rect x="495" y="443" width="4" height="1"/><rect x="503" y="443" width="4" height="1"/><rect x="511" y="443" width="4" height="1"/><rect x="519" y="443" width="4" height="1"/><rect x="527" y="443" width="4" height="1"/><rect x="535" y="443" width="4" height="1"/><rect x="543" y="443" width="4" height="1"/><rect x="551" y="443" width="4" height="1"/><rect x="559" y="443" width="4" height="1"/><rect x="567" y="443" width="4" height="1"/><rect x="575" y="443" width="4" height="1"/><rect x="583" y="443" width="4" height="1"/><rect x="591" y="443" width="4" height="1"/><rect x="599" y="443" width="4" height="1"/><rect x="607" y="443" width="4" height="1"/><rect x="615" y="443" width="4" height="1"/><rect x="623" y="443" width="4" height="1"/><rect x="631" y="443" width="4" height="1"/><rect x="639" y="443" width="4" height="1"/><rect x="647" y="443" width="4" height="1"/><rect x="655" y="443" width="4" height="1"/><rect x="663" y="443" width="4" height="1"/><rect x="671" y="443" width="4" height="1"/><rect x="679" y="443" width="4" height="1"/><rect x="687" y="443" width="4" height="1"/><rect x="695" y="443" width="4" height="1"/><rect x="703" y="443" width="4" height="1"/><rect x="711" y="443" width="4" height="1"/><rect x="719" y="443" width="4" height="1"/><rect x="727" y="443" width="4" height="1"/><rect x="735" y="443" width="4" height="1"/><rect x="743" y="443" width="4" height="1"/><rect x="751" y="443" width="4" height="1"/><rect x="759" y="443" width="4" height="1"/><rect x="767" y="443" width="4" height="1"/><rect x="775" y="443" width="4" height="1"/><rect x="783" y="443" width="4" height="1"/><rect x="791" y="443" width="4" height="1"/><rect x="799" y="443" width="4" height="1"/><rect x="807" y="443" width="4" height="1"/><rect x="815" y="443" width="4" height="1"/><rect x="823" y="443" width="4" height="1"/><rect x="831" y="443" width="4" height="1"/><rect x="839" y="443" width="4" height="1"/><rect x="847" y="443" width="4" height="1"/><rect x="855" y="443" width="4" height="1"/><rect x="863" y="443" width="4" height="1"/><rect x="871" y="443" width="4" height="1"/><rect x="879" y="443" width="4" height="1"/><rect x="887" y="443" width="4" height="1"/><rect x="895" y="443" width="4" height="1"/><rect x="903" y="443" width="4" height="1"/><rect x="911" y="443" width="4" height="1"/><rect x="919" y="443" width="4" height="1"/><rect x="927" y="443" width="4" height="1"/><rect x="935" y="443" width="4" height="1"/><rect x="943" y="443" width="4" height="1"/><rect x="951" y="443" width="4" height="1"/><rect x="959" y="443" width="4" height="1"/><rect x="967" y="443" width="4" height="1"/><rect x="975" y="443" width="4" height="1"/><rect x="983" y="443" width="4" height="1"/><rect x="991" y="443" width="4" height="1"/><rect x="999" y="443" width="4" height="1"/><rect x="1007" y="443" width="4" height="1"/><rect x="1015" y="443" width="4" height="1"/><rect x="23" y="516" width="4" height="1"/><rect x="31" y="516" width="4" height="1"/><rect x="39" y="516" width="4" height="1"/><rect x="47" y="516" width="4" height="1"/><rect x="55" y="516" width="4" height="1"/><rect x="63" y="516" width="4" height="1"/><rect x="71" y="516" width="4" height="1"/><rect x="79" y="516" width="4" height="1"/><rect x="87" y="516" width="4" height="1"/><rect x="95" y="516" width="4" height="1"/><rect x="103" y="516" width="4" height="1"/><rect x="111" y="516" width="4" height="1"/><rect x="119" y="516" width="4" height="1"/><rect x="127" y="516" width="4" height="1"/><rect x="135" y="516" width="4" height="1"/><rect x="143" y="516" width="4" height="1"/><rect x="151" y="516" width="4" height="1"/><rect x="159" y="516" width="4" height="1"/><rect x="167" y="516" width="4" height="1"/><rect x="175" y="516" width="4" height="1"/><rect x="183" y="516" width="4" height="1"/><rect x="191" y="516" width="4" height="1"/><rect x="199" y="516" width="4" height="1"/><rect x="207" y="516" width="4" height="1"/><rect x="215" y="516" width="4" height="1"/><rect x="223" y="516" width="4" height="1"/><rect x="231" y="516" width="4" height="1"/><rect x="239" y="516" width="4" height="1"/><rect x="247" y="516" width="4" height="1"/><rect x="255" y="516" width="4" height="1"/><rect x="263" y="516" width="4" height="1"/><rect x="271" y="516" width="4" height="1"/><rect x="279" y="516" width="4" height="1"/><rect x="287" y="516" width="4" height="1"/><rect x="295" y="516" width="4" height="1"/><rect x="303" y="516" width="4" height="1"/><rect x="311" y="516" width="4" height="1"/><rect x="319" y="516" width="4" height="1"/><rect x="327" y="516" width="4" height="1"/><rect x="335" y="516" width="4" height="1"/><rect x="343" y="516" width="4" height="1"/><rect x="351" y="516" width="4" height="1"/><rect x="359" y="516" width="4" height="1"/><rect x="367" y="516" width="4" height="1"/><rect x="375" y="516" width="4" height="1"/><rect x="383" y="516" width="4" height="1"/><rect x="391" y="516" width="4" height="1"/><rect x="399" y="516" width="4" height="1"/><rect x="407" y="516" width="4" height="1"/><rect x="415" y="516" width="4" height="1"/><rect x="423" y="516" width="4" height="1"/><rect x="431" y="516" width="4" height="1"/><rect x="439" y="516" width="4" height="1"/><rect x="447" y="516" width="4" height="1"/><rect x="455" y="516" width="4" height="1"/><rect x="463" y="516" width="4" height="1"/><rect x="471" y="516" width="4" height="1"/><rect x="479" y="516" width="4" height="1"/><rect x="487" y="516" width="4" height="1"/><rect x="495" y="516" width="4" height="1"/><rect x="503" y="516" width="4" height="1"/><rect x="511" y="516" width="4" height="1"/><rect x="519" y="516" width="4" height="1"/><rect x="527" y="516" width="4" height="1"/><rect x="535" y="516" width="4" height="1"/><rect x="543" y="516" width="4" height="1"/><rect x="551" y="516" width="4" height="1"/><rect x="559" y="516" width="4" height="1"/><rect x="567" y="516" width="4" height="1"/><rect x="575" y="516" width="4" height="1"/><rect x="583" y="516" width="4" height="1"/><rect x="591" y="516" width="4" height="1"/><rect x="599" y="516" width="4" height="1"/><rect x="607" y="516" width="4" height="1"/><rect x="615" y="516" width="4" height="1"/><rect x="623" y="516" width="4" height="1"/><rect x="631" y="516" width="4" height="1"/><rect x="639" y="516" width="4" height="1"/><rect x="647" y="516" width="4" height="1"/><rect x="655" y="516" width="4" height="1"/><rect x="663" y="516" width="4" height="1"/><rect x="671" y="516" width="4" height="1"/><rect x="679" y="516" width="4" height="1"/><rect x="687" y="516" width="4" height="1"/><rect x="695" y="516" width="4" height="1"/><rect x="703" y="516" width="4" height="1"/><rect x="711" y="516" width="4" height="1"/><rect x="719" y="516" width="4" height="1"/><rect x="727" y="516" width="4" height="1"/><rect x="735" y="516" width="4" height="1"/><rect x="743" y="516" width="4" height="1"/><rect x="751" y="516" width="4" height="1"/><rect x="759" y="516" width="4" height="1"/><rect x="767" y="516" width="4" height="1"/><rect x="775" y="516" width="4" height="1"/><rect x="783" y="516" width="4" height="1"/><rect x="791" y="516" width="4" height="1"/><rect x="799" y="516" width="4" height="1"/><rect x="807" y="516" width="4" height="1"/><rect x="815" y="516" width="4" height="1"/><rect x="823" y="516" width="4" height="1"/><rect x="831" y="516" width="4" height="1"/><rect x="839" y="516" width="4" height="1"/><rect x="847" y="516" width="4" height="1"/><rect x="855" y="516" width="4" height="1"/><rect x="863" y="516" width="4" height="1"/><rect x="871" y="516" width="4" height="1"/><rect x="879" y="516" width="4" height="1"/><rect x="887" y="516" width="4" height="1"/><rect x="895" y="516" width="4" height="1"/><rect x="903" y="516" width="4" height="1"/><rect x="911" y="516" width="4" height="1"/><rect x="919" y="516" width="4" height="1"/><rect x="927" y="516" width="4" height="1"/><rect x="935" y="516" width="4" height="1"/><rect x="943" y="516" width="4" height="1"/><rect x="951" y="516" width="4" height="1"/><rect x="959" y="516" width="4" height="1"/><rect x="967" y="516" width="4" height="1"/><rect x="975" y="516" width="4" height="1"/><rect x="983" y="516" width="4" height="1"/><rect x="991" y="516" width="4" height="1"/><rect x="999" y="516" width="4" height="1"/><rect x="1007" y="516" width="4" height="1"/><rect x="1015" y="516" width="4" height="1"/></g><rect x="482.5" y="436.5" width="14" height="14" fill="none" stroke="#a000a0" stroke-width="1" shape-rendering="crispEdges"/><circle cx="511.5" cy="516.5" r="7" fill="none" stroke="#a000a0" stroke-width="1"/><path d="M0.5,75.5 H13.5 L20,83.5 L13.5,91.5 H0.5 Z" fill="#000" stroke="#ff40ff" stroke-width="1.6"/><text x="4" y="89" font-size="14" fill="#b000b8" font-family="Liberation Sans" textLength="8" lengthAdjust="spacingAndGlyphs" stroke="#b000b8" stroke-width="0.2" >3</text><path d="M0,654 H14 L20.5,662 L14,670 H0 Z" fill="#ffff00"/><text x="3" y="668" font-size="15" fill="#000" font-family="Liberation Sans" textLength="8" lengthAdjust="spacingAndGlyphs" font-weight="bold" >1</text><path d="M1009.5,625.5 L1016,620 L1016,631 Z" fill="#ffff00"/><rect x="1016" y="625" width="5" height="1" fill="#ffff00"/><path d="M517,6.5 Q517,5 518.5,5 H523.5 Q525,5 525,6.5 V15 L524,16 H518 L517,15 Z" fill="#ff9900"/><rect x="518" y="6" width="6" height="1" fill="#000"/><rect x="520" y="7" width="1" height="8" fill="#000"/><path d="M518,1 H525 L521.5,4.5 Z" fill="#ff9900"/><rect x="521" y="1" width="2" height="14" fill="#ffffff"/><path d="M515.5,17 H527.5 L521.5,23 Z" fill="#ff9900"/><path d="M515,25.5 Q515,24 516.5,24 H525.5 Q527,24 527,25.5 V35 L521,39 L515,35 Z" fill="#ff9900"/><rect x="516" y="25" width="10" height="2" fill="#000"/><rect x="520" y="25" width="2" height="11" fill="#000"/><circle cx="500" cy="30" r="8.7" fill="#ff4800"/><rect x="491" y="25" width="3" height="10" fill="#ff4800"/><rect x="497" y="24" width="2" height="12" fill="#000"/><ellipse cx="502" cy="31.5" rx="2.6" ry="3.1" fill="none" stroke="#000" stroke-width="2"/><text x="-0.5" y="14.8" font-size="20.5" fill="#f2f2fa" font-family="Liberation Serif" textLength="12" lengthAdjust="spacingAndGlyphs" font-weight="bold" >T</text><text x="8.5" y="14.8" font-size="20.5" fill="#f2f2fa" font-family="Liberation Serif" textLength="10" lengthAdjust="spacingAndGlyphs" font-weight="bold" >e</text><text x="18.5" y="14.8" font-size="20.5" fill="#f2f2fa" font-family="Liberation Serif" textLength="12.5" lengthAdjust="spacingAndGlyphs" font-weight="bold" >k</text><text x="36" y="13" font-size="15" fill="#f2f2fa" font-family="Liberation Sans" textLength="29.5" lengthAdjust="spacingAndGlyphs" stroke="#f2f2fa" stroke-width="0.2" >Run</text><text x="926" y="12.7" font-size="15" fill="#f2f2fa" font-family="Liberation Sans" textLength="38.5" lengthAdjust="spacingAndGlyphs" stroke="#f2f2fa" stroke-width="0.2" >Trig?</text><rect x="708.5" y="40.5" width="301" height="59" rx="8" fill="#000" stroke="#e8e8e8" stroke-width="1"/><rect x="727.5" y="44.5" width="14" height="14" fill="none" stroke="#c800c8" stroke-width="1"/><circle cx="734.5" cy="71" r="7.3" fill="none" stroke="#c800c8" stroke-width="1"/><circle cx="755" cy="51.8" r="8" fill="#ff4800"/><circle cx="755" cy="71" r="8" fill="#ff4800"/><text x="750.5" y="56.7" font-size="18" fill="#000" font-family="Liberation Sans" textLength="8.8" lengthAdjust="spacingAndGlyphs" font-weight="bold" >a</text><text x="751" y="76" font-size="14" fill="#000" font-family="Liberation Sans" textLength="8.5" lengthAdjust="spacingAndGlyphs" font-weight="bold" >b</text><text x="783.5" y="56.6" font-size="14.5" fill="#c800c8" font-family="Liberation Sans" textLength="75" lengthAdjust="spacingAndGlyphs" stroke="#c800c8" stroke-width="0.2" >−128.0ns</text><text x="783.5" y="75.5" font-size="14.5" fill="#c800c8" font-family="Liberation Sans" textLength="75" lengthAdjust="spacingAndGlyphs" stroke="#c800c8" stroke-width="0.2" >−40.00ns</text><text x="782" y="94.6" font-size="14.5" fill="#c800c8" font-family="Liberation Sans" textLength="78" lengthAdjust="spacingAndGlyphs" stroke="#c800c8" stroke-width="0.2" >Δ88.00ns</text><text x="911.5" y="56.6" font-size="14.5" fill="#c800c8" font-family="Liberation Sans" textLength="82" lengthAdjust="spacingAndGlyphs" stroke="#c800c8" stroke-width="0.2" >−277.0mV</text><text x="911.5" y="75.5" font-size="14.5" fill="#c800c8" font-family="Liberation Sans" textLength="82" lengthAdjust="spacingAndGlyphs" stroke="#c800c8" stroke-width="0.2" >−333.0mV</text><text x="910" y="94.6" font-size="14.5" fill="#c800c8" font-family="Liberation Sans" textLength="85" lengthAdjust="spacingAndGlyphs" stroke="#c800c8" stroke-width="0.2" >Δ56.00mV</text><rect x="20.5" y="670.5" width="554" height="20" rx="5.5" fill="#000" stroke="#e0e0e0" stroke-width="1"/><rect x="26" y="673" width="25" height="16" rx="8" fill="#ffff00"/><text x="34" y="686.5" font-size="15" fill="#000" font-family="Liberation Sans" textLength="8" lengthAdjust="spacingAndGlyphs" font-weight="bold" >1</text><text x="67.5" y="686" font-size="15" fill="#ffff00" font-family="Liberation Sans" textLength="51" lengthAdjust="spacingAndGlyphs" stroke="#ffff00" stroke-width="0.2" >5.00 V</text><text x="144" y="682.5" font-size="9" fill="#ffff00" font-family="Liberation Sans" textLength="5" lengthAdjust="spacingAndGlyphs" stroke="#ffff00" stroke-width="0.2" >B</text><text x="147.5" y="686.5" font-size="9" fill="#ffff00" font-family="Liberation Sans" textLength="6" lengthAdjust="spacingAndGlyphs" stroke="#ffff00" stroke-width="0.2" >W</text><rect x="304" y="673" width="25" height="16" rx="8" fill="#aa00aa"/><text x="312" y="686.5" font-size="15" fill="#000" font-family="Liberation Sans" textLength="8" lengthAdjust="spacingAndGlyphs" font-weight="bold" >3</text><text x="346" y="686" font-size="15" fill="#c800c8" font-family="Liberation Sans" textLength="74" lengthAdjust="spacingAndGlyphs" stroke="#c800c8" stroke-width="0.2" >50.0mVΩ</text><text x="421" y="682.5" font-size="9" fill="#c800c8" font-family="Liberation Sans" textLength="5" lengthAdjust="spacingAndGlyphs" stroke="#c800c8" stroke-width="0.2" >B</text><text x="424.5" y="686.5" font-size="9" fill="#c800c8" font-family="Liberation Sans" textLength="6" lengthAdjust="spacingAndGlyphs" stroke="#c800c8" stroke-width="0.2" >W</text><rect x="582.5" y="670.5" width="146" height="37" rx="5.5" fill="#000" stroke="#e0e0e0" stroke-width="1"/><text x="587.5" y="686" font-size="15" fill="#f2f2fa" font-family="Liberation Sans" textLength="48" lengthAdjust="spacingAndGlyphs" stroke="#f2f2fa" stroke-width="0.2" >400ns</text><rect x="587.5" y="691.5" width="11" height="12" rx="1.5" fill="#ff9900"/><rect x="589" y="693" width="8" height="2" fill="#000"/><rect x="592" y="693" width="2" height="9" fill="#000"/><path d="M599,697.5 H606 M603.5,695 L606.5,697.5 L603.5,700" stroke="#ff9900" stroke-width="1.6" fill="none"/><path d="M608,693.5 H620 L614,700.5 Z" fill="#ff9900"/><text x="622.5" y="703.3" font-size="15" fill="#ff9900" font-family="Liberation Sans" textLength="87" lengthAdjust="spacingAndGlyphs" stroke="#ff9900" stroke-width="0.2" >0.000000 s</text><rect x="737.5" y="670.5" width="106" height="37" rx="5.5" fill="#000" stroke="#e0e0e0" stroke-width="1"/><text x="743.5" y="686" font-size="15" fill="#f2f2fa" font-family="Liberation Sans" textLength="71" lengthAdjust="spacingAndGlyphs" stroke="#f2f2fa" stroke-width="0.2" >2.50GS/s</text><text x="743.5" y="703" font-size="15" fill="#f2f2fa" font-family="Liberation Sans" textLength="80" lengthAdjust="spacingAndGlyphs" stroke="#f2f2fa" stroke-width="0.2" >5M points</text><rect x="851.5" y="670.5" width="170" height="37" rx="5.5" fill="#000" stroke="#e0e0e0" stroke-width="1"/><rect x="882" y="673" width="25" height="16" rx="8" fill="#ffff00"/><text x="890" y="686.5" font-size="15" fill="#000" font-family="Liberation Sans" textLength="8" lengthAdjust="spacingAndGlyphs" font-weight="bold" >1</text><path d="M920,685.5 H925 L929,675.5 H932" stroke="#f2f2fa" stroke-width="2" fill="none"/><text x="965.5" y="686" font-size="15" fill="#f2f2fa" font-family="Liberation Sans" textLength="50" lengthAdjust="spacingAndGlyphs" stroke="#f2f2fa" stroke-width="0.2" >2.80 V</text><path d="M23,714 H131 L134,717 V773 L131,776 H23 L20,773 V717 Z" fill="#6c6c6a"/><path d="M23,714 H131 L133,716 H21 Z" fill="#858585"/><rect x="22" y="716" width="110" height="58" fill="#535552"/><path d="M141,714 H249 L252,717 V765 L249,768 H141 L138,765 V717 Z" fill="#6c6c6a"/><path d="M141,714 H249 L251,716 H139 Z" fill="#858585"/><rect x="141" y="766" width="108" height="2" fill="#7c7c7c"/><rect x="140" y="716" width="110" height="50" fill="#535552"/><path d="M259,714 H367 L370,717 V773 L367,776 H259 L256,773 V717 Z" fill="#6c6c6a"/><path d="M259,714 H367 L369,716 H257 Z" fill="#858585"/><rect x="258" y="716" width="110" height="58" fill="#535552"/><path d="M377,714 H485 L488,717 V773 L485,776 H377 L374,773 V717 Z" fill="#6c6c6a"/><path d="M377,714 H485 L487,716 H375 Z" fill="#858585"/><rect x="376" y="716" width="110" height="58" fill="#535552"/><path d="M495,714 H603 L606,717 V765 L603,768 H495 L492,765 V717 Z" fill="#6c6c6a"/><path d="M495,714 H603 L605,716 H493 Z" fill="#858585"/><rect x="495" y="766" width="108" height="2" fill="#7c7c7c"/><rect x="494" y="716" width="110" height="50" fill="#313131"/><path d="M613,714 H721 L724,717 V765 L721,768 H613 L610,765 V717 Z" fill="#6c6c6a"/><path d="M613,714 H721 L723,716 H611 Z" fill="#858585"/><rect x="613" y="766" width="108" height="2" fill="#7c7c7c"/><rect x="612" y="716" width="110" height="50" fill="#535552"/><text x="47.5" y="728.6" font-size="14.5" fill="#f2f2fa" font-family="Liberation Sans" textLength="60" lengthAdjust="spacingAndGlyphs" stroke="#f2f2fa" stroke-width="0.2" >Cursors</text><text x="38" y="747.8" font-size="14.5" fill="#f2f2fa" font-family="Liberation Sans" textLength="79" lengthAdjust="spacingAndGlyphs" stroke="#f2f2fa" stroke-width="0.2" >Waveform</text><rect x="46.5" y="751.5" width="60" height="16" rx="2.5" fill="#0f6ef5" stroke="#d0dcf0" stroke-width="1"/><text x="50" y="764" font-size="14.5" fill="#f2f2fa" font-family="Liberation Sans" textLength="52.5" lengthAdjust="spacingAndGlyphs" stroke="#f2f2fa" stroke-width="0.2" >Screen</text><text x="168.5" y="738" font-size="14.5" fill="#f2f2fa" font-family="Liberation Sans" textLength="53" lengthAdjust="spacingAndGlyphs" stroke="#f2f2fa" stroke-width="0.2" >Source</text><rect x="183" y="742" width="25" height="16" rx="8" fill="#aa00aa"/><text x="191.5" y="755" font-size="14.5" fill="#000" font-family="Liberation Sans" textLength="8" lengthAdjust="spacingAndGlyphs" font-weight="bold" >3</text><text x="297.5" y="728.6" font-size="14.5" fill="#f2f2fa" font-family="Liberation Sans" textLength="32" lengthAdjust="spacingAndGlyphs" stroke="#f2f2fa" stroke-width="0.2" >Bars</text><text x="272" y="747.8" font-size="14.5" fill="#f2f2fa" font-family="Liberation Sans" textLength="83" lengthAdjust="spacingAndGlyphs" stroke="#f2f2fa" stroke-width="0.2" >Horizontal</text><rect x="279.5" y="751.5" width="68" height="16" rx="2.5" fill="#0f6ef5" stroke="#d0dcf0" stroke-width="1"/><text x="282.5" y="764" font-size="14.5" fill="#f2f2fa" font-family="Liberation Sans" textLength="62" lengthAdjust="spacingAndGlyphs" stroke="#f2f2fa" stroke-width="0.2" >Vertical</text><text x="406.5" y="732.8" font-size="14.5" fill="#f2f2fa" font-family="Liberation Sans" textLength="51.5" lengthAdjust="spacingAndGlyphs" stroke="#f2f2fa" stroke-width="0.2" >Linked</text><text x="390.5" y="759.5" font-size="14.5" fill="#f2f2fa" font-family="Liberation Sans" textLength="23" lengthAdjust="spacingAndGlyphs" stroke="#f2f2fa" stroke-width="0.2" >On</text><rect x="443.5" y="742.5" width="32" height="25" rx="2.5" fill="#0f6ef5" stroke="#d0dcf0" stroke-width="1"/><text x="447.5" y="759.5" font-size="14.5" fill="#f2f2fa" font-family="Liberation Sans" textLength="24.5" lengthAdjust="spacingAndGlyphs" stroke="#f2f2fa" stroke-width="0.2" >Off</text><text x="529.5" y="728.6" font-size="14.5" fill="#78786f" font-family="Liberation Sans" textLength="41" lengthAdjust="spacingAndGlyphs" stroke="#78786f" stroke-width="0.2" >Bring</text><text x="519.5" y="745.5" font-size="14.5" fill="#78786f" font-family="Liberation Sans" textLength="60" lengthAdjust="spacingAndGlyphs" stroke="#78786f" stroke-width="0.2" >Cursors</text><text x="508.5" y="763" font-size="14.5" fill="#78786f" font-family="Liberation Sans" textLength="81.5" lengthAdjust="spacingAndGlyphs" stroke="#78786f" stroke-width="0.2" >On Screen</text><text x="641.5" y="738" font-size="14.5" fill="#f2f2fa" font-family="Liberation Sans" textLength="52.5" lengthAdjust="spacingAndGlyphs" stroke="#f2f2fa" stroke-width="0.2" >Cursor</text><text x="647.5" y="754.9" font-size="14.5" fill="#f2f2fa" font-family="Liberation Sans" textLength="41.5" lengthAdjust="spacingAndGlyphs" stroke="#f2f2fa" stroke-width="0.2" >Units</text><rect x="909.5" y="729.5" width="112" height="36" rx="6" fill="#000" stroke="#e0e0e0" stroke-width="1"/><text x="915.5" y="745.3" font-size="15" fill="#f2f2fa" font-family="Liberation Sans" textLength="54" lengthAdjust="spacingAndGlyphs" stroke="#f2f2fa" stroke-width="0.2" >12 Apr</text><text x="978.5" y="745.3" font-size="15" fill="#f2f2fa" font-family="Liberation Sans" textLength="38" lengthAdjust="spacingAndGlyphs" stroke="#f2f2fa" stroke-width="0.2" >2024</text><text x="915.5" y="761.6" font-size="15" fill="#f2f2fa" font-family="Liberation Sans" textLength="70.5" lengthAdjust="spacingAndGlyphs" stroke="#f2f2fa" stroke-width="0.2" >20:22:59</text>
</svg>
</body></html>
